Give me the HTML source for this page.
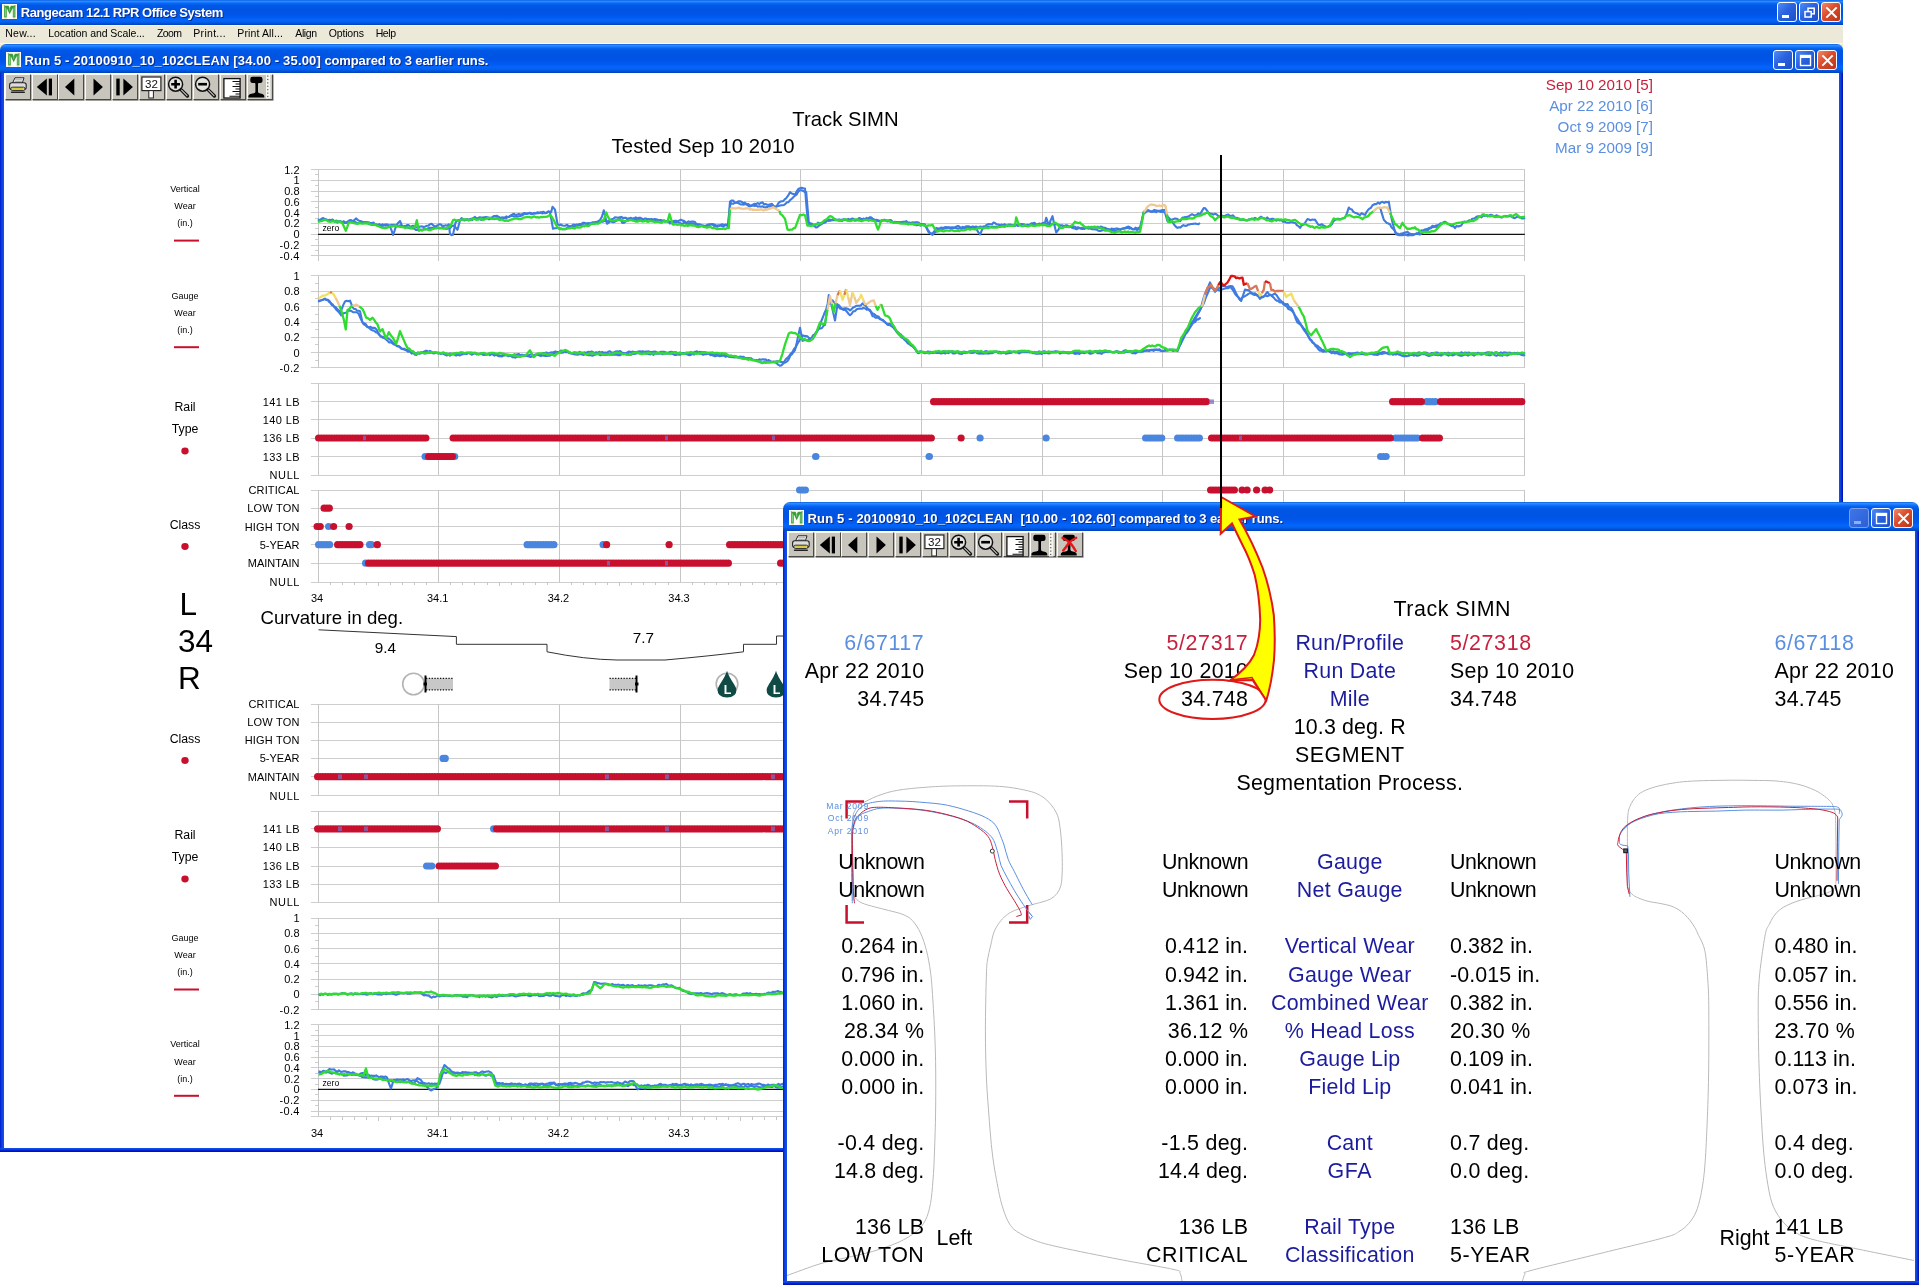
<!DOCTYPE html><html lang="en"><head><meta charset="utf-8"><title>Rangecam 12.1 RPR Office System</title><style>

*{box-sizing:border-box}
html,body{margin:0;padding:0;background:#fff}
body{width:1920px;height:1286px;position:relative;overflow:hidden;font-family:"Liberation Sans",sans-serif;color:#000}
.abs{position:absolute}
.tb{position:absolute;left:0;background:linear-gradient(to bottom,#0a5fe0 0%,#2f8bff 5%,#1a7cff 9%,#0566f3 14%,#0058e6 22%,#0054e3 40%,#0055e8 58%,#005bf3 70%,#0465fb 80%,#0160ee 88%,#0050d6 94%,#0040b8 100%)}
.ttl{position:absolute;color:#fff;font-weight:bold;font-size:13px;white-space:pre;text-shadow:1px 1px 0 #0a2a8a;line-height:16px}
.menu{position:absolute;left:0;top:25px;width:1843px;height:19px;background:#ece9d8;border-top:1px solid #f4f6fb;border-bottom:1px solid #fbfaf4}
.menu span{position:absolute;top:1.1px;font-size:10.5px;line-height:13px;white-space:pre;color:#000}
.btn{position:absolute;width:26px;height:25.6px;background:#c8c5bd;border:1px solid;border-color:#fbfaf6 #4a4844 #4a4844 #fbfaf6;border-right-width:1.4px;border-bottom-width:1.6px;box-shadow:0.6px 0.8px 0 #8a8880;overflow:visible}
.btn svg{position:absolute;left:0;top:0}
.cb{position:absolute;width:20px;height:20px;border:1px solid #fff;border-radius:3px;background:linear-gradient(135deg,#4f8df6 0%,#2a62e0 45%,#1c4fc8 100%)}
.cb.x{background:linear-gradient(135deg,#f0896a 0%,#dc4c2a 45%,#b8351a 100%)}
.cb.dis{border-color:#7d9ee8;background:linear-gradient(135deg,#3f76e6 0%,#2a5fd8 100%)}
.cb svg{position:absolute;left:0;top:0}
.t{position:absolute;white-space:pre}

</style></head><body><div id="root" style="position:absolute;left:0;top:0;width:1920px;height:1286px;will-change:transform">
<div class="tb" style="top:0;width:1843px;height:25px"></div><svg class="abs" style="left:2.1px;top:3.9px" width="15.4" height="15.4" viewBox="0 0 16 16"><rect x="0" y="0" width="16" height="16" fill="#fcfcf6"/><path d="M3.6 13.6V3.2H5.9L8 7.6L10.1 3.2H12.6V13.6" fill="none" stroke="#3a9c3a" stroke-width="2.7" stroke-linejoin="miter"/><path d="M3.7 13V3.6M12.5 13V3.6M8 4V7" stroke="#8ed88e" stroke-width="0.9"/><path d="M2.2 14.2H5M11.2 14.2H14M12.6 1.7H14.2M1.8 1.7H3" stroke="#e89a4a" stroke-width="1.1"/></svg><div class="ttl" style="left:20.8px;top:5px;letter-spacing:-0.45px">Rangecam 12.1 RPR Office System</div><div class="cb" style="left:1777px;top:2px"><svg width="19" height="19" viewBox="0 0 19 19"><rect x="4" y="12" width="7" height="3" fill="#fff"/></svg></div><div class="cb" style="left:1799px;top:2px"><svg width="19" height="19" viewBox="0 0 19 19"><rect x="8" y="5.2" width="6.2" height="5.6" fill="none" stroke="#fff" stroke-width="1.5"/><rect x="5" y="8.6" width="6.2" height="5.4" fill="#2a62e0" stroke="#fff" stroke-width="1.5"/></svg></div><div class="cb x" style="left:1821px;top:2px"><svg width="19" height="19" viewBox="0 0 19 19"><path d="M5 5L14 14M14 5L5 14" stroke="#fff" stroke-width="1.9" stroke-linecap="square"/></svg></div><div class="menu"><span style="left:5.3px;letter-spacing:0.24px">New...</span><span style="left:48.3px;letter-spacing:-0.08px">Location and Scale...</span><span style="left:157px;letter-spacing:-0.6px">Zoom</span><span style="left:193.3px;letter-spacing:0.29px">Print...</span><span style="left:237.3px;letter-spacing:0.12px">Print All...</span><span style="left:295.3px;letter-spacing:-0.41px">Align</span><span style="left:328.7px;letter-spacing:-0.15px">Options</span><span style="left:375.7px;letter-spacing:-0.43px">Help</span></div><div class="abs" style="left:0;top:44px;width:1843px;height:9px;background:#ece9d8"></div><div class="abs" style="left:0px;top:52px;width:1843px;height:1100px;background:#fff"></div><div class="abs" style="left:0px;top:52px;width:4px;height:1100px;background:linear-gradient(to right,#0019cf 0,#0a3cdc 35%,#1652e8 100%)"></div><div class="abs" style="left:1839px;top:52px;width:4px;height:1100px;background:linear-gradient(to right,#1652e8 0,#0a3cdc 50%,#0019cf 80%,#00138f 100%)"></div><div class="abs" style="left:0px;top:1148px;width:1843px;height:4px;background:linear-gradient(to bottom,#1652e8 0,#0a3cdc 40%,#0019cf 70%,#00138f 100%)"></div><div class="tb" style="top:44px;width:1843px;height:29px;border-radius:6px 6px 0 0;background-clip:padding-box"></div><svg class="abs" style="left:5.8px;top:51.8px" width="15.4" height="15.4" viewBox="0 0 16 16"><rect x="0" y="0" width="16" height="16" fill="#fcfcf6"/><path d="M3.6 13.6V3.2H5.9L8 7.6L10.1 3.2H12.6V13.6" fill="none" stroke="#3a9c3a" stroke-width="2.7" stroke-linejoin="miter"/><path d="M3.7 13V3.6M12.5 13V3.6M8 4V7" stroke="#8ed88e" stroke-width="0.9"/><path d="M2.2 14.2H5M11.2 14.2H14M12.6 1.7H14.2M1.8 1.7H3" stroke="#e89a4a" stroke-width="1.1"/></svg><div class="ttl" style="left:24.5px;top:52.6px;letter-spacing:0.15px">Run 5 - 20100910_10_102CLEAN [34.00 - 35.00]<span style="letter-spacing:-0.11px"> compared to 3 earlier runs.</span></div><div class="cb" style="left:1773px;top:50px"><svg width="19" height="19" viewBox="0 0 19 19"><rect x="4" y="12" width="7" height="3" fill="#fff"/></svg></div><div class="cb" style="left:1795px;top:50px"><svg width="19" height="19" viewBox="0 0 19 19"><rect x="4.5" y="4.5" width="10" height="10" fill="none" stroke="#fff" stroke-width="1.4"/><rect x="4" y="4" width="11" height="3" fill="#fff"/></svg></div><div class="cb x" style="left:1817px;top:50px"><svg width="19" height="19" viewBox="0 0 19 19"><path d="M5 5L14 14M14 5L5 14" stroke="#fff" stroke-width="1.9" stroke-linecap="square"/></svg></div><div class="btn" style="left:4.6px;top:74.2px"><svg width="26" height="26" viewBox="0 0 26 26" style="left:-1px;top:-1px"><path d="M7.5 9L10 3.8H19L17.3 9Z" fill="#fff" stroke="#222" stroke-width="1"/><path d="M10.2 5.8H17.3M9.6 7.4H16.8" stroke="#777" stroke-width=".7"/><rect x="4.6" y="8.8" width="16.6" height="6.6" rx="2.2" fill="#dcdcdc" stroke="#222" stroke-width="1.1"/><rect x="6" y="13.2" width="13.8" height="3.2" rx="1.2" fill="#f4f4f4" stroke="#222" stroke-width="1"/><path d="M7 14.9H18.8" stroke="#cdb800" stroke-width="1.3"/><path d="M6.6 18.2H19.2" stroke="#222" stroke-width="1.6" stroke-linecap="round"/></svg></div><div class="btn" style="left:31.5px;top:74.2px"><svg width="26" height="26" viewBox="0 0 26 26" style="left:-1px;top:-1px"><path d="M4.8 13L14.8 4.6V21.4Z" fill="#000"/><rect x="16.8" y="4.6" width="3.2" height="16.8" fill="#000"/></svg></div><div class="btn" style="left:58.4px;top:74.2px"><svg width="26" height="26" viewBox="0 0 26 26" style="left:-1px;top:-1px"><path d="M7 13L16.3 4.6V21.4Z" fill="#000"/></svg></div><div class="btn" style="left:85.29999999999998px;top:74.2px"><svg width="26" height="26" viewBox="0 0 26 26" style="left:-1px;top:-1px"><path d="M17.9 13L8.5 4.6V21.4Z" fill="#000"/></svg></div><div class="btn" style="left:112.19999999999999px;top:74.2px"><svg width="26" height="26" viewBox="0 0 26 26" style="left:-1px;top:-1px"><rect x="4.3" y="4.6" width="3.4" height="16.8" fill="#000"/><path d="M20.9 13L11.4 4.6V21.4Z" fill="#000"/></svg></div><div class="btn" style="left:139.1px;top:74.2px"><svg width="26" height="26" viewBox="0 0 26 26" style="left:-1px;top:-1px"><rect x="2.9" y="3" width="19" height="13.6" fill="#fff" stroke="#222" stroke-width="1.2"/><rect x="9.8" y="16.6" width="4.6" height="7.4" fill="#fff" stroke="#222" stroke-width="1"/><text x="12.4" y="14.2" font-family="Liberation Sans,sans-serif" font-size="11.6" text-anchor="middle" fill="#111">32</text></svg></div><div class="btn" style="left:165.99999999999997px;top:74.2px"><svg width="26" height="26" viewBox="0 0 26 26" style="left:-1px;top:-1px"><circle cx="9.6" cy="10.2" r="7" fill="#e2e2de" stroke="#111" stroke-width="1.5"/><path d="M9.6 5.8V14.6M5.2 10.2H14" stroke="#000" stroke-width="2.6"/><path d="M15 15.6L21.4 22" stroke="#111" stroke-width="3.4" stroke-linecap="round"/><path d="M15.6 16.2L21 21.6" stroke="#c8c8c8" stroke-width="1.1" stroke-linecap="round"/></svg></div><div class="btn" style="left:192.89999999999998px;top:74.2px"><svg width="26" height="26" viewBox="0 0 26 26" style="left:-1px;top:-1px"><circle cx="9.6" cy="10.2" r="7" fill="#e2e2de" stroke="#111" stroke-width="1.5"/><path d="M5.2 10.2H14" stroke="#000" stroke-width="2.6"/><path d="M15 15.6L21.4 22" stroke="#111" stroke-width="3.4" stroke-linecap="round"/><path d="M15.6 16.2L21 21.6" stroke="#c8c8c8" stroke-width="1.1" stroke-linecap="round"/></svg></div><div class="btn" style="left:219.79999999999998px;top:74.2px"><svg width="26" height="26" viewBox="0 0 26 26" style="left:-1px;top:-1px"><rect x="3.9" y="4.6" width="16.2" height="19.4" fill="#fff" stroke="#111" stroke-width="1.3"/><path d="M12.5 7.5H20M15.5 10H20M12.5 12.5H20M15.5 15H20M12.5 17.5H20M15.5 20H20M9.5 22.3H20" stroke="#111" stroke-width="1.1"/></svg></div><div class="btn" style="left:246.7px;top:74.2px"><svg width="26" height="26" viewBox="0 0 26 26" style="left:-1px;top:-1px"><path d="M5.50 2.8 H13.30 Q15.50 2.8 15.50 5 V7 Q15.50 9.1 13.30 9.1 H11.80 Q11.00 9.1 11.00 10 V17.5 Q11.00 19 12.50 19.2 L15.50 20 Q17.30 20.8 17.30 22 V23.4 H1.40 V22 Q1.40 20.8 3.20 20 L6.90 19.2 Q8.40 19 8.40 17.5 V10 Q8.40 9.1 7.60 9.1 H5.50 Q3.30 9.1 3.30 7 V5 Q3.30 2.8 5.50 2.8 Z" fill="#000"/><rect x="19" y="1" width="4.4" height="23.5" fill="#f6f6f2"/><path d="M20.8 1.5V24" stroke="#333" stroke-width="1" stroke-dasharray="1.2 2.2"/></svg></div>
<div class="abs" style="left:4px;top:73px;width:1835px;height:1075px;overflow:hidden"><div class="abs" style="left:-4px;top:-73px;width:1920px;height:1286px">
<svg class="abs" style="left:0;top:0" width="1920" height="1286" viewBox="0 0 1920 1286" font-family="Liberation Sans,sans-serif" fill="#000"><g fill="none" stroke-width="1" shape-rendering="crispEdges"><path d="M311 169.5H1524.8" stroke="#cecece"/><path d="M311 180.2H1524.8" stroke="#cecece"/><path d="M311 191H1524.8" stroke="#cecece"/><path d="M311 201.8H1524.8" stroke="#cecece"/><path d="M311 212.6H1524.8" stroke="#cecece"/><path d="M311 223.4H1524.8" stroke="#cecece"/><path d="M311 234.3H1524.8" stroke="#cecece"/><path d="M311 245H1524.8" stroke="#cecece"/><path d="M311 255.8H1524.8" stroke="#cecece"/><path d="M314.5 174.8H318" stroke="#cecece"/><path d="M314.5 185.6H318" stroke="#cecece"/><path d="M314.5 196.4H318" stroke="#cecece"/><path d="M314.5 207.2H318" stroke="#cecece"/><path d="M314.5 218H318" stroke="#cecece"/><path d="M314.5 228.9H318" stroke="#cecece"/><path d="M314.5 239.7H318" stroke="#cecece"/><path d="M314.5 250.4H318" stroke="#cecece"/><path d="M318 169.5V261" stroke="#c6c6c6"/><path d="M438.7 169.5V261" stroke="#c6c6c6"/><path d="M559.4 169.5V261" stroke="#c6c6c6"/><path d="M680 169.5V261" stroke="#c6c6c6"/><path d="M800.7 169.5V261" stroke="#c6c6c6"/><path d="M921.4 169.5V261" stroke="#c6c6c6"/><path d="M1042.1 169.5V261" stroke="#c6c6c6"/><path d="M1162.8 169.5V261" stroke="#c6c6c6"/><path d="M1283.4 169.5V261" stroke="#c6c6c6"/><path d="M1404.1 169.5V261" stroke="#c6c6c6"/><path d="M1524.8 169.5V261" stroke="#c6c6c6"/><path d="M311 275.6H1524.8" stroke="#cecece"/><path d="M311 291.4H1524.8" stroke="#cecece"/><path d="M311 306.5H1524.8" stroke="#cecece"/><path d="M311 322H1524.8" stroke="#cecece"/><path d="M311 337.3H1524.8" stroke="#cecece"/><path d="M311 352.5H1524.8" stroke="#cecece"/><path d="M311 367.8H1524.8" stroke="#cecece"/><path d="M314.5 283.5H318" stroke="#cecece"/><path d="M314.5 298.9H318" stroke="#cecece"/><path d="M314.5 314.2H318" stroke="#cecece"/><path d="M314.5 329.6H318" stroke="#cecece"/><path d="M314.5 344.9H318" stroke="#cecece"/><path d="M314.5 360.1H318" stroke="#cecece"/><path d="M318 275.6V368" stroke="#c6c6c6"/><path d="M438.7 275.6V368" stroke="#c6c6c6"/><path d="M559.4 275.6V368" stroke="#c6c6c6"/><path d="M680 275.6V368" stroke="#c6c6c6"/><path d="M800.7 275.6V368" stroke="#c6c6c6"/><path d="M921.4 275.6V368" stroke="#c6c6c6"/><path d="M1042.1 275.6V368" stroke="#c6c6c6"/><path d="M1162.8 275.6V368" stroke="#c6c6c6"/><path d="M1283.4 275.6V368" stroke="#c6c6c6"/><path d="M1404.1 275.6V368" stroke="#c6c6c6"/><path d="M1524.8 275.6V368" stroke="#c6c6c6"/><path d="M311 383H1524.8" stroke="#cecece"/><path d="M311 401.7H1524.8" stroke="#cecece"/><path d="M311 419.8H1524.8" stroke="#cecece"/><path d="M311 438H1524.8" stroke="#cecece"/><path d="M311 456.5H1524.8" stroke="#cecece"/><path d="M311 475.2H1524.8" stroke="#cecece"/><path d="M318 383V475.2" stroke="#c6c6c6"/><path d="M438.7 383V475.2" stroke="#c6c6c6"/><path d="M559.4 383V475.2" stroke="#c6c6c6"/><path d="M680 383V475.2" stroke="#c6c6c6"/><path d="M800.7 383V475.2" stroke="#c6c6c6"/><path d="M921.4 383V475.2" stroke="#c6c6c6"/><path d="M1042.1 383V475.2" stroke="#c6c6c6"/><path d="M1162.8 383V475.2" stroke="#c6c6c6"/><path d="M1283.4 383V475.2" stroke="#c6c6c6"/><path d="M1404.1 383V475.2" stroke="#c6c6c6"/><path d="M1524.8 383V475.2" stroke="#c6c6c6"/><path d="M311 490H1524.8" stroke="#cecece"/><path d="M311 508.2H1524.8" stroke="#cecece"/><path d="M311 526.5H1524.8" stroke="#cecece"/><path d="M311 544.7H1524.8" stroke="#cecece"/><path d="M311 563.2H1524.8" stroke="#cecece"/><path d="M311 582H1524.8" stroke="#cecece"/><path d="M318 490V582" stroke="#c6c6c6"/><path d="M438.7 490V582" stroke="#c6c6c6"/><path d="M559.4 490V582" stroke="#c6c6c6"/><path d="M680 490V582" stroke="#c6c6c6"/><path d="M800.7 490V582" stroke="#c6c6c6"/><path d="M921.4 490V582" stroke="#c6c6c6"/><path d="M1042.1 490V582" stroke="#c6c6c6"/><path d="M1162.8 490V582" stroke="#c6c6c6"/><path d="M1283.4 490V582" stroke="#c6c6c6"/><path d="M1404.1 490V582" stroke="#c6c6c6"/><path d="M1524.8 490V582" stroke="#c6c6c6"/><path d="M330.1 582v3M342.1 582v3M354.2 582v3M366.3 582v3M378.3 582v4M390.4 582v3M402.5 582v3M414.5 582v3M426.6 582v3M450.7 582v3M462.8 582v3M474.9 582v3M487 582v3M499 582v4M511.1 582v3M523.2 582v3M535.2 582v3M547.3 582v3M571.4 582v3M583.5 582v3M595.6 582v3M607.6 582v3M619.7 582v4M631.8 582v3M643.8 582v3M655.9 582v3M668 582v3M692.1 582v3M704.2 582v3M716.2 582v3M728.3 582v3M740.4 582v4M752.4 582v3M764.5 582v3M776.6 582v3M788.7 582v3M812.8 582v3M824.9 582v3M836.9 582v3M849 582v3M861.1 582v4M873.1 582v3M885.2 582v3M897.3 582v3M909.3 582v3M933.5 582v3M945.5 582v3M957.6 582v3M969.7 582v3M981.7 582v4M993.8 582v3M1005.9 582v3M1017.9 582v3M1030 582v3M1054.1 582v3M1066.2 582v3M1078.3 582v3M1090.4 582v3M1102.4 582v4M1114.5 582v3M1126.6 582v3M1138.6 582v3M1150.7 582v3M1174.8 582v3M1186.9 582v3M1199 582v3M1211 582v3M1223.1 582v4M1235.2 582v3M1247.2 582v3M1259.3 582v3M1271.4 582v3M1295.5 582v3M1307.6 582v3M1319.6 582v3M1331.7 582v3M1343.8 582v4M1355.8 582v3M1367.9 582v3M1380 582v3M1392.1 582v3M1416.2 582v3M1428.3 582v3M1440.3 582v3M1452.4 582v3M1464.5 582v4M1476.5 582v3M1488.6 582v3M1500.7 582v3M1512.7 582v3" stroke="#c6c6c6"/><path d="M311 704.2H1524.8" stroke="#cecece"/><path d="M311 722.2H1524.8" stroke="#cecece"/><path d="M311 740.2H1524.8" stroke="#cecece"/><path d="M311 758.4H1524.8" stroke="#cecece"/><path d="M311 776.7H1524.8" stroke="#cecece"/><path d="M311 795.6H1524.8" stroke="#cecece"/><path d="M318 704.2V795.6" stroke="#c6c6c6"/><path d="M438.7 704.2V795.6" stroke="#c6c6c6"/><path d="M559.4 704.2V795.6" stroke="#c6c6c6"/><path d="M680 704.2V795.6" stroke="#c6c6c6"/><path d="M800.7 704.2V795.6" stroke="#c6c6c6"/><path d="M921.4 704.2V795.6" stroke="#c6c6c6"/><path d="M1042.1 704.2V795.6" stroke="#c6c6c6"/><path d="M1162.8 704.2V795.6" stroke="#c6c6c6"/><path d="M1283.4 704.2V795.6" stroke="#c6c6c6"/><path d="M1404.1 704.2V795.6" stroke="#c6c6c6"/><path d="M1524.8 704.2V795.6" stroke="#c6c6c6"/><path d="M311 811H1524.8" stroke="#cecece"/><path d="M311 828.8H1524.8" stroke="#cecece"/><path d="M311 847.4H1524.8" stroke="#cecece"/><path d="M311 866H1524.8" stroke="#cecece"/><path d="M311 884.3H1524.8" stroke="#cecece"/><path d="M311 902H1524.8" stroke="#cecece"/><path d="M318 811V902" stroke="#c6c6c6"/><path d="M438.7 811V902" stroke="#c6c6c6"/><path d="M559.4 811V902" stroke="#c6c6c6"/><path d="M680 811V902" stroke="#c6c6c6"/><path d="M800.7 811V902" stroke="#c6c6c6"/><path d="M921.4 811V902" stroke="#c6c6c6"/><path d="M1042.1 811V902" stroke="#c6c6c6"/><path d="M1162.8 811V902" stroke="#c6c6c6"/><path d="M1283.4 811V902" stroke="#c6c6c6"/><path d="M1404.1 811V902" stroke="#c6c6c6"/><path d="M1524.8 811V902" stroke="#c6c6c6"/><path d="M311 918.1H1524.8" stroke="#cecece"/><path d="M311 933.3H1524.8" stroke="#cecece"/><path d="M311 948.5H1524.8" stroke="#cecece"/><path d="M311 963.8H1524.8" stroke="#cecece"/><path d="M311 979H1524.8" stroke="#cecece"/><path d="M311 994.3H1524.8" stroke="#cecece"/><path d="M311 1009.5H1524.8" stroke="#cecece"/><path d="M314.5 925.7H318" stroke="#cecece"/><path d="M314.5 940.9H318" stroke="#cecece"/><path d="M314.5 956.1H318" stroke="#cecece"/><path d="M314.5 971.4H318" stroke="#cecece"/><path d="M314.5 986.6H318" stroke="#cecece"/><path d="M314.5 1001.9H318" stroke="#cecece"/><path d="M318 918.1V1009.5" stroke="#c6c6c6"/><path d="M438.7 918.1V1009.5" stroke="#c6c6c6"/><path d="M559.4 918.1V1009.5" stroke="#c6c6c6"/><path d="M680 918.1V1009.5" stroke="#c6c6c6"/><path d="M800.7 918.1V1009.5" stroke="#c6c6c6"/><path d="M921.4 918.1V1009.5" stroke="#c6c6c6"/><path d="M1042.1 918.1V1009.5" stroke="#c6c6c6"/><path d="M1162.8 918.1V1009.5" stroke="#c6c6c6"/><path d="M1283.4 918.1V1009.5" stroke="#c6c6c6"/><path d="M1404.1 918.1V1009.5" stroke="#c6c6c6"/><path d="M1524.8 918.1V1009.5" stroke="#c6c6c6"/><path d="M311 1024.7H1524.8" stroke="#cecece"/><path d="M311 1035.5H1524.8" stroke="#cecece"/><path d="M311 1046.3H1524.8" stroke="#cecece"/><path d="M311 1057.1H1524.8" stroke="#cecece"/><path d="M311 1067.9H1524.8" stroke="#cecece"/><path d="M311 1078.6H1524.8" stroke="#cecece"/><path d="M311 1089.4H1524.8" stroke="#cecece"/><path d="M311 1100.2H1524.8" stroke="#cecece"/><path d="M311 1111H1524.8" stroke="#cecece"/><path d="M314.5 1030.1H318" stroke="#cecece"/><path d="M314.5 1040.9H318" stroke="#cecece"/><path d="M314.5 1051.7H318" stroke="#cecece"/><path d="M314.5 1062.5H318" stroke="#cecece"/><path d="M314.5 1073.2H318" stroke="#cecece"/><path d="M314.5 1084H318" stroke="#cecece"/><path d="M314.5 1094.8H318" stroke="#cecece"/><path d="M314.5 1105.6H318" stroke="#cecece"/><path d="M318 1024.7V1116.5" stroke="#c6c6c6"/><path d="M438.7 1024.7V1116.5" stroke="#c6c6c6"/><path d="M559.4 1024.7V1116.5" stroke="#c6c6c6"/><path d="M680 1024.7V1116.5" stroke="#c6c6c6"/><path d="M800.7 1024.7V1116.5" stroke="#c6c6c6"/><path d="M921.4 1024.7V1116.5" stroke="#c6c6c6"/><path d="M1042.1 1024.7V1116.5" stroke="#c6c6c6"/><path d="M1162.8 1024.7V1116.5" stroke="#c6c6c6"/><path d="M1283.4 1024.7V1116.5" stroke="#c6c6c6"/><path d="M1404.1 1024.7V1116.5" stroke="#c6c6c6"/><path d="M1524.8 1024.7V1116.5" stroke="#c6c6c6"/><path d="M330.1 1116.5v3M342.1 1116.5v3M354.2 1116.5v3M366.3 1116.5v3M378.3 1116.5v4M390.4 1116.5v3M402.5 1116.5v3M414.5 1116.5v3M426.6 1116.5v3M450.7 1116.5v3M462.8 1116.5v3M474.9 1116.5v3M487 1116.5v3M499 1116.5v4M511.1 1116.5v3M523.2 1116.5v3M535.2 1116.5v3M547.3 1116.5v3M571.4 1116.5v3M583.5 1116.5v3M595.6 1116.5v3M607.6 1116.5v3M619.7 1116.5v4M631.8 1116.5v3M643.8 1116.5v3M655.9 1116.5v3M668 1116.5v3M692.1 1116.5v3M704.2 1116.5v3M716.2 1116.5v3M728.3 1116.5v3M740.4 1116.5v4M752.4 1116.5v3M764.5 1116.5v3M776.6 1116.5v3M788.7 1116.5v3M812.8 1116.5v3M824.9 1116.5v3M836.9 1116.5v3M849 1116.5v3M861.1 1116.5v4M873.1 1116.5v3M885.2 1116.5v3M897.3 1116.5v3M909.3 1116.5v3M933.5 1116.5v3M945.5 1116.5v3M957.6 1116.5v3M969.7 1116.5v3M981.7 1116.5v4M993.8 1116.5v3M1005.9 1116.5v3M1017.9 1116.5v3M1030 1116.5v3M1054.1 1116.5v3M1066.2 1116.5v3M1078.3 1116.5v3M1090.4 1116.5v3M1102.4 1116.5v4M1114.5 1116.5v3M1126.6 1116.5v3M1138.6 1116.5v3M1150.7 1116.5v3M1174.8 1116.5v3M1186.9 1116.5v3M1199 1116.5v3M1211 1116.5v3M1223.1 1116.5v4M1235.2 1116.5v3M1247.2 1116.5v3M1259.3 1116.5v3M1271.4 1116.5v3M1295.5 1116.5v3M1307.6 1116.5v3M1319.6 1116.5v3M1331.7 1116.5v3M1343.8 1116.5v4M1355.8 1116.5v3M1367.9 1116.5v3M1380 1116.5v3M1392.1 1116.5v3M1416.2 1116.5v3M1428.3 1116.5v3M1440.3 1116.5v3M1452.4 1116.5v3M1464.5 1116.5v4M1476.5 1116.5v3M1488.6 1116.5v3M1500.7 1116.5v3M1512.7 1116.5v3" stroke="#c6c6c6"/><path d="M311 1116.5H1524.8" stroke="#cecece"/></g><path d="M318 234.3H1524.8" stroke="#111" stroke-width="1.3"/><text x="322.5" y="230.8" font-size="8.6">zero</text><path d="M318 1089.4H1524.8" stroke="#111" stroke-width="1.3"/><text x="322.5" y="1085.9" font-size="8.6">zero</text><text x="299.5" y="173.5" font-size="11" text-anchor="end">1.2</text><text x="299.5" y="184.2" font-size="11" text-anchor="end">1</text><text x="299.5" y="195" font-size="11" text-anchor="end">0.8</text><text x="299.5" y="205.8" font-size="11" text-anchor="end">0.6</text><text x="299.5" y="216.6" font-size="11" text-anchor="end">0.4</text><text x="299.5" y="227.4" font-size="11" text-anchor="end">0.2</text><text x="299.5" y="238.3" font-size="11" text-anchor="end">0</text><text x="299.85" y="249" font-size="11" text-anchor="end" letter-spacing="0.35">-0.2</text><text x="299.85" y="259.8" font-size="11" text-anchor="end" letter-spacing="0.35">-0.4</text><text x="299.5" y="279.6" font-size="11" text-anchor="end">1</text><text x="299.5" y="295.4" font-size="11" text-anchor="end">0.8</text><text x="299.5" y="310.5" font-size="11" text-anchor="end">0.6</text><text x="299.5" y="326" font-size="11" text-anchor="end">0.4</text><text x="299.5" y="341.3" font-size="11" text-anchor="end">0.2</text><text x="299.5" y="356.5" font-size="11" text-anchor="end">0</text><text x="299.85" y="371.8" font-size="11" text-anchor="end" letter-spacing="0.35">-0.2</text><text x="299.87" y="405.7" font-size="11" text-anchor="end" letter-spacing="0.37">141 LB</text><text x="299.87" y="423.8" font-size="11" text-anchor="end" letter-spacing="0.37">140 LB</text><text x="299.87" y="442" font-size="11" text-anchor="end" letter-spacing="0.37">136 LB</text><text x="299.87" y="460.5" font-size="11" text-anchor="end" letter-spacing="0.37">133 LB</text><text x="300.1" y="479.2" font-size="11" text-anchor="end" letter-spacing="0.6">NULL</text><text x="299.62" y="494" font-size="11" text-anchor="end" letter-spacing="0.12">CRITICAL</text><text x="299.72" y="512.2" font-size="11" text-anchor="end" letter-spacing="0.22">LOW TON</text><text x="299.7" y="530.5" font-size="11" text-anchor="end" letter-spacing="0.2">HIGH TON</text><text x="299.5" y="548.7" font-size="11" text-anchor="end">5-YEAR</text><text x="299.5" y="567.2" font-size="11" text-anchor="end">MAINTAIN</text><text x="300.1" y="586" font-size="11" text-anchor="end" letter-spacing="0.6">NULL</text><text x="299.62" y="708.2" font-size="11" text-anchor="end" letter-spacing="0.12">CRITICAL</text><text x="299.72" y="726.2" font-size="11" text-anchor="end" letter-spacing="0.22">LOW TON</text><text x="299.7" y="744.2" font-size="11" text-anchor="end" letter-spacing="0.2">HIGH TON</text><text x="299.5" y="762.4" font-size="11" text-anchor="end">5-YEAR</text><text x="299.5" y="780.7" font-size="11" text-anchor="end">MAINTAIN</text><text x="300.1" y="799.6" font-size="11" text-anchor="end" letter-spacing="0.6">NULL</text><text x="299.87" y="832.8" font-size="11" text-anchor="end" letter-spacing="0.37">141 LB</text><text x="299.87" y="851.4" font-size="11" text-anchor="end" letter-spacing="0.37">140 LB</text><text x="299.87" y="870" font-size="11" text-anchor="end" letter-spacing="0.37">136 LB</text><text x="299.87" y="888.3" font-size="11" text-anchor="end" letter-spacing="0.37">133 LB</text><text x="300.1" y="906" font-size="11" text-anchor="end" letter-spacing="0.6">NULL</text><text x="299.5" y="922.1" font-size="11" text-anchor="end">1</text><text x="299.5" y="937.3" font-size="11" text-anchor="end">0.8</text><text x="299.5" y="952.5" font-size="11" text-anchor="end">0.6</text><text x="299.5" y="967.8" font-size="11" text-anchor="end">0.4</text><text x="299.5" y="983" font-size="11" text-anchor="end">0.2</text><text x="299.5" y="998.3" font-size="11" text-anchor="end">0</text><text x="299.85" y="1013.5" font-size="11" text-anchor="end" letter-spacing="0.35">-0.2</text><text x="299.5" y="1028.7" font-size="11" text-anchor="end">1.2</text><text x="299.5" y="1039.5" font-size="11" text-anchor="end">1</text><text x="299.5" y="1050.3" font-size="11" text-anchor="end">0.8</text><text x="299.5" y="1061.1" font-size="11" text-anchor="end">0.6</text><text x="299.5" y="1071.9" font-size="11" text-anchor="end">0.4</text><text x="299.5" y="1082.6" font-size="11" text-anchor="end">0.2</text><text x="299.5" y="1093.4" font-size="11" text-anchor="end">0</text><text x="299.85" y="1104.2" font-size="11" text-anchor="end" letter-spacing="0.35">-0.2</text><text x="299.85" y="1115" font-size="11" text-anchor="end" letter-spacing="0.35">-0.4</text><text x="317" y="602.3" font-size="11" text-anchor="middle">34</text><text x="437.7" y="602.3" font-size="11" text-anchor="middle">34.1</text><text x="558.4" y="602.3" font-size="11" text-anchor="middle">34.2</text><text x="679" y="602.3" font-size="11" text-anchor="middle">34.3</text><text x="799.7" y="602.3" font-size="11" text-anchor="middle">34.4</text><text x="920.4" y="602.3" font-size="11" text-anchor="middle">34.5</text><text x="1041.1" y="602.3" font-size="11" text-anchor="middle">34.6</text><text x="1161.8" y="602.3" font-size="11" text-anchor="middle">34.7</text><text x="1282.4" y="602.3" font-size="11" text-anchor="middle">34.8</text><text x="1403.1" y="602.3" font-size="11" text-anchor="middle">34.9</text><text x="1523.8" y="602.3" font-size="11" text-anchor="middle">35</text><text x="317" y="1137.3" font-size="11" text-anchor="middle">34</text><text x="437.7" y="1137.3" font-size="11" text-anchor="middle">34.1</text><text x="558.4" y="1137.3" font-size="11" text-anchor="middle">34.2</text><text x="679" y="1137.3" font-size="11" text-anchor="middle">34.3</text><text x="799.7" y="1137.3" font-size="11" text-anchor="middle">34.4</text><text x="920.4" y="1137.3" font-size="11" text-anchor="middle">34.5</text><text x="1041.1" y="1137.3" font-size="11" text-anchor="middle">34.6</text><text x="1161.8" y="1137.3" font-size="11" text-anchor="middle">34.7</text><text x="1282.4" y="1137.3" font-size="11" text-anchor="middle">34.8</text><text x="1403.1" y="1137.3" font-size="11" text-anchor="middle">34.9</text><text x="1523.8" y="1137.3" font-size="11" text-anchor="middle">35</text><text x="185" y="192" font-size="9" text-anchor="middle">Vertical</text><text x="185" y="209.2" font-size="9" text-anchor="middle">Wear</text><text x="185" y="226.4" font-size="9" text-anchor="middle">(in.)</text><path d="M174 240.6H199" stroke="#c8102e" stroke-width="2"/><text x="185" y="299.3" font-size="9" text-anchor="middle">Gauge</text><text x="185" y="316.3" font-size="9" text-anchor="middle">Wear</text><text x="185" y="333.3" font-size="9" text-anchor="middle">(in.)</text><path d="M174 347.2H199" stroke="#c8102e" stroke-width="2"/><text x="185" y="411" font-size="12.3" text-anchor="middle">Rail</text><text x="185" y="433.3" font-size="12.3" text-anchor="middle">Type</text><ellipse cx="185" cy="451" rx="3.7" ry="3.4" fill="#c8102e"/><text x="185" y="529" font-size="12.3" text-anchor="middle">Class</text><ellipse cx="185" cy="546.5" rx="3.7" ry="3.4" fill="#c8102e"/><text x="185" y="743" font-size="12.3" text-anchor="middle">Class</text><ellipse cx="185" cy="760.5" rx="3.7" ry="3.4" fill="#c8102e"/><text x="185" y="839" font-size="12.3" text-anchor="middle">Rail</text><text x="185" y="861.3" font-size="12.3" text-anchor="middle">Type</text><ellipse cx="185" cy="879" rx="3.7" ry="3.4" fill="#c8102e"/><text x="185" y="941" font-size="9" text-anchor="middle">Gauge</text><text x="185" y="958.2" font-size="9" text-anchor="middle">Wear</text><text x="185" y="975.4" font-size="9" text-anchor="middle">(in.)</text><path d="M174 989.5H199" stroke="#c8102e" stroke-width="2"/><text x="185" y="1047.3" font-size="9" text-anchor="middle">Vertical</text><text x="185" y="1064.7" font-size="9" text-anchor="middle">Wear</text><text x="185" y="1082.1" font-size="9" text-anchor="middle">(in.)</text><path d="M174 1095.8H199" stroke="#c8102e" stroke-width="2"/><text x="845.5" y="125.5" font-size="20.3" text-anchor="middle">Track SIMN</text><text x="703" y="153.1" font-size="20.3" text-anchor="middle" letter-spacing="0.15">Tested Sep 10 2010</text><text x="1653" y="90.3" font-size="15.2" text-anchor="end" fill="#c8203c">Sep 10 2010 [5]</text><text x="1653" y="111.1" font-size="15.2" text-anchor="end" fill="#5a8fe0">Apr 22 2010 [6]</text><text x="1653" y="131.9" font-size="15.2" text-anchor="end" fill="#5a8fe0">Oct 9 2009 [7]</text><text x="1653" y="152.7" font-size="15.2" text-anchor="end" fill="#5a8fe0">Mar 9 2009 [9]</text><text x="179.5" y="615" font-size="31.5">L</text><text x="178" y="652" font-size="31.5">34</text><text x="178" y="689" font-size="31.5">R</text><text x="260.5" y="624.3" font-size="18.6">Curvature in deg.</text><text x="385.3" y="653" font-size="15.3" text-anchor="middle">9.4</text><text x="643.3" y="643.1" font-size="15.3" text-anchor="middle">7.7</text><path d="M318.5 629.8L456.4 636.6V644.3H547V651.8Q585 659.5 617 660H665Q710 656 743.5 651.8V644.3H776.5V636H800" fill="none" stroke="#333" stroke-width="1"/><circle cx="413.5" cy="684" r="10.8" fill="#fff" stroke="#b4b4b4" stroke-width="1.6"/><rect x="426" y="678.3" width="27" height="11.6" fill="#c8c8c8"/><path d="M426 678.3H453M426 689.9H453" stroke="#111" stroke-width="1.3" stroke-dasharray="1.3 1.5"/><path d="M425.5 675.5V692.5" stroke="#000" stroke-width="2"/><path d="M423.5 684H427" stroke="#000" stroke-width="3"/><rect x="609.5" y="678.3" width="26" height="11.6" fill="#c8c8c8"/><path d="M609.5 678.3H636M609.5 689.9H636" stroke="#111" stroke-width="1.3" stroke-dasharray="1.3 1.5"/><path d="M636.5 675.5V692.5" stroke="#000" stroke-width="2"/><path d="M635 684H638.5" stroke="#000" stroke-width="3"/><circle cx="727" cy="684" r="10.8" fill="#fff" stroke="#b4b4b4" stroke-width="1.6"/><path d="M727 670.8Q728.2 675.5 734.2 684.5Q738.5 691 734.5 695Q731.5 697.6 727 697.6Q722.5 697.6 719.5 695Q715.5 691 719.8 684.5Q725.8 675.5 727 670.8Z" fill="#0f4a44"/><text x="727.5" y="694.3" font-size="12.5" font-weight="bold" fill="#fff" text-anchor="middle">L</text><path d="M776 670.8Q777.2 675.5 783.2 684.5Q787.5 691 783.5 695Q780.5 697.6 776 697.6Q771.5 697.6 768.5 695Q764.5 691 768.8 684.5Q774.8 675.5 776 670.8Z" fill="#0f4a44"/><text x="776.5" y="694.3" font-size="12.5" font-weight="bold" fill="#fff" text-anchor="middle">L</text><path d="M1426.6 401.7H1435.4" stroke="#4a86e0" stroke-width="7.2" stroke-linecap="round" stroke-dasharray="0.01 2.923"/><path d="M933.6 401.7H1206.4" stroke="#c8102e" stroke-width="7.2" stroke-linecap="round" stroke-dasharray="0.01 2.588"/><path d="M1392.6 401.7H1421.4" stroke="#c8102e" stroke-width="7.2" stroke-linecap="round" stroke-dasharray="0.01 2.608"/><path d="M1440.6 401.7H1524.4" stroke="#c8102e" stroke-width="7.2" stroke-linecap="round" stroke-dasharray="0.01 2.609"/><path d="M1209 401.7H1214" stroke="#7a6cc0" stroke-width="4.5" opacity=".75"/><path d="M1145.6 438H1164.4" stroke="#4a86e0" stroke-width="7.2" stroke-linecap="round" stroke-dasharray="0.01 2.676"/><path d="M1177.6 438H1199.4" stroke="#4a86e0" stroke-width="7.2" stroke-linecap="round" stroke-dasharray="0.01 2.715"/><path d="M1395.6 438H1417.4" stroke="#4a86e0" stroke-width="7.2" stroke-linecap="round" stroke-dasharray="0.01 2.715"/><path d="M980.1 438H980.1" stroke="#4a86e0" stroke-width="7.2" stroke-linecap="round"/><path d="M1046.1 438H1046.1" stroke="#4a86e0" stroke-width="7.2" stroke-linecap="round"/><path d="M318.6 438H425.9" stroke="#c8102e" stroke-width="7.2" stroke-linecap="round" stroke-dasharray="0.01 2.607"/><path d="M453.1 438H931.4" stroke="#c8102e" stroke-width="7.2" stroke-linecap="round" stroke-dasharray="0.01 2.589"/><path d="M961.1 438H961.1" stroke="#c8102e" stroke-width="7.2" stroke-linecap="round"/><path d="M1211.6 438H1390.4" stroke="#c8102e" stroke-width="7.2" stroke-linecap="round" stroke-dasharray="0.01 2.581"/><path d="M1422.6 438H1439.4" stroke="#c8102e" stroke-width="7.2" stroke-linecap="round" stroke-dasharray="0.01 2.790"/><path d="M363 438H366" stroke="#7a6cc0" stroke-width="4.5" opacity=".75"/><path d="M607 438H610" stroke="#7a6cc0" stroke-width="4.5" opacity=".75"/><path d="M665 438H668" stroke="#7a6cc0" stroke-width="4.5" opacity=".75"/><path d="M772 438H775" stroke="#7a6cc0" stroke-width="4.5" opacity=".75"/><path d="M1239 438H1242" stroke="#7a6cc0" stroke-width="4.5" opacity=".75"/><path d="M425.1 456.5H457.4" stroke="#4a86e0" stroke-width="7.2" stroke-linecap="round" stroke-dasharray="0.01 2.682"/><path d="M815.6 456.5H815.9" stroke="#4a86e0" stroke-width="7.2" stroke-linecap="round"/><path d="M929.1 456.5H929.4" stroke="#4a86e0" stroke-width="7.2" stroke-linecap="round"/><path d="M1380.6 456.5H1388.9" stroke="#4a86e0" stroke-width="7.2" stroke-linecap="round" stroke-dasharray="0.01 2.757"/><path d="M428.6 456.5H452.4" stroke="#c8102e" stroke-width="7.2" stroke-linecap="round" stroke-dasharray="0.01 2.634"/><path d="M799.6 490H805.4" stroke="#4a86e0" stroke-width="7.2" stroke-linecap="round" stroke-dasharray="0.01 2.890"/><path d="M1210.6 490H1234.4" stroke="#c8102e" stroke-width="7.2" stroke-linecap="round" stroke-dasharray="0.01 2.634"/><path d="M1242.1 490H1242.1" stroke="#c8102e" stroke-width="7.2" stroke-linecap="round"/><path d="M1247.1 490H1247.1" stroke="#c8102e" stroke-width="7.2" stroke-linecap="round"/><path d="M1256.6 490H1256.6" stroke="#c8102e" stroke-width="7.2" stroke-linecap="round"/><path d="M1265.1 490H1265.1" stroke="#c8102e" stroke-width="7.2" stroke-linecap="round"/><path d="M1269.6 490H1269.6" stroke="#c8102e" stroke-width="7.2" stroke-linecap="round"/><path d="M324.1 508.2H331.9" stroke="#c8102e" stroke-width="7.2" stroke-linecap="round" stroke-dasharray="0.01 2.590"/><path d="M328.6 526.5H328.6" stroke="#4a86e0" stroke-width="7.2" stroke-linecap="round"/><path d="M317.1 526.5H323.4" stroke="#c8102e" stroke-width="7.2" stroke-linecap="round" stroke-dasharray="0.01 3.140"/><path d="M333.6 526.5H336.9" stroke="#c8102e" stroke-width="7.2" stroke-linecap="round" stroke-dasharray="0.01 3.290"/><path d="M349.1 526.5H349.1" stroke="#c8102e" stroke-width="7.2" stroke-linecap="round"/><path d="M318.6 544.7H332.4" stroke="#4a86e0" stroke-width="7.2" stroke-linecap="round" stroke-dasharray="0.01 2.750"/><path d="M369.6 544.7H371.4" stroke="#4a86e0" stroke-width="7.2" stroke-linecap="round"/><path d="M527.1 544.7H553.9" stroke="#4a86e0" stroke-width="7.2" stroke-linecap="round" stroke-dasharray="0.01 2.670"/><path d="M603.1 544.7H603.1" stroke="#4a86e0" stroke-width="7.2" stroke-linecap="round"/><path d="M337.6 544.7H362.4" stroke="#c8102e" stroke-width="7.2" stroke-linecap="round" stroke-dasharray="0.01 2.470"/><path d="M377.1 544.7H377.4" stroke="#c8102e" stroke-width="7.2" stroke-linecap="round"/><path d="M606.6 544.7H606.6" stroke="#c8102e" stroke-width="7.2" stroke-linecap="round"/><path d="M669.1 544.7H669.1" stroke="#c8102e" stroke-width="7.2" stroke-linecap="round"/><path d="M729.6 544.7H796.4" stroke="#c8102e" stroke-width="7.2" stroke-linecap="round" stroke-dasharray="0.01 2.559"/><path d="M365.6 563.2H365.6" stroke="#4a86e0" stroke-width="7.2" stroke-linecap="round"/><path d="M368.6 563.2H728.4" stroke="#c8102e" stroke-width="7.2" stroke-linecap="round" stroke-dasharray="0.01 2.597"/><path d="M780.6 563.2H796.4" stroke="#c8102e" stroke-width="7.2" stroke-linecap="round" stroke-dasharray="0.01 2.623"/><path d="M607 563.2H610" stroke="#7a6cc0" stroke-width="4.5" opacity=".75"/><path d="M665 563.2H668" stroke="#7a6cc0" stroke-width="4.5" opacity=".75"/><path d="M443.1 758.4H447.4" stroke="#4a86e0" stroke-width="7.2" stroke-linecap="round" stroke-dasharray="0.01 2.140"/><path d="M317.6 776.7H796.4" stroke="#c8102e" stroke-width="7.2" stroke-linecap="round" stroke-dasharray="0.01 2.592"/><path d="M338 776.7H342" stroke="#7a6cc0" stroke-width="4.5" opacity=".75"/><path d="M364 776.7H368" stroke="#7a6cc0" stroke-width="4.5" opacity=".75"/><path d="M605 776.7H609" stroke="#7a6cc0" stroke-width="4.5" opacity=".75"/><path d="M665 776.7H669" stroke="#7a6cc0" stroke-width="4.5" opacity=".75"/><path d="M771 776.7H775" stroke="#7a6cc0" stroke-width="4.5" opacity=".75"/><path d="M493.6 828.8H493.6" stroke="#4a86e0" stroke-width="7.2" stroke-linecap="round"/><path d="M317.6 828.8H437.4" stroke="#c8102e" stroke-width="7.2" stroke-linecap="round" stroke-dasharray="0.01 2.594"/><path d="M496.6 828.8H796.4" stroke="#c8102e" stroke-width="7.2" stroke-linecap="round" stroke-dasharray="0.01 2.597"/><path d="M338 828.8H342" stroke="#7a6cc0" stroke-width="4.5" opacity=".75"/><path d="M364 828.8H368" stroke="#7a6cc0" stroke-width="4.5" opacity=".75"/><path d="M605 828.8H609" stroke="#7a6cc0" stroke-width="4.5" opacity=".75"/><path d="M665 828.8H669" stroke="#7a6cc0" stroke-width="4.5" opacity=".75"/><path d="M771 828.8H775" stroke="#7a6cc0" stroke-width="4.5" opacity=".75"/><path d="M426.6 866H434.4" stroke="#4a86e0" stroke-width="7.2" stroke-linecap="round" stroke-dasharray="0.01 2.590"/><path d="M439.1 866H495.4" stroke="#c8102e" stroke-width="7.2" stroke-linecap="round" stroke-dasharray="0.01 2.549"/><g fill="none" stroke-width="2.3" stroke-linejoin="round"><path d="M318 219.1L319.8 220.3L321.5 220.6L323.2 219.4L325 219.4L326.6 219.6L328.1 220.4L329.7 221.3L331.2 220.1L332.8 219.6L334.4 221.6L335.9 221.6L337.5 222.6L339.1 221L340.6 221.3L342.2 222.1L343.8 221.2L345.3 222.5L346.9 223L348.4 221L350 220.1L351.6 220.4L353.1 221.1L354.7 219.7L356.2 218.4L358.1 220.3L360 221.1L361.5 221.4L363 222.1L364.5 222.7L366 222.4L367.5 222.3L369 222.4L370.5 223.1L372 223.1L373.5 222.5L375 224.3L376.5 224.5L378 224.9L379.5 224.1L381 225.8L382.5 226.3L384 224.8L385.5 224.6L387 225.6L388.5 226L390 226.8L391.5 230.2L393 235L394.6 230.6L396.2 225.4L398.1 222.9L400 221L402.5 226.8L404 226.2L405.5 226.3L407 225L408.5 225.1L410 226.5L411.5 226.3L413 225.7L414.5 226.4L416 227.2L417.5 227.6L419.1 226.8L420.6 226.5L422.2 226.4L423.8 226.9L425.3 226.4L426.9 225.8L428.4 225.6L430 224.3L431.6 223.8L433.1 225.1L434.7 226.3L436.2 225.9L437.8 225.1L439.4 224.2L440.9 224.6L442.5 225.8L444.1 225.9L445.6 225.3L447.2 225.7L448.8 224.4L450 234L451.5 235.1L453 234.7L455.5 222.7L457 220.9L458.5 220.1L460 220.1L461.5 218.2L463 219.2L464.5 219.6L466 220L467.5 219.7L469 219.7L470.5 218.9L472 218.6L473.5 218.1L475 216.9L476.6 218.4L478.1 218.2L479.7 217.2L481.2 217.5L482.8 217.5L484.4 217.2L485.9 217L487.5 217.3L489.1 217.7L490.6 217.7L492.2 217.4L493.8 216.1L495.3 216L496.9 215.8L498.4 216.7L500 217.7L501.6 217.9L503.1 217.9L504.7 217.8L506.2 216.4L507.8 217L509.4 216.9L510.9 215.3L512.5 214.3L514.1 213.8L515.6 215.2L517.2 214.6L518.8 213.9L520.3 214.7L521.9 214.3L523.4 213.4L525 213.1L526.5 213.8L528.1 213.2L529.6 213.1L531.2 214.1L532.7 213.8L534.2 213.3L535.8 213.4L537.3 212.3L538.8 212.6L540.4 212.8L541.9 212.2L543.5 211.7L545 213.3L546.6 212.7L548.1 211.5L549.7 211.7L551.2 212L552.5 206.7L555 209.7L557.5 224L559.1 225.3L560.7 224.5L562.3 225.5L563.9 225.8L565.5 225.6L567 224.7L568.6 226.1L570.2 226.3L571.8 225.6L573.4 224.6L575 225.2L576.6 224.6L578.1 224.7L579.7 224L581.2 224.3L582.8 222.9L584.4 222.7L585.9 224.2L587.5 224.5L589.1 223.1L590.6 223.7L592.2 222.5L593.8 223.4L595.3 223.2L596.9 222.2L598.4 221.2L600 220.1L601.9 216.7L603.8 210.3L605.4 217.2L607 223.8L608.6 222.8L610.2 221.2L611.9 221.9L613.5 222.2L615.1 221.5L616.8 220.4L618.4 219.4L620 218.6L622.5 222.9L624 222.8L625.5 221.7L627 220.1L628.5 218.6L630 218.8L631.5 218.5L633.1 218.9L634.6 218.7L636.2 220L637.7 220.6L639.2 218.9L640.8 218.5L642.3 218.8L643.8 220.5L645.4 220.8L646.9 219.9L648.5 219.3L650 220.1L651.7 220.8L653.3 221.3L655 220L656.7 220.7L658.3 220.5L660 219.9L661.7 221.4L663.3 220.6L665 221.8L666.7 221.1L668.3 221.3L670 223.5L671.6 222.1L673.1 222.7L674.7 222.3L676.2 222.5L677.8 221.3L679.4 220.4L680.9 219.7L682.5 220.6L684 220.9L685.5 222.1L687 222.7L688.5 221.4L690 222L691.7 221.6L693.3 221.6L695 222L696.7 224.4L698.3 225.7L700 226.6L701.6 225.6L703.1 225.8L704.7 226.3L706.2 225.6L707.8 225.7L709.4 224.9L710.9 224.2L712.5 224.4L714.1 225.9L715.6 225.9L717.2 226.7L718.8 225.9L720.3 225.2L721.9 226L723.4 226.5L725 224.8L726.9 225.6L728.8 224.6L728 226.1L730 201.6L731.7 200.5L733.3 200.6L735 202.6L736.7 202.2L738.3 201.4L740 201.3L741.7 201.7L743.3 203.2L745 202.6L746.7 204.4L748.3 204.1L750 205.6L751.6 205.9L753.1 204.5L754.7 203.8L756.2 204L757.8 203.1L759.4 204L760.9 202.9L762.5 202.3L764.1 204.6L765.6 204.1L767.2 204.7L768.8 204.7L770.3 204.4L771.9 203.8L773.4 205.7L775 206.8L776.7 206.2L778.3 203.3L780 201.7L781.6 201.2L783.1 201.1L784.7 199.4L786.2 198.2L788.1 195.7L790 192.2L791.7 193.5L793.3 194L795 194.7L796.7 191.4L798.3 189L800 188.2L801.7 187.8L803.3 188.3L805 188.5L806.5 206.6L808 222.8L809.6 222.9L811.2 223.4L812.8 224.1L814.3 226L815.9 227.4L817.5 227.1L819 225.5L820.5 224.7L822 223.9L823.5 222.9L825 221L826.6 220L828.1 220L829.7 219.5L831.2 220.4L832.8 219.6L834.4 219.1L835.9 220.2L837.5 219.8L839.1 220.8L840.6 220.4L842.2 221.1L843.8 219.6L845.3 219.7L846.9 220.4L848.4 218.9L850 220.3L851.5 218.9L853 219.8L854.5 220.6L856 220.5L857.5 219.2L859 218L860.5 218.4L862 219.6L863.5 218.5L865 219.4L866.5 217.9L868 219.1L869.5 217.4L871 217.3L872.5 218.6L874 219.5L875.5 220.4L877 221L878.5 221.3L880 221.5L881.5 220.3L883.1 220.4L884.6 219.9L886.2 221L887.7 221.5L889.2 220.8L890.8 220.1L892.3 222L893.8 222.5L895.4 222.2L896.9 222.1L898.5 222.9L900 222.3L901.6 222.1L903.1 221.9L904.7 221.7L906.2 221.1L907.8 222.5L909.4 222.6L910.9 223.1L912.5 222.2L914.1 222.6L915.6 222.3L917.2 222.3L918.8 222.6L920.3 224.3L921.9 224L923.4 224L925 224.6L926.9 228.7L928.8 232.5L930.6 233.4L932.5 233.7L934.4 231.2L936.2 228L937.8 228.4L939.4 228.7L940.9 227.6L942.5 227.7L944 227.7L945.5 227L947.1 227.2L948.6 227.6L950.2 228.6L951.8 229L953.3 227.7L954.9 227.9L956.4 226.6L958 226L959.5 226.8L961 228L962.6 226.8L964.1 227.7L965.7 228.3L967.2 227.2L968.8 227.6L970.4 228.2L971.9 227.2L973.5 227.6L975 227.8L976.7 229.6L978.3 232.1L980 234.5L982.5 228.8L984.1 227.5L985.6 225.7L987.2 224.7L988.8 224L990.3 224.2L991.9 224.5L993.4 222.6L995 223.1L996.7 224.4L998.3 224.5L1000 225.5L1001.5 224.6L1003 225.5L1004.5 224.2L1006 225.8L1007.5 226.1L1009 225.7L1010.5 224.6L1012 225.6L1013.5 226.1L1015 224.3L1016.5 225L1018 225.5L1019.5 225.3L1021 225.2L1022.5 224.6L1024 225.4L1025.5 225.9L1027 224.7L1028.5 225.1L1030 224.4L1031.5 223.4L1033 223.3L1034.5 222.8L1036 224.4L1037.5 225.2L1039 223.6L1040.5 224L1042 223.6L1043.5 222.8L1045 222.8L1046.2 217.7L1048.8 225.6L1050.6 220.4L1052.5 216.2L1054.4 225L1056.2 232.5L1058.1 230.1L1060 227.1L1061.5 227.9L1063 226.8L1064.5 226.5L1066 227L1067.5 226.6L1069 227.2L1070.5 226.7L1072 227.6L1073.5 228.2L1075 228.6L1076.5 229.2L1078 228.4L1079.5 228L1081 228.7L1082.5 228.9L1084 228.5L1085.5 227.9L1087 227.4L1088.5 226.8L1090 228.2L1091.5 226.7L1093 227.2L1094.5 226.7L1096 227.2L1097.5 226.7L1099.1 227.7L1100.6 226.5L1102.2 227.1L1103.8 227.9L1105.3 227.9L1106.9 228.7L1108.4 229L1110 229.9L1111.5 228.5L1113 228.9L1114.5 229L1116 228.5L1117.5 228.5L1119 229.2L1120.5 229.2L1122 228.7L1123.5 228.7L1125 227.9L1126.5 227.3L1128 226.6L1129.5 227L1131 228L1132.5 229.2L1134 229.6L1135.5 229.1L1137 230L1138.5 229.2L1140 229.8L1141.9 220.3L1143.8 212L1145.3 212.7L1146.8 211.5L1148.3 210.5L1149.8 211.2L1151.3 211.3L1152.9 210.9L1154.4 209.9L1155.9 210.4L1157.4 210.7L1158.9 210.8L1160.4 211.9L1162 211.7L1163.5 212L1165 212.6L1167.5 221.2L1169 220.1L1170.5 220L1172 219.5L1173.5 219.1L1175 218.6L1176.7 218.7L1178.3 219.7L1180 220.5L1180 221.3L1182.5 217.5L1184.1 217.4L1185.7 217.1L1187.3 216.9L1188.9 216.2L1190.5 215.1L1192 214.3L1193.6 214.9L1195.2 215.4L1196.8 214.8L1198.4 213.4L1200 214.3L1201.9 211.1L1203.8 208L1205.3 208.3L1206.9 210.4L1208.4 212.7L1210 213.7L1211.7 213.7L1213.3 214.6L1215 213.6L1216.7 214.5L1218.3 216.1L1220 216.4L1221.7 215.6L1223.3 216L1225 216L1226.7 215L1228.3 214.6L1230 216L1231.6 215.7L1233.1 215.4L1234.7 217.5L1236.2 217.9L1237.8 218.1L1239.4 218.8L1240.9 220L1242.5 219.4L1244.1 220L1245.6 220.3L1247.2 220.5L1248.8 219.3L1250.3 219.4L1251.9 218.5L1253.4 218.8L1255 217.9L1256.5 218.7L1258 219.1L1259.5 217.8L1261 216.7L1262.5 217.8L1264.1 218.2L1265.6 218.9L1267.2 217.4L1268.8 219L1270.3 219.2L1271.9 218.7L1273.4 218.9L1275 220L1276.6 220.7L1278.2 219.7L1279.8 220.5L1281.4 219.9L1283 221.7L1284.5 221.4L1286.1 222.5L1287.7 222.7L1289.3 222.7L1290.9 222L1292.5 222.5L1294 222.6L1295.5 223.2L1297 225.4L1298.5 226.1L1300 227.9L1301.5 225.6L1303 224.8L1304.5 223.7L1306 221.3L1307.5 219L1309 219.5L1310.5 220.2L1312 219.6L1313.5 219.7L1315 219.6L1316.7 222.2L1318.3 224.8L1320 225.1L1321.7 224.2L1323.3 225.4L1325 226.2L1326.7 226.9L1328.3 226.4L1330 225.5L1331.7 224.5L1333.3 221.3L1335 220.2L1336.7 218.9L1338.3 218.9L1340 219.1L1341.7 218.7L1343.3 218L1345 217.7L1346.9 213.4L1348.8 207.5L1350.3 209.1L1351.9 209.6L1353.4 211.9L1355 212.7L1356.7 213.2L1358.3 214.3L1360 215L1361.7 213.1L1363.3 214.2L1365 214.9L1366.5 212.1L1368 210L1369.5 208.6L1371 207.8L1372.5 205.2L1375 204L1376.5 204.1L1378.1 202.6L1379.6 203.8L1381.1 202.2L1382.6 201.8L1384.2 202.9L1385.7 201.9L1387.2 202.2L1388.8 201.7L1391.2 216.8L1392.9 223.9L1394.6 230.4L1396.2 234.4L1397.9 233.5L1399.5 234.9L1401.1 233.5L1402.7 233.3L1404.3 232.7L1405.9 232.3L1407.5 231.9L1409 233.2L1410.5 234L1412 234.1L1413.5 234.6L1415 234.3L1416.5 233.4L1418 233.6L1419.5 234.5L1421 234L1422.5 232.8L1424.2 230.8L1425.8 231.5L1427.5 230.5L1429.2 228.8L1430.8 228.2L1432.5 227.2L1434.2 226.9L1435.8 225.5L1437.5 225.4L1439 224.7L1440.5 223.3L1442 223.7L1443.5 222.3L1445 221.7L1446.7 222.9L1448.3 224.1L1450 225.1L1451.7 226.1L1453.3 225.9L1455 228.1L1456.6 225.9L1458.1 226.4L1459.7 226.1L1461.2 225.5L1462.8 223L1464.4 221.5L1465.9 222.2L1467.5 221.3L1469.1 220.3L1470.6 221L1472.2 218.7L1473.8 218.5L1475.3 217.9L1476.9 216.5L1478.4 216.2L1480 216.4L1481.5 217.3L1483.1 215.6L1484.6 216L1486.2 215.1L1487.7 216.5L1489.2 215.4L1490.8 214.7L1492.3 215.3L1493.8 216.4L1495.4 215.9L1496.9 215.2L1498.5 216.5L1500 217.1L1501.6 217.6L1503.1 216.5L1504.7 216.3L1506.2 215.9L1507.8 216.5L1509.4 216.2L1510.9 216.2L1512.5 217.3L1514.1 218.2L1515.6 217.8L1517.2 216.5L1518.8 217.3L1520.3 217.2L1521.9 218.5L1523.4 218.5L1525 217.5" stroke="#3f7be0" stroke-width="2.0999999999999996"/><path d="M318 219.9L319.8 220.3L321.5 218.7L323.2 218L325 219.2L326.6 219.9L328.1 220.2L329.7 219.8L331.2 220.4L332.8 220.8L334.4 221.2L335.9 220.6L337.5 221.1L339 221.2L340.5 221.9L342 222.9L343.5 223.2L345 222.7L346.5 222.3L348 221.8L349.5 221.1L351 220.9L352.5 221.7L354 221.8L355.5 222L357 223.2L358.5 223.1L360 223.1L361.5 222.5L363 221.9L364.5 222.3L366 222.1L367.5 222.8L369 224.2L370.5 224.2L372 223.3L373.5 224.3L375 224.6L376.5 224.7L378 225.1L379.5 225.1L381 225.1L382.5 224.4L384 225.3L385.5 225.7L387 224.4L388.5 225L390 225.3L391.5 224.9L393 225L394.5 224.9L396 225.8L397.5 225.5L399 226L400.5 225.3L402 226.1L403.5 226.6L405 225.9L406.6 226.5L408.1 227.7L409.7 228.3L411.2 228.4L412.8 228.2L414.4 228.7L415.9 230L417.5 229.9L419.1 230.7L420.6 229.5L422.2 230.1L423.8 228.9L425.3 229.5L426.9 229.1L428.4 228.2L430 227.7L431.5 227.9L433.1 227.9L434.6 227.4L436.2 227L437.7 227.4L439.2 228.5L440.8 228.3L442.3 227.2L443.8 228.2L445.4 228.5L446.9 229L448.5 227.8L450 228.4L451.9 226.1L453.8 225.5L455.6 227.5L457.5 229.8L460 220.4L461.5 219.4L463 219.7L464.5 220.5L466 219.6L467.5 219.1L469 220.1L470.5 219.7L472 220.1L473.5 218.8L475 218.9L476.6 218.5L478.1 219.4L479.7 218.5L481.2 219.9L482.8 218.6L484.4 219.4L485.9 218.4L487.5 218.4L489.1 219.4L490.6 218.6L492.2 218.3L493.8 219.1L495.3 218.9L496.9 218.1L498.4 219.5L500 218.5L501.6 217.6L503.1 217.6L504.7 217.9L506.2 218.2L507.8 216.9L509.4 216.5L510.9 215.6L512.5 215.9L514.1 216.4L515.6 216.5L517.2 216.6L518.8 216.2L520.3 216.1L521.9 215.6L523.4 214.7L525 213.6L526.6 214.1L528.1 213.5L529.7 212.8L531.2 213.1L532.8 214L534.4 212.9L535.9 213.3L537.5 213L539.1 213.1L540.6 212.3L542.2 213.5L543.8 212.7L545.3 212.9L546.9 212.6L548.4 211.6L550 212.2L551.5 220.4L553 228.7L554.6 228.2L556.1 228.1L557.7 227.7L559.3 228.5L560.9 228.4L562.4 229.2L564 229.3L565.6 229.3L567.1 227.6L568.7 227.1L570.3 226.3L571.9 226.5L573.4 226.5L575 226.7L576.6 226.5L578.1 225.4L579.7 225.1L581.2 225.1L582.8 223.9L584.4 223.3L585.9 223.7L587.5 223.1L589.1 224L590.6 223.3L592.2 222.6L593.8 222.3L595.3 222.1L596.9 221.9L598.4 222.3L600 222.2L601.5 221.6L603 221.7L604.5 220.6L606 221.3L607.5 221.4L609 220.8L610.5 219.7L612 219.1L613.5 218.7L615 217.2L616.6 217.5L618.2 217.8L619.8 217.3L621.4 216.9L623 218.1L624.5 217.8L626.1 217.9L627.7 218.8L629.3 218.6L630.9 217.8L632.5 218.9L634.1 218.3L635.7 217.4L637.3 218.4L638.9 217.7L640.5 217.9L642 219.2L643.6 219.4L645.2 218.4L646.8 218.8L648.4 219L650 219.3L651.6 219L653.1 219.7L654.7 219.1L656.2 219.3L657.8 219.7L659.4 221L660.9 220L662.5 221L664.1 220.4L665.6 221L667.2 221L668.8 221.2L670.3 221.9L671.9 221.7L673.4 221.1L675 220.9L676.6 220.8L678.1 222.4L679.7 222.8L681.2 223.7L682.8 223.6L684.4 222.4L685.9 223.2L687.5 223.8L689.1 224.1L690.6 223.9L692.2 223.6L693.8 223.7L695.3 224.6L696.9 224L698.4 224.3L700 224.4L701.5 225.4L703 225.5L704.5 225.9L706.1 225.9L707.6 224.8L709.1 224.2L710.6 224.5L712.1 224.1L713.6 224.3L715.1 224.9L716.6 225.7L718.2 225.4L719.7 225.7L721.2 224.5L722.7 224.4L724.2 225.7L725.7 224.6L727.2 224.7L728.8 224L728 226.2L730.5 202.7L732 203.8L733.5 203.7L735 202.8L736.5 202.8L738 202.9L739.5 203.9L741 204.5L742.5 204.4L744 204.6L745.5 204.1L747 204.8L748.5 206L750 206.4L751.6 205.2L753.1 205.5L754.7 206.1L756.2 205.6L757.8 206.6L759.4 206.3L760.9 206.7L762.5 206.3L764.1 207.3L765.6 207.4L767.2 207.1L768.8 206.2L770.3 206.4L771.9 205.7L773.4 206.6L775 207.6L776.5 206.2L778 206.1L779.5 205.7L781 205.2L782.5 205.3L784 205L785.5 203.9L787 202.3L788.5 202.1L790 200.1L791.7 198.9L793.3 197.2L795 195.8L796.7 194.4L798.3 191.6L800 190.2L801.6 190.2L803.1 190.9L804.7 192L806.2 192L809 224.9L810.5 224.8L812 225L813.5 225.2L815 224.6L816.5 224.5L818 222.6L819.5 223.4L821 223.1L822.5 222.5L824 222.6L825.5 222.4L827 220.5L828.5 220.9L830 220.8L831.5 219.7L833 220.3L834.5 220.3L836 219.5L837.5 220.3L839 219.4L840.5 219.9L842 219.7L843.5 219.3L845 219.7L846.5 219.7L848 219.2L849.5 220.4L851 219.2L852.5 218.5L854 219.1L855.5 220.1L857 220.2L858.5 220.4L860 220L861.5 220.1L863 219.5L864.5 219.1L866 219.4L867.5 218.5L869 218.3L870.5 219.5L872 218.9L873.5 219.7L875 220.1L876.5 219.8L878 220.3L879.5 220.8L881.1 221.3L882.6 220.2L884.1 219.8L885.6 220.2L887.1 220.6L888.6 220.6L890.2 220.1L891.7 221.1L893.2 222.4L894.7 221.9L896.2 222.1L897.7 222L899.2 222.2L900.8 223.2L902.3 222.7L903.8 223.2L905.3 223.2L906.8 223.4L908.3 224.4L909.8 223.2L911.4 224.3L912.9 223.9L914.4 224.4L915.9 225.1L917.4 225.2L918.9 224.8L920.5 225.7L922 224.6L923.5 225.4L925 225.3L926.5 227.4L928 230L929.5 232.1L931 233.8L932.5 234.9L934 233.2L935.5 232.2L937 230.6L938.5 229.3L940 229.3L941.5 228.2L943 229L944.5 228.4L946 228.1L947.5 227.9L949 227.2L950.5 227.6L952 227.2L953.5 227.5L955 227.3L956.5 228.3L958 228.8L959.5 228.1L961 228.1L962.5 228.6L964 227.6L965.5 226.6L967 226.4L968.5 226.2L970 227L971.5 226.8L973 226.5L974.5 227.3L976 226.5L977.5 227.2L979 227.1L980.5 226.6L982 227.1L983.5 226.4L985 227.1L986.5 227.4L988 226.7L989.5 226.7L991 227.2L992.5 226.9L994 226.8L995.5 226.9L997 227L998.5 226.7L1000 227L1001.5 225.7L1003 225.8L1004.5 225.9L1006.1 225.3L1007.6 225.1L1009.1 224.6L1010.6 225.9L1012.1 225.2L1013.6 225.2L1015.2 225.9L1016.7 224.9L1018.2 225.9L1019.7 224.7L1021.2 224L1022.7 224.3L1024.2 224.4L1025.8 225.5L1027.3 226L1028.8 225.9L1030.3 225.2L1031.8 225.1L1033.3 224.4L1034.8 225.3L1036.4 224.8L1037.9 224.3L1039.4 224.8L1040.9 224L1042.4 224L1043.9 225.2L1045.5 224L1047 223.6L1048.5 223.5L1050 223.5L1051.6 224.1L1053.1 224.1L1054.7 224.3L1056.2 224.3L1057.8 224.4L1059.4 225.3L1060.9 225.2L1062.5 225.3L1064.1 226.2L1065.6 225.3L1067.2 225.2L1068.8 226.6L1070.3 226.5L1071.9 227.2L1073.4 226.4L1075 226.8L1076.5 227.8L1078 227.3L1079.6 228L1081.1 228.1L1082.6 227.8L1084.1 228.9L1085.7 228.3L1087.2 228.3L1088.7 228.6L1090.2 228.3L1091.7 229.2L1093.3 229.3L1094.8 229.4L1096.3 229.4L1097.8 230.4L1099.3 230.9L1100.9 230.9L1102.4 230.2L1103.9 229.9L1105.4 230.1L1107 229.3L1108.5 229.2L1110 231L1111.5 229.8L1113 230.9L1114.5 230.8L1116 231.1L1117.5 229.5L1119 229.2L1120.5 230L1122 228.7L1123.5 228.2L1125 228.4L1126.5 228.1L1128 227.8L1129.5 228.7L1131 227.9L1132.5 229.2L1134 229L1135.5 227.7L1137 228.7L1138.5 227.8L1140 227.8L1141.9 220.3L1143.8 211.8L1145.5 210.9L1147 210.2L1148.6 210.2L1150.1 211.6L1151.7 212L1153.2 211.7L1154.7 211.8L1156.3 212.2L1157.8 211L1159.3 211.1L1160.9 210.5L1162.4 210.1L1164 210L1165.5 210.1L1167.5 216.6L1169.2 218.3L1170.8 220.2L1172.5 222.4L1174.2 224.7L1175.8 226.6L1177.5 227.9L1179 227.2L1180.5 227.5L1182 226L1183.5 225.1L1185 225.9L1186.5 225.8L1188 224.7L1189.5 224.4L1191 224L1192.5 223.9L1194 223.7L1195.5 223.5L1197 224L1198.5 224.1L1200 223" stroke="#3f7be0" stroke-width="2.0999999999999996"/><path d="M1380 207L1381.9 213.6L1383.8 219.7L1385.3 221.4L1386.9 223L1388.4 223.5L1390 224.3L1391.5 227.4L1393 228.7L1394.5 230.3L1396 233.3L1397.5 234.7L1399.2 235.3L1401 235L1402.8 235.2L1404.5 234.4L1406.2 235L1408 235.6L1409.8 235.1L1411.5 235.3L1413.2 235.2L1415 234L1416.6 233.9L1418.2 233.1L1419.8 231.8L1421.4 230.3L1423 230.6L1424.5 229.6L1426.1 229.2L1427.7 228.8L1429.3 227.9L1430.9 227.4L1432.5 225.8L1434.1 226.5L1435.6 226.5L1437.2 227.5L1438.8 227" stroke="#3f7be0" stroke-width="2.0999999999999996"/><path d="M318 222.1L319.8 221.3L321.5 221.1L323.2 220.4L325 219.7L326.5 220.2L328 221.3L329.5 221.7L331 221.8L332.5 221.1L334.2 221.5L335.8 221.5L337.5 221.5L339.2 221.5L340.8 221.9L342.5 223.3L344.1 227.1L345.8 230.8L347.2 227.1L348.8 222.4L350.5 222.3L352.2 222.7L354 223.2L355.8 223.6L357.5 223.9L359.1 222.9L360.7 223.3L362.3 223.7L363.9 223.7L365.5 223.2L367 223.6L368.6 223.2L370.2 224.4L371.8 224.9L373.4 224.8L375 224.4L376.7 225.7L378.3 226L380 227L381.7 227.7L383.3 227.8L385 228.1L386.5 227.8L388 227.3L389.5 226.4L391 226.1L392.5 226.5L394 225.8L395.5 225.6L397 226.5L398.5 226.4L400 226.9L401.7 227.1L403.3 227L405 228.1L406.7 227.5L408.3 227.6L410 227.4L411.7 227.8L413.3 227.3L415 227.1L416.8 220.2L418.8 229.8L420.4 230L422 230.6L423.6 229.7L425.2 229.2L426.8 229.2L428.4 230.1L430 230.2L431.7 229.4L433.3 228.9L435 228.3L436.7 228.3L438.3 227.5L440 227.9L441.7 228.4L443.3 228.6L445 228.3L446.7 228.4L448.3 226.9L450 226.6L451.5 223.8L453 220.2L454.6 219.7L456.2 220.4L457.8 220.3L459.3 220.6L460.9 219.9L462.5 219.5L464.1 219.7L465.6 219.3L467.2 219.5L468.8 220.5L470.3 220L471.9 219.2L473.4 219L475 219L476.6 219.9L478.1 219.5L479.7 219.2L481.2 218.7L482.8 219.8L484.4 219.3L485.9 218.7L487.5 218.1L489.1 218L490.6 218.1L492.2 219L493.8 218.6L495.3 218.3L496.9 218.9L498.4 218.8L500 220L501.7 219.5L503.3 220.1L505 220.9L506.5 220.3L508.1 220.9L509.6 220.2L511.2 219.5L512.7 219.3L514.2 218.5L515.8 218.7L517.3 218.4L518.8 219.1L520.4 219.2L521.9 218.7L523.5 217.6L525 217.4L526.6 217.2L528.1 217L529.7 216.9L531.2 217.7L532.8 216.9L534.4 216.4L535.9 217.4L537.5 217.2L539.1 217.7L540.6 216.9L542.2 217.2L543.8 216.8L545.3 216.8L546.9 216.6L548.4 216L550 215L551.9 217.1L553.8 220.3L555.4 223.7L557.1 226.8L558.8 228.9L560.4 229L562 229.1L563.6 228.9L565.2 229L566.9 228.5L568.5 228.4L570.1 228.3L571.8 227.6L573.4 228.2L575 228.5L576.6 227L578.1 227.6L579.7 227.7L581.2 227.2L582.8 225.9L584.4 226.4L585.9 225.4L587.5 226.1L589.1 225.6L590.6 224.3L592.2 223.7L593.8 223.9L595.3 223.7L596.9 223.7L598.4 223.7L600 222.4L601.9 220.5L603.8 220.3L606.2 212.4L608.1 217.1L610 220L611.5 220.6L613 220.7L614.5 220.7L616 220.2L617.5 220.3L619 219.6L620.5 220.1L622 219.9L623.5 220.8L625 221.2L626.6 220.8L628.1 220.8L629.7 220.1L631.2 219.9L632.8 220.7L634.4 220.9L635.9 221.6L637.5 221.6L639.1 220.9L640.6 220.9L642.2 221.5L643.8 221.4L645.3 220.6L646.9 221.5L648.4 221.8L650 220.9L651.7 221.4L653.3 221.4L655 222.2L656.7 221.9L658.3 221.8L660 222.3L661.5 222.9L663 221.7L664.5 221L666 221.3L667.5 221.8L669.5 214L671 218.8L672.5 224.3L674 224.7L675.5 223.9L677 224.9L678.5 224.5L680 224.6L681.5 225.4L683.1 225.3L684.6 225.8L686.2 225.2L687.7 226L689.2 225.4L690.8 225.1L692.3 225.6L693.8 225.6L695.4 226L696.9 226.8L698.5 227L700 226L701.6 226.2L703.1 226.7L704.7 227L706.2 227.5L707.8 227.5L709.4 227L710.9 227.1L712.5 228.2L714.1 227.9L715.6 228.5L717.2 229.1L718.8 228.9L720.3 228.9L721.9 228.8L723.4 228.3L725 229.1L726.9 228.2L728.8 228.2L730 208.8" stroke="#30dc30"/><path d="M730 208.8L732.5 208.1L734.1 208.4L735.7 208.4L737.3 208.2L738.9 207.7L740.5 208.6L742 208.5L743.6 209L745.2 208.5L746.8 208.3L748.4 208.4L750 209.6L751.5 209.1L753 210L754.5 209.6L756 209.8L757.5 209.6L759 209.9L760.5 209.3L762 209.5L763.5 210.4L765 209.7L766.7 209.8L768.3 209.1L770 208.6L771.7 207.8L773.3 207.2L775 208.2L776.5 209.3L778 210.1L779.5 210.8" stroke="#f0c890"/><path d="M779.5 210.8L780.5 214.1L782 214.9L783.5 216.9L785 218.8L787.5 229.6L789 229.9L790.5 229.6L792 229.7L793.5 228.2L795 228.2L796.7 223.9L798.3 219.5L800 214.9L801.7 215.2L803.3 214.5L805 215.2L807.5 225.7L809.2 225.6L810.8 225.9L812.5 225.6L814.2 224.8L815.8 224.2L817.5 224L819 223.6L820.5 223.5L822 222.8L823.5 221.2L825 220L826.7 219.2L828.3 217.4L830 216.1L831.7 216.7L833.3 217.9L835 219.7L836.5 220.2L838 220.2L839.5 219.9L841 220.7L842.5 220.5L844 219.7L845.5 219.2L847 220.4L848.5 220.9L850 221.1L851.6 220.7L853.1 220.1L854.7 219.5L856.2 219.5L857.8 219.4L859.4 220.5L860.9 221L862.5 221L864.1 220.1L865.6 219.8L867.2 219.8L868.8 220.8L870.3 220.1L871.9 220.7L873.4 220.9L875 220.8L876.5 225.8L878 229.5L879.6 225.4L881.2 220.7L882.8 220.5L884.4 220.4L885.9 220.8L887.5 220.7L889.1 220.7L890.6 222.1L892.2 221.8L893.8 222.6L895.3 222.7L896.9 222.9L898.4 222.9L900 223.4L901.6 223.7L903.1 223.7L904.7 223.5L906.2 223.7L907.8 224L909.4 224L910.9 224L912.5 223.5L914.1 224.5L915.6 224.5L917.2 224L918.8 224L920.3 225.2L921.9 224.8L923.4 225L925 225.6L926.5 226.1L928 225.5L929.5 225.3L931 225.3L932.5 224.7L934.4 228.6L936.2 230.6L937.8 231.6L939.3 230.7L940.8 230.3L942.4 231.1L943.9 231.4L945.4 230.6L946.9 230.7L948.5 230.6L950 230.8L951.6 230.1L953.1 230.6L954.7 231.1L956.2 230.8L957.8 230.9L959.4 231L960.9 230L962.5 230.3L964.1 230.3L965.6 229.9L967.2 228.9L968.8 229.2L970.3 229.7L971.9 229L973.4 229.1L975 229.5L976.6 229.1L978.1 227.9L979.7 228.3L981.2 227.7L982.8 228.3L984.4 228.2L985.9 227.5L987.5 228.1L989.1 227.8L990.6 227.1L992.2 227.5L993.8 227.7L995.3 227.7L996.9 227.6L998.4 227.1L1000 226.9L1001.5 226.6L1003 226.3L1004.5 226.9L1006 226.1L1007.5 225.3L1009 225.9L1010.5 225.8L1012 225.7L1013.5 225.8L1015 225.2L1016.2 217.4L1018.8 224.6L1020.3 225.5L1021.9 226.1L1023.4 226.1L1025 225.2L1026.6 226.1L1028.1 226.3L1029.7 225.9L1031.2 224.9L1032.8 225.8L1034.4 225.8L1035.9 225.8L1037.5 224.9L1039.1 225.6L1040.6 224.8L1042.2 225.2L1043.8 224.8L1045.3 225L1046.9 225.9L1048.4 226L1050 226.2L1051.7 224.5L1053.3 223.3L1055 222.6L1056.7 223.5L1058.3 225.4L1060 228L1061.6 227.9L1063.1 227.8L1064.7 226.8L1066.2 226.8L1067.8 226.8L1069.4 226.6L1070.9 225.9L1072.5 225.1L1075 221.6L1076.7 222.7L1078.3 223.2L1080 222.5L1081.7 224.4L1083.3 225.5L1085 227.2L1086.5 227.7L1088 227.2L1089.5 227.5L1091 227.1L1092.5 227.4L1094 226.8L1095.5 227L1097 227.2L1098.5 228.2L1100 227.6L1101.7 228.9L1103.3 228.8L1105 230.5L1106.7 230.4L1108.3 230.6L1110 231.2L1111.5 232.3L1113 232.4L1114.5 232.8L1116 232.4L1117.5 231.6L1119 231.6L1120.5 231.7L1122 232.6L1123.5 231.8L1125 231.5L1126.5 232.3L1128 231.5L1129.5 232.5L1131 231.9L1132.5 232.1L1134 232.3L1135.5 232.8L1137 231.7L1138.5 232.4L1140 231.7L1141.9 222.4L1143.8 211.9" stroke="#30dc30"/><path d="M1143.8 211.9L1145.6 209.9L1147.5 206.6L1150 204.9L1151.5 204.5L1153.1 204.8L1154.7 204.9L1156.2 206L1157.8 205.9L1159.3 205.5L1160.8 206.2L1162.4 205.3L1164 205L1165.5 206L1167 214.7" stroke="#f0c890"/><path d="M1167 214.7L1168 221.9L1169.8 222.3L1171.5 221L1173.2 221.8L1175 221.8L1176.6 221.4L1178.1 221.4L1179.7 220L1181.2 219.4L1182.8 218.9L1184.4 219L1185.9 219L1187.5 218.8L1189.1 218.2L1190.6 218.4L1192.2 218.5L1193.8 218.2L1195.3 216.8L1196.9 216.2L1198.4 215.8L1200 215.5L1201.5 215.3L1203 214.2L1204.5 213.9L1206 213L1207.5 212.2L1209 214.1L1210.5 216.1L1212 216.6L1213.5 217.8L1215 220.1L1216.5 218.7L1218 217.4L1219.5 216.7L1221 217L1222.5 216.7L1224 217.4L1225.5 217.1L1227 216.5L1228.5 216.7L1230 217.6L1231.7 217.8L1233.3 217.7L1235 218.3L1236.7 218.9L1238.3 219.2L1240 219.8L1241.7 219.3L1243.3 219L1245 220L1246.7 220.3L1248.3 220L1250 219.4L1251.6 219.2L1253.1 219.3L1254.7 219.8L1256.2 219.2L1257.8 219.6L1259.4 218.9L1260.9 217.9L1262.5 218L1264 218.8L1265.5 219.5L1267 220.4L1268.5 220.1L1270 220.9L1271.7 221.4L1273.3 220.4L1275 219.7L1276.7 219.5L1278.3 219.5L1280 219.6L1281.5 219.5L1283 220L1284.5 219.5L1286 219.5L1287.5 220.1L1289 220.1L1290.5 220.7L1292 221L1293.5 220.1L1295 219.8L1296.7 221.2L1298.3 222.5L1300 223.6L1301.5 224.5L1303 224L1304.5 224.3L1306 224.1L1307.5 225.3L1309 225.8L1310.5 226.9L1312 226.3L1313.5 227.3L1315 227.8L1316.7 226.8L1318.3 227.6L1320 227.9L1321.7 226.8L1323.3 227.6L1325 227.7L1326.7 227.2L1328.3 226.8L1330 226L1331.9 221.7L1333.8 218.4L1335.3 219.4L1336.9 219.1L1338.4 219.5L1340 219.6L1341.6 219L1343.1 218.5L1344.7 217.6L1346.2 215.6L1347.8 215.6L1349.4 215.1L1350.9 215.7L1352.5 216.7L1354.2 217.4L1355.8 216.7L1357.5 217.2L1359.2 217.2L1360.8 217.9L1362.5 219.2L1364 217.6L1365.5 217.2L1367 216.7L1368.5 215.7L1370 213.7L1371.7 212.7L1373.3 211.3" stroke="#30dc30"/><path d="M1373.3 211.3L1375 209.9L1376.6 208.4L1378.1 207.6L1379.7 207.6L1381.2 207.8L1382.8 207.7L1384.4 207.1L1385.9 207.5L1387.5 207.7L1390 212.8" stroke="#f0c890"/><path d="M1390 212.8L1391.7 216.4L1393.3 220.1L1395 224.1L1396.7 224.9L1398.3 226.8L1400 228L1402.5 222.8L1404.2 225.7L1405.8 227.3L1407.5 229.1L1409 228.7L1410.5 228.8L1412 228L1413.5 228.2L1415 227.3L1416.5 229.3L1418 229.4L1419.5 231L1421 231.8L1422.5 232.5L1424.1 232L1425.6 231.8L1427.2 232.3L1428.8 232L1430.3 231.8L1431.9 231.2L1433.4 231.4L1435 230.8L1436.7 229.1L1438.3 227.5L1440 225.6L1442.5 223.2L1444.1 223.3L1445.6 222.8L1447.2 223.8L1448.8 223.9L1450.3 224.1L1451.9 224.5L1453.4 224L1455 223.7L1456.6 223.2L1458.1 222.9L1459.7 222.6L1461.2 222.4L1462.8 222L1464.4 222.1L1465.9 221.8L1467.5 221.6L1469 221.7L1470.5 220.9L1472 221.2L1473.5 221.1L1475 220L1476.5 219.5L1478 217.7L1479.5 216.3L1481 216.4L1482.5 214.5L1484 214.3L1485.5 215.6L1487 215L1488.5 215.9L1490 216.3L1491.7 216L1493.3 215.9L1495 217.1L1496.7 216.8L1498.3 216.5L1500 216.7L1501.6 217.1L1503.1 216.6L1504.7 216L1506.2 216.7L1507.8 216L1509.4 215.5L1510.9 215.2L1512.5 216.5L1514.4 215L1516.2 214.1L1518.1 215.6L1520 217.8L1521.7 217.1L1523.3 216.8L1525 217" stroke="#30dc30"/></g><g fill="none" stroke-width="2.3" stroke-linejoin="round"><path d="M318 301.5L319.8 300.9L321.5 300.2L323.2 299.7L325 298.5L326.5 300.1L328 299.7L329.5 301L331 303.3L332.5 304.4L334 306.6L335.5 307L337 308.8L338.5 310.2L340 312.3L341.7 309.2L343.3 304.9L345 301.5L346.7 300.8L348.3 301.3L350 300.7L352.5 307.1L354 308.9L355.5 309L357 310.5L358.5 310.8L360 311.2L362.5 322.6L364.2 323.2L365.8 324.2L367.5 326.8L369 327.5L370.5 326.8L372 327.9L373.5 327.7L375 328.1L376.7 329.7L378.3 333.2L380 335.7L381.5 337L383 337.8L384.5 337.5L386 337.8L387.5 338L389 339L390.5 339.9L392 341.5L393.5 343.5L395 343.9L396.7 345.7L398.3 346.3L400 347L401.7 348.7L403.3 349.3L405 349.7L406.7 350.6L408.3 351.8L410 351.5L411.7 353.6L413.3 353.1L415 354.7L416.5 354.9L418 353.2L419.5 353.8L421 353.1L422.5 353L424 351.6L425.5 350.9L427 350.7L428.5 351.9L430 350.8L431.5 351.8L433.1 352.8L434.6 353.4L436.2 352.7L437.7 352.5L439.2 353L440.8 353.8L442.3 353L443.8 354.1L445.4 354.8L446.9 355.5L448.5 354.3L450 355.7L451.6 354.4L453.1 354.3L454.7 354.7L456.2 355.5L457.8 354.7L459.4 355.4L460.9 354.9L462.5 354.2L464.1 353.9L465.6 353.4L467.2 352.9L468.8 352.8L470.3 353.8L471.9 354.8L473.4 353.6L475 352.7L476.5 354.4L478 354.2L479.5 354L481 353.6L482.5 354.2L484 355L485.5 354.6L487 354.5L488.5 353.7L490 355.2L491.5 354.1L493 354.6L494.5 355.6L496 354.7L497.5 355.5L499 356.3L500.5 356.2L502 356.4L503.5 355.3L505 355.4L506.5 355L508 356.3L509.5 355.8L511 355.9L512.5 357.1L514 357.3L515.5 357.6L517 356.7L518.5 356.3L520 356.6L521.5 356.2L523 355.6L524.5 355.5L526 354.9L527.5 355.1L529 356.4L530.5 356.9L532 356.4L533.5 355.9L535 355.3L536.5 354.6L538 354.6L539.5 355.5L541 356.1L542.5 355.3L544 355.8L545.5 356L547 355.9L548.5 355.7L550 355.8L551.6 354.5L553.1 354.2L554.7 352.9L556.2 352.4L557.8 352.3L559.4 351.8L560.9 350.5L562.5 350.8L564 351.4L565.5 352L567 351.5L568.5 352.8L570 353.1L571.5 353.8L573.1 353.7L574.6 354.4L576.1 354.4L577.6 354.7L579.2 354L580.7 354.2L582.2 354.5L583.8 354.9L585.3 354.1L586.8 354.7L588.3 355.1L589.9 354.9L591.4 355.4L592.9 355.6L594.4 354.8L596 354.5L597.5 353.6L599 354.6L600.6 355.2L602.1 354.6L603.6 354.8L605.1 354.9L606.7 355L608.2 354L609.7 354.7L611.2 354.7L612.8 354.8L614.3 354.4L615.8 354.6L617.4 355.1L618.9 355L620.4 355.1L621.9 353.8L623.5 353.5L625 354L626.5 354.5L628 353.9L629.5 354.6L631 354.8L632.5 353.7L634 354L635.5 353.7L637 353.2L638.5 353.1L640 353.4L641.5 353.3L643 353.2L644.5 352.9L646 353.6L647.5 353.7L649 354.2L650.5 354.4L652 353.8L653.5 354.8L655 353.5L656.5 353.7L658 353.5L659.5 353.7L661 353.2L662.5 354.3L664 354L665.5 353.1L667 353.9L668.5 353.2L670 353.7L671.5 353.6L673 354L674.5 354.9L676 355L677.5 354.3L679 354.7L680.5 354.6L682 354L683.5 353.2L685 353.8L686.5 354L688 354.8L689.5 355.2L691 354.7L692.5 353.9L694 354.6L695.5 353.2L697 352.7L698.5 353.4L700 353.8L700 353.1L701.5 353.8L703 354.8L704.5 354.2L706 354.2L707.5 353.8L709 353.8L710.5 355.3L712 354.8L713.5 355.8L715 356.2L716.5 355.9L718 355.1L719.5 356.3L721 355.9L722.5 355.6L724 355.4L725.5 356.7L727 356.3L728.5 355.9L730 356.1L731.5 355.6L733 356.4L734.5 356.5L736 356.3L737.5 357.2L739 357.8L740.5 356.5L742 357L743.5 356.8L745 358.1L746.6 358.8L748.2 358.3L749.8 358.3L751.4 358.4L753 360.3L754.5 360.1L756.1 360.8L757.7 361.2L759.3 361.9L760.9 362.4L762.5 363.1L764.1 362L765.6 362.8L767.2 362.2L768.8 362.5L770.3 362.2L771.9 361.9L773.4 362.3L775 362.3L776.6 363.1L778.1 364.7L779.7 365.6L781.2 365.5L782.8 363.9L784.4 362.7L785.9 362.2L787.5 361L789 358.6L790.5 355.3L792 354.2L793.5 352L795 350.1L796.7 343L798.3 335.5L800 327.7L802.5 340.9L804 340.2L805.5 339.9L807 340.6L808.5 339.7L810 339.5L811.5 338.4L813 335.3L814.5 334.4L816 332.5L817.5 330.1L819 328.6L820.5 328.4L822 328L823.5 325.7L825 324.8L826.9 310L828.8 295L830.3 300.9L831.9 306.7L833.4 313.5L835 320.5L837.5 304.4L839.1 305.3L840.6 307.5L842.2 309L843.8 310L845.3 309.8L846.9 311.7L848.4 313.7L850 315.2L851.7 313.8L853.3 311.2L855 311.1L856.7 309.2L858.3 308.7L860 308.5L861.7 308.8L863.3 308L865 308.2L866.7 309.7L868.3 309.1L870 310L872.5 316.1L874 316.3L875.5 317.7L877 317.6L878.5 318L880 319.2L881.5 319.6L883 320.1L884.5 321.8L886 323.3L887.5 324.6L889.2 323.8L890.8 324.3L892.5 324.5L894 327.2L895.5 329.5L897 332.6L898.5 334.1L900 335.4L901.6 337.5L903.1 338.1L904.7 340L906.2 341.2L907.8 343.3L909.4 344.2L910.9 345.5L912.5 346L914.1 347.9L915.6 349.1L917.2 351.6L918.8 353.2L920.3 352.3L921.9 352.2L923.4 352.4L925 353.2L926.6 352.4L928.1 353.2L929.7 353.4L931.2 352.4L932.8 353L934.4 352.2L935.9 351.9L937.5 352.7L939.1 352.3L940.6 353.5L942.2 353.2L943.8 352.7L945.3 353.5L946.9 352.3L948.4 353.1L950 352.2L951.5 351.9L953 353.4L954.5 353.5L956 352.7L957.5 352.1L959 353.5L960.5 353.6L962 353.9L963.5 352.7L965.1 353.1L966.6 352.8L968.1 352.4L969.6 352.4L971.1 352.9L972.6 352.7L974.1 352.6L975.6 352.1L977.1 353.3L978.6 353.4L980.1 353.8L981.6 353.2L983.1 353.8L984.6 353.4L986.1 353.4L987.6 353.3L989.1 353.6L990.6 353.1L992.1 352.2L993.6 351.7L995.2 351.8L996.7 351.6L998.2 353.1L999.7 353L1001.2 353.5L1002.7 352.2L1004.2 352.6L1005.7 353.6L1007.2 353.5L1008.7 353.1L1010.2 353L1011.7 352.2L1013.2 352L1014.7 351.9L1016.2 352.2L1017.7 352.4L1019.2 353.5L1020.7 352.5L1022.2 352.3L1023.8 352.2L1025.3 352L1026.8 352.1L1028.3 352.1L1029.8 352.6L1031.3 351.9L1032.8 353.3L1034.3 352.9L1035.8 353.8L1037.3 353.7L1038.8 353.7L1040.3 353.2L1041.8 354L1043.3 352.7L1044.8 353.2L1046.3 352.7L1047.8 353.2L1049.3 353.5L1050.8 352.6L1052.3 352.2L1053.9 351.7L1055.4 351.9L1056.9 351.7L1058.4 352.2L1059.9 353.6L1061.4 353L1062.9 352.6L1064.4 352.8L1065.9 352.5L1067.4 353.2L1068.9 353.5L1070.4 352.6L1071.9 352.3L1073.4 353L1074.9 353.9L1076.4 353.7L1077.9 353.2L1079.4 354L1080.9 352.5L1082.4 351.9L1084 353.1L1085.5 352.8L1087 352L1088.5 352.7L1090 353.8L1091.5 353.4L1093 352.9L1094.5 352.1L1096 351.8L1097.5 353.2L1100 353.1L1101.5 353.9L1103.1 352.5L1104.6 352.2L1106.2 351.7L1107.7 352.2L1109.2 351.7L1110.8 351.8L1112.3 352.2L1113.8 352.2L1115.4 351.6L1116.9 351.3L1118.5 353L1120 352.2L1121.5 352.5L1123.1 352.4L1124.6 352.6L1126.2 351.8L1127.7 351.9L1129.2 351.5L1130.8 352.2L1132.3 353.2L1133.8 353.1L1135.4 353.5L1136.9 352.4L1138.5 351.5L1140 352.1L1141.5 351.8L1143 351.6L1144.5 350.8L1146 350.6L1147.5 350.5L1149 351.1L1150.5 350.2L1152 350.1L1153.5 350.9L1155 350L1156.5 349.5L1158 349.7L1159.5 349.3L1161 350.6L1162.5 351.3L1164 350.6L1165.5 350L1167 349.6L1168.5 349.8L1170 349.6L1171.5 350.3L1173 350.9L1174.5 350.5L1176 350.1L1177.5 351.1L1179.2 346.6L1180.8 342.7L1182.5 339.1L1184.2 336.4L1185.8 333.1L1187.5 330.6L1189.2 327.7L1190.8 325.6L1192.5 322.7L1194 320.9L1195.5 318.2L1197 315.8L1198.5 313L1200 310.1L1201.7 304.8L1203.3 298.9L1205 293.7L1206.7 290.1L1208.3 286.7L1210 282.4L1211.7 286.4L1213.3 289.2L1215 291.8L1216.5 290.1L1218 288.8L1219.5 287.7L1221 287.4L1222.5 285.8L1224.2 285.4L1225.8 286.7L1227.5 287L1229.2 286.2L1230.8 286L1232.5 286.2L1234.2 289.1L1235.8 292.8L1237.5 296L1239.4 298.8L1241.2 301L1243.1 295.4L1245 289.6L1246.7 290.1L1248.3 290.1L1250 291.5L1251.7 293L1253.3 293.8L1255 293.2L1256.7 295.3L1258.3 296.4L1260 298.8L1261.5 297.4L1263 297.1L1264.5 296L1266 293.4L1267.5 292L1269 294.3L1270.5 295.2L1272 296.2L1273.5 297.4L1275 299.2L1276.5 300.6L1278 300.8L1279.5 302.2L1281 302.5L1282.5 302L1284.2 303.7L1285.8 304.2L1287.5 304.1L1289.2 307.2L1290.8 307.7L1292.5 309.8L1294.2 314.1L1295.8 319L1297.5 322.6L1299 323.5L1300.5 324.8L1302 326.1L1303.5 328.2L1305 329.6L1306.7 333.6L1308.3 336.3L1310 339.5L1311.5 340.3L1313 342.6L1314.5 344L1316 345.1L1317.5 345.7L1319.2 347.2L1320.8 348.5L1322.5 351.6L1324 351.6L1325.6 350.8L1327.1 350.8L1328.6 350.8L1330.1 352.2L1331.7 353.2L1333.2 352.4L1334.7 353.4L1336.2 353L1337.8 353.6L1339.3 354.4L1340.8 354.4L1342.4 354.8L1343.9 354.3L1345.4 353.5L1346.9 354.2L1348.5 354.8L1350 354.4L1351.6 354.3L1353.1 354.1L1354.7 353.3L1356.2 353.5L1357.8 353.6L1359.4 353.7L1360.9 354.2L1362.5 353.7L1364.1 354.5L1365.6 354.5L1367.2 354.6L1368.8 354.1L1370.3 353.7L1371.9 353.2L1373.4 353.4L1375 352.6L1376.5 352.8L1378 353.2L1379.5 353.1L1381 352.7L1382.5 352.1L1384 352L1385.5 352.5L1387 353.3L1388.5 354L1390 354.4L1391.5 353.8L1393 354.8L1394.5 354L1396 354.6L1397.5 353.7L1399 354.7L1400.5 355.1L1402 355.8L1403.5 356.2L1405 355.9L1406.5 356.1L1408 356L1409.5 355.6L1411 354.7L1412.5 354.9L1414 355.7L1415.5 354.8L1417 355.8L1418.5 355.4L1420 354.9L1421.5 353.9L1423 354.3L1424.5 354L1426 354.8L1427.5 355.6L1429 356L1430.5 355.6L1432 355L1433.5 354.2L1435 354.9L1436.5 355L1438 355.3L1439.5 354.8L1441 355.6L1442.5 354.6L1444 354.3L1445.5 354.2L1447 354.8L1448.5 355.6L1450 354.5L1451.5 354.9L1453 355.4L1454.5 354.5L1456 353.8L1457.5 354.5L1459 355.3L1460.5 355.7L1462 355.7L1463.5 355L1465 354.7L1466.5 354.8L1468 355.6L1469.5 354.7L1471 354.3L1472.5 354.7L1474 355.6L1475.5 354.5L1477 353.7L1478.5 353.5L1480 354.3L1481.5 354.7L1483 354.1L1484.5 353.8L1486 354.4L1487.5 354.8L1489 355.1L1490.5 355.3L1492 354.1L1493.5 354.3L1495 355.2L1496.5 355.8L1498 354.8L1499.5 355.4L1501 355.2L1502.5 355.7L1504 354.6L1505.5 355L1507 355.4L1508.5 354.9L1510 353.9L1511.5 353.7L1513 353.5L1514.5 353.3L1516 353.3L1517.5 354.2L1519 353.6L1520.5 354.6L1522 355L1523.5 355.4L1525 354.5" stroke="#3f7be0" stroke-width="2.0999999999999996"/><path d="M318 300.5L319.6 300.8L321.2 300.3L322.8 299.7L324.3 299L325.9 299.8L327.5 299.9L329 301.9L330.5 303L332 305L333.5 305.8L335 307.9L336.6 310L338.1 311.4L339.7 313.2L341.2 315.4L343 313.6L344.8 312.9L346.5 312.5L348.2 310.8L350 310.5L351.8 311.3L353.5 312.3L355.2 312.3L357 312.3L358.8 314L360.4 318.1L362.1 321.4L363.8 324.4L365.5 325.2L367.2 326.9L369 327.6L370.8 329.6L372.5 330.4L374.2 330.7L375.8 332.2L377.5 332.9L379.2 334.8L380.8 336.2L382.5 336.7L384.2 338L385.8 339.3L387.5 340.8L389.2 342.4L390.8 342.2L392.5 343.4L394.2 344.6L395.8 345.1L397.5 346.3L399.2 346.4L400.8 348.3L402.5 348.9L404.1 348.7L405.6 349.8L407.2 350L408.8 350.2L410.3 351.1L411.9 351.2L413.4 351.6L415 353.3L416.5 353.5L418 352.4L419.6 353.2L421.1 352.2L422.6 352.4L424.1 353.4L425.7 353.4L427.2 352.8L428.7 352.7L430.2 352.7L431.7 352.2L433.3 353.5L434.8 352.4L436.3 352.6L437.8 353.3L439.3 352.9L440.9 353.8L442.4 352.9L443.9 353.8L445.4 354.1L447 353.8L448.5 354L450 353.4L451.5 353.8L453 354L454.5 353.6L456 353.3L457.5 353.7L459 353.3L460.5 352.6L462 353.5L463.5 353.1L465 353.3L466.5 354L468 353.2L469.5 352.6L471 352.6L472.5 353.4L474 353.4L475.5 353.2L477 353.5L478.5 354.5L480 353.8L481.5 353.8L483 354.7L484.5 354.6L486 354L487.5 354.1L489 354.2L490.5 353.7L492 353.9L493.5 353.9L495 354.8L496.5 354.4L498 354.8L499.5 355.6L501 355.9L502.5 355.1L504 355.1L505.5 354.7L507 354.6L508.5 354.8L510 355.5L511.5 356L513 355.2L514.5 354.3L516 354.7L517.5 354.3L519 354L520.5 355.3L522 354.7L523.5 355.5L525 355.3L526.5 356L528 356.1L529.6 354.7L531.1 354.2L532.6 355.2L534.1 355L535.7 354.5L537.2 354.8L538.7 354.9L540.2 354.3L541.7 353.9L543.3 353L544.8 353L546.3 352.5L547.8 353L549.3 353.2L550.9 352.3L552.4 352.7L553.9 351.9L555.4 351.4L557 352.1L558.5 352L560 352.6L561.5 352.5L563 352.6L564.5 351.6L566 352.4L567.5 351.5L569 352L570.5 352.7L572 353.1L573.5 353.2L575.1 352.5L576.6 352.6L578.1 352.8L579.6 351.8L581.1 352.7L582.6 353.1L584.1 352.4L585.6 352.7L587.1 352.3L588.6 351.8L590.1 352.3L591.6 351.5L593.1 352.3L594.6 353.1L596.1 352.2L597.6 352.9L599.1 351.8L600.6 352.6L602.2 352L603.7 352.9L605.2 352.4L606.7 353L608.2 351.7L609.7 351.2L611.2 352.3L612.7 352.5L614.2 352.4L615.7 351.5L617.2 351.3L618.7 351.6L620.2 351.1L621.7 352.6L623.2 352.9L624.7 353.3L626.2 353.1L627.7 352.3L629.2 351.5L630.8 352.3L632.3 351.6L633.8 352.1L635.3 352.1L636.8 352.2L638.3 351.5L639.8 351.2L641.3 351.8L642.8 351.3L644.3 351.9L645.8 351.5L647.3 351.6L648.8 351.4L650.3 352L651.8 352L653.3 351.7L654.8 351.6L656.3 352.1L657.8 353L659.4 352.5L660.9 351.8L662.4 351.8L663.9 351.7L665.4 352.2L666.9 352.8L668.4 352.7L669.9 352L671.4 351.9L672.9 352L674.4 352.1L675.9 352.1L677.4 353.2L678.9 352.8L680.4 352.9L681.9 353L683.4 353L684.9 353.2L686.5 352.6L688 352.8L689.5 353.5L691 352.3L692.5 352.6L694 352.3L695.5 351.7L697 351.3L698.5 352.4L700 351.8L700 352.6L701.5 352L703 352.3L704.5 352L706.1 352.9L707.6 353.8L709.1 353.3L710.6 353.8L712.1 354.7L713.6 354.2L715.2 354.3L716.7 354.9L718.2 355.6L719.7 354.7L721.2 355.3L722.7 354.8L724.2 354.6L725.8 356.1L727.3 355.3L728.8 356.6L730.3 356.9L731.8 357.1L733.3 357.3L734.8 357.4L736.4 356.9L737.9 357.1L739.4 356.8L740.9 358L742.4 358.5L743.9 358.8L745.5 358L747 358.5L748.5 358.2L750 359.1L751.6 359.5L753.1 360.2L754.7 360.1L756.2 360.1L757.8 360.3L759.4 359.3L760.9 359.9L762.5 359.2L764.1 359.6L765.6 359.4L767.2 360.8L768.8 360L770.3 361.2L771.9 361.9L773.4 361.4L775 362L776.5 361.3L778 361.4L779.5 361.5L781 361.9L782.5 362.3L784.2 361.8L785.8 359.2L787.5 357.9L789.2 355.8L790.8 353.5L792.5 352L794.2 348.8L795.8 347.1L797.5 343.8L799.2 341L800.8 338.1L802.5 335.3L804.2 335.9L805.8 336.1L807.5 336.4L809.2 338.3L810.8 338.4L812.5 339.2L814 337L815.5 334L817 331.7L818.5 328.9L820 325.5L821.5 320.5L823 317L824.5 312.9L826 309.6L827.5 305.3L829.2 303.8L830.8 302.4L832.5 300.3L834 302.2L835.5 304L837 304.4L838.5 306.7L840 308.5L841.7 309L843.3 308.5L845 308.4L846.7 308.4L848.3 309L850 310.4L851.6 309.1L853.1 307.5L854.7 306.9L856.2 305.8L857.8 305.8L859.4 305.7L860.9 305.4L862.5 303.4L864.2 304.9L865.8 305.8L867.5 308.5L869.2 310.3L870.8 311.4L872.5 313.5L874.1 314.1L875.6 315.4L877.2 316.1L878.8 316.8L880.3 318.8L881.9 320L883.4 320.8L885 322.2L886.7 323.4L888.3 325L890 325.2L891.7 326.3L893.3 327.5L895 329.7L896.6 331.7L898.1 332.3L899.7 334L901.2 334.8L902.8 337L904.4 338.9L905.9 339.3L907.5 341.9L909.2 343.6L910.8 344.4L912.5 346.2L914.2 347.6L915.8 350.2L917.5 352.8L919 351.8L920.5 351.3L922 351.9L923.5 352.6L925 352.7L926.5 352.2L928 351.4L929.5 351.9L931 351.9L932.5 352.5L934 352.3L935.5 352.6L937 353.1L938.5 352.7L940 353L941.5 352.1L943 351.2L944.5 352.3L946 351.3L947.5 352.6L949 352.2L950.5 351.3L952 351.3L953.5 352.1L955 351.8L956.5 352.1L958 351.4L959.5 352.3L961 351.9L962.5 352.5L964 351.6L965.5 352.1L967 352L968.5 351.8L970 351.1L971.5 351.6L973 352.4L974.5 351.5L976 351.7L977.5 351L979 352.4L980.5 353L982 352.8L983.5 352.3L985 351.4L986.5 351.1L988 351.9L989.5 352.5L991 353.1L992.5 353.1L994 352.4L995.5 351.7L997 352L998.5 351.7L1000 351.9L1001.5 352.7L1003 352.2L1004.5 352.9L1006 352.8L1007.5 351.6L1009 352.2L1010.5 352.4L1012 352.4L1013.5 351.3L1015 352.4L1016.5 352.2L1018 352.1L1019.5 351.5L1021 350.9L1022.5 350.7L1024 350.9L1025.5 351.2L1027 351L1028.5 350.8L1030 351.9L1031.5 352.3L1033 352.8L1034.5 351.9L1036 352.3L1037.5 352.3L1039 351.4L1040.5 352.4L1042 351.9L1043.5 351.4L1045 351.2L1046.5 352.4L1048 351.7L1049.5 351.7L1051 351.9L1052.5 351.7L1054 352.1L1055.5 351.3L1057 351.6L1058.5 352L1060 352.2L1061.5 352.3L1063 351.7L1064.5 352.1L1066 352.9L1067.5 352.4L1069 352.4L1070.5 352.8L1072 351.9L1073.5 351.5L1075 352.6L1076.5 351.9L1078 351.8L1079.5 351.7L1081 352.7L1082.5 352.4L1084 352.9L1085.5 351.8L1087 351.5L1088.5 352L1090 351.7L1091.5 352.2L1093 352.1L1094.5 351.3L1096 351L1097.5 351.4L1100 351.8L1101.5 351.3L1103 351.2L1104.6 350.7L1106.1 350.9L1107.6 351.1L1109.1 351.3L1110.6 351.7L1112.2 352.3L1113.7 352.4L1115.2 352.4L1116.7 351.6L1118.2 351.6L1119.8 352L1121.3 352.5L1122.8 351.5L1124.3 350.6L1125.8 350.3L1127.4 351L1128.9 351.9L1130.4 351L1131.9 351.7L1133.4 351.7L1135 352.1L1136.5 352.4L1138 351.1L1139.5 351.7L1141 350.8L1142.5 350.3L1144.1 350.6L1145.6 350.8L1147.1 350.2L1148.6 350.3L1150.1 350.1L1151.7 349.9L1153.2 349.8L1154.7 349.6L1156.2 349.8L1157.7 350.1L1159.3 350.3L1160.8 350.9L1162.3 351L1163.8 350.9L1165.3 350.5L1166.9 350.8L1168.4 350.2L1169.9 349.9L1171.4 349.6L1172.9 350.4L1174.5 349.8L1176 349.7L1177.5 349.9L1179 347.2L1180.5 344.5L1182 341.4L1183.5 338.4L1185 334.6L1186.7 333L1188.3 330.7L1190 327.6L1191.7 324.9L1193.3 322.6L1195 319.4L1196.7 319.3L1198.3 319.4L1200 318.1L1198.3 319.2L1196.7 319.9L1195 322L1193.3 322.7L1191.7 323.6L1190 325.3L1191.6 322.6L1193.1 321L1194.7 318.1L1196.2 315.8L1197.8 313L1199.4 311L1200.9 308.6L1202.5 305.5L1204 302.9L1205.5 298.3L1207 294.9L1208.5 291.5L1210 287.6L1211.7 287.6L1213.3 288.1L1215 289.5L1216.7 288.7L1218.3 290L1220 290.4L1221.7 289.5L1223.3 289.1L1225 288.5L1226.7 288.3L1228.3 288.1L1230 286.8L1231.7 288.5L1233.3 290.6L1235 293.7L1236.7 295.7L1238.3 297.1L1240 299.9L1241.7 298L1243.3 296.9L1245 296.2L1246.7 295.2L1248.3 293.9L1250 293.1L1251.6 293.5L1253.1 294.5L1254.7 294.9L1256.2 294.4L1257.8 295.4L1259.4 295.3L1260.9 296.6L1262.5 296.8L1264.1 296.2L1265.6 295.4L1267.2 296.2L1268.8 295.5L1270.3 294.6L1271.9 295.4L1273.4 294.3L1275 293.8L1276.7 295.3L1278.3 298L1280 300L1281.7 301.6L1283.3 304.1L1285 305.3L1286.7 306.3L1288.3 309L1290 309.6L1291.7 310.7L1293.3 312.4L1295 315.4L1296.5 317.5L1298 319.8L1299.5 322.2L1301 324.6L1302.5 327.8L1304.2 330.4L1305.8 332.3L1307.5 334.4L1309.2 337.8L1310.8 340.2L1312.5 342.6L1314 343.5L1315.5 346.1L1317 347.3L1318.5 349.4L1320 350.7L1321.5 350.7L1323 349.8L1324.5 351L1326 351.6L1327.5 350.6L1329 350.2L1330.5 351.2L1332 351.8L1333.5 351.3L1335 352.5L1336.5 351.7L1338 352.2L1339.5 352.4L1341 352.3L1342.5 353L1344 353L1345.5 353.6L1347 354.1L1348.5 353L1350 353.2L1351.5 353.6L1353 353.3L1354.5 353.7L1356 352.9L1357.5 352.6L1359.1 353.2L1360.6 353L1362.1 352.9L1363.6 353.2L1365.1 353.6L1366.6 353.9L1368.1 354L1369.6 353.8L1371.1 353.6L1372.6 354.3L1374.1 354.6L1375.6 354.8L1377.2 354.9L1378.7 354.5L1380.2 353.5L1381.7 353.9L1383.2 353.4L1384.7 353.1L1386.2 353.2L1387.7 352.6L1389.2 353L1390.7 352.8L1392.2 352.7L1393.8 353.1L1395.3 353.8L1396.8 353.9L1398.3 353.4L1399.8 353.9L1401.3 353.5L1402.8 353.3L1404.3 353.2L1405.8 353L1407.3 352.7L1408.8 353.9L1410.3 353.9L1411.9 353.9L1413.4 353.9L1414.9 353.7L1416.4 353.8L1417.9 352.7L1419.4 352.4L1420.9 353L1422.4 353.2L1423.9 352.5L1425.4 352.5L1426.9 352.7L1428.4 353.9L1430 354.2L1431.5 353L1433 353L1434.5 352.9L1436 352.5L1437.5 352.6L1439 353.9L1440.5 354.3L1442 353.4L1443.5 353.9L1445 352.9L1446.6 353.4L1448.1 352.6L1449.6 353.3L1451.1 353.5L1452.6 354.2L1454.1 353.9L1455.6 354.3L1457.1 353.3L1458.6 353.5L1460.1 352.9L1461.6 352.3L1463.1 353.7L1464.7 352.6L1466.2 352.7L1467.7 352.7L1469.2 352.5L1470.7 353.5L1472.2 353.8L1473.7 353.3L1475.2 353.3L1476.7 353.8L1478.2 352.7L1479.7 353.2L1481.2 353.8L1482.8 353.7L1484.3 353.4L1485.8 352.8L1487.3 352.4L1488.8 352.3L1490.3 352.5L1491.8 352.5L1493.3 353.3L1494.8 352.6L1496.3 352.2L1497.8 353.2L1499.4 353.1L1500.9 352.4L1502.4 353.3L1503.9 352.4L1505.4 352.5L1506.9 352.7L1508.4 352.9L1509.9 352.5L1511.4 353.6L1512.9 353.4L1514.4 352.9L1515.9 353.2L1517.5 352.9L1519 353.1L1520.5 353.2L1522 352.7L1523.5 353.5L1525 353" stroke="#3f7be0" stroke-width="2.0999999999999996"/><path d="M318 298.5L319.5 297.3" stroke="#f0c890"/><path d="M319.5 297.3L321 297L322.5 295.6L324.2 295.6L325.8 295.1L327.5 294.2L330 292.1" stroke="#f2e060"/><path d="M330 292.1L331.9 292.9" stroke="#d87858"/><path d="M331.9 292.9L333.8 294.5L335.6 297.9" stroke="#f2e060"/><path d="M335.6 297.9L337.5 301.5L339.4 305.7" stroke="#f0c890"/><path d="M339.4 305.7L341.2 310.2L343.8 319.5L345.8 329.4L347.5 309.9L349.2 309L350.8 307.1L352.5 305" stroke="#30dc30"/><path d="M352.5 305L354.2 305.7L355.8 304.6L357.5 305.4L359.2 306.5" stroke="#f0c890"/><path d="M359.2 306.5L360.8 307.7L362.5 309.1L364.4 313.1L366.2 317.7L368.1 318.3L370 319.9L372.5 317.7L374.2 319.9L375.8 322.5L377.5 324.3L380 331.5L382.5 329.1L384.4 334.3L386.2 338.6L388.8 332.1L390.6 335L392.5 337.4L394.4 340.3L396.2 344L398.1 337.9L400 331.1L401.9 335.7L403.8 340.1L405.6 344.4L407.5 348.1L409.4 348.7L411.2 350.7L413.1 351.6L415 353.5L416.5 353.9L418 353L419.5 353L421 352.3L422.5 352.8L424 353.1L425.5 352.8L427 353.1L428.5 352.2L430 352.3L431.7 352.4L433.3 352.4L435 352.3L436.7 352.9L438.3 353.3L440 352.9L441.7 353.1L443.3 352.4L445 353.2L446.7 353.6L448.3 354.4L450 354.6L451.6 353.8L453.1 353.5L454.7 353.8L456.2 352.9L457.8 353.2L459.4 352.8L460.9 352.5L462.5 352.3L464.1 353.3L465.6 352.7L467.2 352.6L468.8 352.7L470.3 353.5L471.9 352.6L473.4 352.8L475 352.9L476.6 353.6L478.1 353.8L479.7 354L481.2 353.2L482.8 353.1L484.4 353L485.9 353.8L487.5 354.3L489.1 353.3L490.6 352.9L492.2 352.9L493.8 352.9L495.3 353.3L496.9 353.6L498.4 353.3L500 352.8L501.6 353.4L503.1 353.6L504.7 354.1L506.2 355L507.8 355.1L509.4 355L510.9 355.2L512.5 355.4L514.1 354.7L515.6 355.7L517.2 356.1L518.8 356.5L520.3 356.6L521.9 356.2L523.4 356L525 355.6L526.7 354.5L528.3 352.2L530 350.3L531.9 353.7L533.8 357.1L535.6 355.6L537.5 353.5L539.1 353.3L540.6 353.4L542.2 353.4L543.8 353.8L545.3 353.5L546.9 354.6L548.4 354.7L550 354.1L551.7 354.5L553.3 355.2L555 355.8L556.7 353.8L558.3 353.1L560 352.1L561.7 351.3L563.3 350.9L565 349.9L566.7 350.5L568.3 351.5L570 352.4L571.5 353.3L573 352.7L574.5 352.2L576 353.4L577.5 353.4L579 352.8L580.5 353.1L582 352.5L583.5 353L585 354L586.5 354.2L588 354.1L589.5 353.4L591 353.3L592.5 352.9L594 353.7L595.5 353.8L597 354.2L598.5 353.7L600 353.3L601.6 354L603.1 354.6L604.7 354.7L606.2 354.6L607.8 354.6L609.4 354.5L610.9 353.7L612.5 353.7L614.1 353.5L615.6 352.9L617.2 352.7L618.8 352.9L620.3 353L621.9 353.7L623.4 354.4L625 354L626.6 354.5L628.1 354.8L629.7 354.8L631.2 353.9L632.8 353.2L634.4 352.9L635.9 352.7L637.5 352.6L639.1 353.2L640.6 353.8L642.2 354L643.8 353.5L645.3 353.5L646.9 353.7L648.4 352.7L650 353.1L651.6 353.7L653.1 353.7L654.7 353.7L656.2 353.3L657.8 352.6L659.4 353.3L660.9 352.9L662.5 353.4L664.1 353.9L665.6 353.2L667.2 353L668.8 353.7L670.3 353.6L671.9 352.8L673.4 352.3L675 352.2L676.6 353.2L678.1 353.6L679.7 352.7L681.2 353.4L682.8 353.9L684.4 353.7L685.9 353.1L687.5 353.1L689.1 352.5L690.6 352L692.2 353.3L693.8 353.4L695.3 353.2L696.9 353.8L698.4 353.2L700 353.7L700 353.8L701.6 352.9L703.1 352.6L704.7 352.5L706.2 352.4L707.8 352.9L709.4 352.6L710.9 352.7L712.5 352.3L714.1 353.3L715.6 352.9L717.2 352.9L718.8 353.1L720.3 353.7L721.9 353.2L723.4 353.7L725 353.3L726.7 354.3L728.3 355.3L730 355.6L731.5 356.1L733 356.1L734.5 355.9L736 357.2L737.5 357L739 357.5L740.5 358.2L742 358.4L743.5 358.3L745 358.7L746.6 359.1L748.2 359.8L749.8 359.2L751.4 359.8L753 359.8L754.5 360L756.1 361L757.7 361.2L759.3 361.5L760.9 362.2L762.5 362.8L764.1 362.3L765.6 362.3L767.2 362.1L768.8 362.1L770.3 362.3L771.9 362.1L773.4 362.1L775 362L776.7 362L778.3 361.3L780 360.9L782.5 353.6L784.1 347.6L785.6 342.6L787.2 338.2L788.8 333.4L790.3 332.6L791.9 332.5L793.4 333.1L795 332.9L796.7 334.2L798.3 335.2L800 337.3L801.7 338.5L803.3 339.5L805 339.2L806.7 340.2L808.3 341L810 340.9L811.7 339.6L813.3 338L815 335L816.7 331.5L818.3 326.8L820 322.5L821.7 323.7L823.3 324.2L825 323.6L827.5 309.8" stroke="#30dc30"/><path d="M827.5 309.8L830 296.2L831.9 304.1" stroke="#f0c890"/><path d="M831.9 304.1L833.8 311.9L835.6 303.2" stroke="#30dc30"/><path d="M835.6 303.2L837.5 295.1" stroke="#f0c890"/><path d="M837.5 295.1L840 290.6" stroke="#d87858"/><path d="M840 290.6L842.5 299.8L844.4 294.8" stroke="#f2e060"/><path d="M844.4 294.8L846.2 289.2" stroke="#d87858"/><path d="M846.2 289.2L848.1 296.9" stroke="#f2e060"/><path d="M848.1 296.9L850 304.9L852.5 292.5" stroke="#f0c890"/><path d="M852.5 292.5L854.4 296.8" stroke="#f2e060"/><path d="M854.4 296.8L856.2 302.9L857.9 300.6L859.6 298.5" stroke="#f0c890"/><path d="M859.6 298.5L861.2 294.8L863.1 299.6" stroke="#f2e060"/><path d="M863.1 299.6L865 304.1L866.7 304.2L868.3 303L870 301.8L871.9 300.8L873.8 300.4L875.6 305.7" stroke="#f0c890"/><path d="M875.6 305.7L877.5 309.9L879.4 306.3" stroke="#30dc30"/><path d="M879.4 306.3L881.2 304.1" stroke="#f0c890"/><path d="M881.2 304.1L883.1 309.7L885 315.4L886.7 315.8L888.3 316.6L890 318.6L892.5 324.8L894 326.3L895.5 329.3L897 331.4L898.5 333.6L900 334.6L901.5 336.4L903 336.5L904.5 338.3L906 339.1L907.5 339.8L909.2 341.7L910.8 344L912.5 344.9L914.2 346.9L915.8 349.8L917.5 352L919 351.8L920.5 351.8L922 351.7L923.5 351.9L925 352.3L926.6 352.3L928.1 352.9L929.7 352.4L931.2 352.4L932.8 351.9L934.4 351.9L935.9 351.3L937.5 351.3L939.1 350.9L940.6 351.8L942.2 351.8L943.8 351.2L945.3 351.3L946.9 352L948.4 351L950 351.6L951.6 351.3L953.1 351.4L954.7 351.9L956.2 351.5L957.8 351.5L959.4 351.8L960.9 352.5L962.5 351.8L964.1 352.3L965.6 352.3L967.2 352.2L968.8 351.9L970.3 351.7L971.9 351.1L973.4 351L975 350.9L976.6 351.9L978.1 351.6L979.7 351.3L981.2 351L982.8 352.1L984.4 352.6L985.9 352.5L987.5 351.9L989.1 351.6L990.6 351.5L992.2 351.7L993.8 351.3L995.3 351.6L996.9 351.5L998.4 352.5L1000 352.9L1001.5 352.5L1003 351.8L1004.5 352.6L1006.1 352L1007.6 351.8L1009.1 351.1L1010.6 351.4L1012.1 351.7L1013.6 351.9L1015.2 351.5L1016.7 351.8L1018.2 351.1L1019.7 351.2L1021.2 351L1022.7 351.4L1024.2 351L1025.8 350.8L1027.3 351.2L1028.8 351.2L1030.3 351.8L1031.8 351.9L1033.3 352.4L1034.8 352.4L1036.4 352.5L1037.9 352.8L1039.4 352.2L1040.9 351.8L1042.4 352.7L1043.9 351.8L1045.5 352.2L1047 352.3L1048.5 351.4L1050 352.3L1051.5 352.7L1053.1 352.5L1054.6 352.5L1056.1 352.7L1057.7 351.7L1059.2 351.8L1060.7 351.8L1062.3 352.3L1063.8 352.5L1065.3 352.6L1066.9 352.2L1068.4 352.5L1069.9 352.3L1071.5 352.3L1073 351.5L1074.5 350.8L1076 350.7L1077.6 350.9L1079.1 350.6L1080.6 351.6L1082.2 351.6L1083.7 351.7L1085.2 351.8L1086.8 351.8L1088.3 351.6L1089.8 350.7L1091.4 351.5L1092.9 351.8L1094.4 351.5L1096 351.4L1097.5 351.6L1100 350.7L1101.6 351.4L1103.1 351L1104.7 350.6L1106.2 350.7L1107.8 351.5L1109.4 351.1L1110.9 351.7L1112.5 352.4L1114.1 352L1115.6 351.7L1117.2 351.7L1118.8 352.1L1120.3 352.4L1121.9 352.3L1123.4 352.4L1125 351.5L1126.5 351.2L1128 351.1L1129.5 351.8L1131 351.4L1132.5 351.6L1134 350.8L1135.5 350.5L1137 350.6L1138.5 351.2L1140 351.5L1141.5 350.6L1143 349.1L1144.5 348.2L1146 347.2L1147.5 346.2L1149.1 345.5L1150.6 346.3L1152.2 345.5L1153.8 346.2L1155.3 346.4L1156.9 345L1158.4 344.9L1160 345.4L1161.5 346.9L1163 347.3L1164.5 347.8L1166 348.5L1167.5 350.4L1169.2 349.8L1170.8 350L1172.5 349.5L1174.2 349.8L1175.8 350.6L1177.5 349.7L1179.4 344.1L1181.2 337.7L1182.8 335.7L1184.4 333.1L1185.9 329.9L1187.5 328.1L1189 324.7L1190.5 320.9L1192 317.5L1193.5 315L1195 312.2L1196.5 310.6L1198 308.7L1199.5 307.4L1201 306" stroke="#30dc30"/><path d="M1201 306L1202.5 305.3L1205 294.4" stroke="#f0c890"/><path d="M1205 294.4L1207.5 287.6L1209.4 286.8L1211.2 284.7L1213.1 288L1215 290.6L1216.7 288.4L1218.3 285.1" stroke="#d87858"/><path d="M1218.3 285.1L1220 282.3L1221.9 283.5L1223.8 285.7L1225.6 284.2L1227.5 282.5L1229.4 279.3L1231.2 275.9L1232.9 276L1234.6 276.4L1236.2 278.1L1237.8 277.7L1239.4 278.5L1240.9 277.9L1242.5 277.6L1243.8 284.8L1245.6 283.8L1247.5 283.3" stroke="#e31212"/><path d="M1247.5 283.3L1250 289.3L1251.6 288.6L1253.1 287.7L1254.7 286.5L1256.2 285.9L1258.1 291.1" stroke="#d87858"/><path d="M1258.1 291.1L1260 295.6L1261.9 293.1" stroke="#f2e060"/><path d="M1261.9 293.1L1263.8 289.6L1265 281.4" stroke="#d87858"/><path d="M1265 281.4L1266.7 281.7L1268.3 282.5L1270 282.9" stroke="#e31212"/><path d="M1270 282.9L1271.2 289.8L1273.1 289.9L1275 291.6L1276.8 290.8L1278.5 291L1280.2 290.9L1282 290.8L1283.8 291.4" stroke="#d87858"/><path d="M1283.8 291.4L1286.2 297.1L1287.9 295.4L1289.6 294.8L1291.2 293.5L1293.8 300" stroke="#f2e060"/><path d="M1293.8 300L1295.3 302.3L1296.9 304.4L1298.4 306.7" stroke="#f0c890"/><path d="M1298.4 306.7L1300 309.2L1301.9 313.4L1303.8 316.4L1305.6 322.7L1307.5 330.5L1309.4 333.5L1311.2 335.4L1312.9 332.9L1314.6 331L1316.2 329.1L1317.9 332.7L1319.6 335.7L1321.2 339.2L1322.9 342.6L1324.6 346.4L1326.2 350.5L1327.8 350.3L1329.4 349.5L1330.9 349L1332.5 348.8L1334.1 349L1335.6 349.4L1337.2 349.3L1338.8 349.9L1340.3 351.5L1341.9 351.2L1343.4 351.9L1345 352.6L1346.7 354.8L1348.3 355.7L1350 357.1L1351.5 356L1353 355.3L1354.5 354.5L1356 354.5L1357.5 353.8L1359.1 354L1360.6 352.9L1362.2 352.4L1363.8 353.3L1365.3 354L1366.9 353.8L1368.4 353.9L1370 353.1L1371.7 352.7L1373.3 352.9L1375 352.6L1376.7 352.1L1378.3 351.7L1380 350.1L1381.5 348.7L1383 347.7L1384.5 347.4L1386 347.1L1387.5 347L1390 353.7L1391.5 353.3L1393 353.2L1394.5 352.6L1396 352.4L1397.5 351.4L1399 352.5L1400.5 352.4L1402 353.5L1403.5 353.8L1405 353.6L1406.5 353.1L1408 353.1L1409.5 353.7L1411 354L1412.5 353.3L1414 352.9L1415.5 353.4L1417 353.7L1418.5 353.6L1420 353.2L1421.5 353.7L1423 353L1424.5 353.1L1426 353.4L1427.5 354.3L1429 354.2L1430.5 354.6L1432 354.1L1433.5 353.5L1435 353.2L1436.5 354.2L1438 354.3L1439.5 353.7L1441 353L1442.5 353.4L1444 353.9L1445.5 353.7L1447 353.3L1448.5 353.8L1450 354.4L1451.5 353.6L1453 353L1454.5 353.2L1456 353.4L1457.5 353.9L1459 353.3L1460.5 354L1462 354.2L1463.5 354L1465 353.4L1466.5 354.3L1468 353.7L1469.5 354.2L1471 353.6L1472.5 353.2L1474 353.9L1475.5 353.5L1477 354.3L1478.5 354L1480 353.4L1481.5 353.2L1483 353.4L1484.5 353.8L1486 354.5L1487.5 353.5L1489 353.5L1490.5 353.2L1492 354.2L1493.5 353.4L1495 352.9L1496.5 352.7L1498 353.1L1499.5 354.1L1501 354.5L1502.5 354.4L1504 354.8L1505.5 354.9L1507 354L1508.5 353.4L1510 354.3L1511.5 354.4L1513 353.3L1514.5 353.8L1516 353.6L1517.5 353.5L1519 353.4L1520.5 353.1L1522 352.7L1523.5 352.9L1525 353.8" stroke="#30dc30"/></g><g fill="none" stroke-width="2.3" stroke-linejoin="round"><path d="M318.6 994.1L320.1 995.2L321.6 994.2L323.1 994.7L324.6 993.9L326.1 993.8L327.6 995L329.1 994.2L330.6 994.6L332.1 994.4L333.6 994.3L335.1 994.3L336.6 993.8L338.1 994.7L339.6 993.8L341.1 993.6L342.6 993.1L344.1 993.3L345.6 993.7L347.2 994.7L348.7 994.2L350.2 993.5L351.7 993.4L353.2 994.7L354.7 993.6L356.2 994.1L357.7 993.9L359.2 994.2L360.7 993.8L362.2 994.3L363.7 994.1L365.2 994.3L366.7 994.8L368.2 994.5L369.7 993.5L371.2 993L372.7 994.2L374.2 994L375.7 993.4L377.2 994.4L378.7 994.2L380.2 994.4L381.7 994.7L383.2 993.8L384.7 993.5L386.2 994.3L387.7 993.3L389.2 994L390.8 993.1L392.3 993.7L393.8 994L395.3 994.6L396.8 994.6L398.3 994L399.8 993.2L401.3 992.7L402.8 993.2L404.3 993.4L405.8 992.6L407.3 993.8L408.8 993.6L410.3 993.8L411.8 993.1L413.3 992.8L414.8 992.2L416.3 992.5L417.8 992.5L419.3 992.8L420.8 992.8L422.4 994.3L424 995.4L425.6 994.9L427.1 995.5L428.7 995.6L430.3 996.9L431.8 997.7L433.4 996.6L434.9 997.1L436.5 996.4L438 995.6L439.6 996.4L441.1 996L442.7 995.6L444.2 995.9L445.7 995.6L447.2 995.8L448.8 996L450.3 996L451.8 996.3L453.4 995.9L454.9 995.4L456.4 995.2L457.9 995.1L459.5 995.8L461 995.8L462.5 996.6L464.1 996.5L465.6 996.7L467.1 997.3L468.6 996L470.2 995.3L471.7 995.2L473.2 995.6L474.8 996.1L476.3 996.6L477.8 996.2L479.4 997.1L480.9 995.8L482.4 996.6L483.9 995.9L485.5 996.8L487 995.7L488.5 996.8L490 997L491.6 997.4L493.1 996.9L494.6 995.9L496.1 996.9L497.7 996.4L499.2 995.5L500.7 996L502.2 996L503.8 996L505.3 995.4L506.8 995.1L508.3 995.7L509.9 995.8L511.4 995.2L512.9 995.5L514.4 996.1L515.9 996.4L517.5 996L519 995.7L520.5 995.5L522 995.2L523.6 995L525.1 995.3L526.6 994.8L528.1 995.7L529.7 996.1L531.2 996L532.7 995L534.2 995.1L535.7 995.2L537.3 994.7L538.8 996L540.3 996.2L541.8 995.8L543.4 996L544.9 995.2L546.4 994.8L547.9 995.2L549.5 995.7L551 995.8L552.5 994.7L554 995.2L555.6 996L557.1 996L558.6 996.3L560.1 996.6L561.6 995.3L563.2 994.9L564.7 995.1L566.2 996L567.7 995.3L569.3 995.9L570.8 996.1L572.3 995.5L573.8 995.5L575.4 996L576.9 995.9L578.4 995L579.9 995.6L581.6 994L583.3 993.2L585 993.6L586.7 993.1L588.4 991.6L590.1 990.5L591.8 990.3L594.1 982L595.7 982.3L597.3 983.1L598.9 983.3L600.5 983.7L602 983.7L603.6 983.5L605.1 983.5L606.6 983.8L608.1 984.1L609.6 984.9L611.1 984.4L612.6 984L614.2 985.1L615.7 984.9L617.2 985.1L618.7 984.6L620.2 985.6L621.7 985.1L623.3 984.9L624.8 985.7L626.3 985.5L627.9 985L629.4 985.8L630.9 985.4L632.5 985L634 986L635.5 986L637 986L638.6 985.1L640.1 985.7L641.6 985.5L643.2 985.9L644.7 985.2L646.2 985.6L647.7 985.8L649.3 985.2L650.8 985.3L652.3 985.6L653.9 986.1L655.4 986.2L656.9 986L658.4 984.7L660 985L661.5 985.2L663 984.3L664.6 984.5L666.2 983.9L667.9 985.1L669.6 986L671.3 985.3L673 986.2L674.7 987.5L676.4 988.1L678.1 988.1L679.6 987.9L681.1 989.7L682.6 990.8L684.1 991.2L685.6 991.2L687.1 992.4L688.6 993.2L690.1 993.8L691.6 994.1L693.2 993.5L694.7 993.3L696.3 993.3L697.8 993.2L699.3 993.6L700.9 993L702.4 993.8L703.9 993.6L705.5 993.2L707 993.1L708.6 993.4L710.1 993.6L711.6 994.3L713.2 993.5L714.7 993.3L716.3 993.4L717.8 993.2L719.3 994.2L720.9 993.5L722.4 993.1L724 993.8L725.5 994.5L727 994.9L728.6 994.6L730.1 994.1L731.6 994.8L733.2 994.8L734.7 994.4L736.3 994.3L737.8 994.9L739.3 995.3L740.9 995.3L742.4 993.9L744 993.6L745.5 993.6L747 993.1L748.6 993.9L750.1 993.1L751.6 994.1L753.2 994L754.7 994L756.3 993.7L757.8 994.4L759.3 994.1L760.9 994.3L762.4 994.4L764 993.9L765.5 994.1L767 993.2L768.6 992.5L770.1 992.9L771.7 992.4L773.2 991.7L774.7 992L776.3 991.6L777.8 991L779.4 992L780.9 991.9L782.5 992.7L784 992.4L785.6 993L787.1 992.1L788.7 991.7L790.2 992L791.8 992.7L793.3 993.1L794.9 993L796.4 992.1L798 992.2L799.5 991.6L801.1 992L802.6 993.2L804.2 992.8L805.7 993.2L807.3 993.3L808.9 992.6L810.4 993.2L812 992.5L813.5 993.2" stroke="#3f7be0" stroke-width="2.0999999999999996"/><path d="M318.6 994.2L320.1 994.1L321.6 993.7L323.1 994.4L324.6 993.7L326.1 993.9L327.6 994.5L329.1 993.8L330.6 994L332.1 994.1L333.6 993.6L335.1 993.7L336.6 994L338.1 993.9L339.6 994.2L341.1 993.6L342.6 993.5L344.1 993.2L345.6 993.5L347.2 994.1L348.7 994L350.2 994.2L351.7 993.8L353.2 994L354.7 993.4L356.2 993.3L357.7 993.6L359.2 993.9L360.7 993.6L362.2 993.1L363.7 993.1L365.2 993L366.7 993L368.2 993.6L369.7 993.1L371.2 993.7L372.7 993.9L374.2 993.1L375.7 993.1L377.2 993.2L378.7 992.7L380.2 992.9L381.7 993.5L383.2 992.9L384.7 993.1L386.2 992.7L387.7 993L389.2 993.5L390.8 992.9L392.3 992.4L393.8 992.3L395.3 992.7L396.8 992.3L398.3 992.2L399.8 992.6L401.3 993.2L402.8 992.9L404.3 992.8L405.8 992.9L407.3 992.4L408.8 992.7L410.3 992.3L411.8 992.7L413.3 993.2L414.8 992.4L416.3 992.6L417.8 992.7L419.3 992.3L420.8 992.2L422.5 992.8L424.2 992.9L425.9 992L427.6 992.1L429.3 992.3L431 991.5L432.7 992.5L434.4 992.8L436.1 993.7L437.7 995L439.3 995.1L440.8 995.4L442.4 994.8L443.9 994.9L445.4 995.5L447 995.5L448.5 995.4L450.1 995.3L451.6 996L453.1 995.9L454.7 995.2L456.2 995.8L457.7 995.5L459.3 995.5L460.8 995.2L462.4 995.4L463.9 995.3L465.4 995L467 995.5L468.5 995.1L470.1 995.7L471.6 995.1L473.1 995.7L474.7 996L476.2 995.8L477.8 995.9L479.3 995.5L480.8 995.8L482.4 995.6L483.9 995.3L485.4 996L487 995.7L488.5 995.5L490.1 995.9L491.6 995.5L493.1 995.6L494.7 995.1L496.2 995.6L497.8 995.1L499.3 994.6L500.8 995.4L502.4 994.8L503.9 995.4L505.5 995.6L507 995.3L508.5 994.5L510.1 994.1L511.6 994.1L513.1 994.2L514.7 994.5L516.2 995L517.8 994.5L519.3 994L520.8 994.2L522.4 993.8L523.9 993.6L525.5 994L527 994.3L528.5 993.7L530.1 993.9L531.6 994.2L533.1 994.4L534.7 994L536.2 994.4L537.8 993.8L539.3 994.1L540.8 994.3L542.4 994.5L543.9 994.1L545.5 993.5L547 993.1L548.5 993.5L550.1 993.2L551.6 993.6L553.2 993.2L554.7 993.7L556.2 993.3L557.8 993L559.4 993.1L561 993.5L562.5 993.9L564.1 993.9L565.7 993.7L567.3 994L568.9 994.7L570.4 994.6L572 995.1L573.6 994.3L575.2 995.1L576.8 995.4L578.3 995.2L579.9 995.1L581.6 994.8L583.3 994.9L585 993.8L586.7 993.9L588.4 993.6L590.1 993.1L592.1 988.3L594.1 983.4L595.7 984.1L597.2 985.7L598.7 986.9L600.2 988.2L601.9 987L603.6 985L605.3 984L606.9 984.2L608.4 985L610 984.8L611.5 985.5L613.1 985.9L614.6 986.1L616.2 986.6L617.7 986.1L619.3 986.6L620.8 987.1L622.4 987.5L623.9 987.5L625.5 987L627 986.9L628.5 987.3L630.1 987L631.6 986.7L633.2 986.9L634.7 987L636.2 987.2L637.8 986.7L639.3 987.2L640.9 987L642.4 987.4L643.9 986.7L645.5 987.4L647 987.3L648.6 987.6L650.1 987.8L651.6 987.7L653.2 986.8L654.7 986.7L656.2 986.5L657.8 986.9L659.3 986.5L660.8 986.2L662.3 986L663.8 985.8L665.3 986.6L666.8 987L668.3 986.4L669.8 986.5L671.3 986.3L673 986.8L674.7 987.3L676.4 988.1L678.1 988.4L679.8 988.9L681.5 989.7L683 990L684.6 990.7L686.1 991.8L687.6 991.6L689.2 991.9L690.7 993.1L692.3 993.1L693.8 993.6L695.3 994.7L696.9 995.3L698.4 995.4L699.9 995L701.4 995.1L702.9 995.2L704.4 995.7L705.9 996.2L707.4 996.2L708.9 996.3L710.4 996.4L711.9 996.4L713.5 996.4L715 996.5L716.5 995.6L718 995.4L719.5 995.2L721 995.6L722.5 995.6L724 995.4L725.5 995.9L727 995.6L728.6 995.2L730.1 995.1L731.6 995.3L733.2 995.5L734.7 995.5L736.3 995.4L737.8 995L739.3 995.1L740.9 995L742.4 994.8L744 995.1L745.5 994.8L747 995.2L748.6 995.4L750.1 994.8L751.6 995.1L753.2 994.9L754.7 994.9L756.3 995.1L757.8 995.3L759.3 995.5L760.9 995.3L762.5 994.6L764.1 994.6L765.7 994.3L767.2 993.8L768.8 994L770.4 994L772 994.4L773.6 993.9L775.1 994.2L776.7 993.9L778.3 993.2L779.9 993.6L781.5 993.2L783 993.2L784.6 992.8L786.1 992.5L787.6 993.4L789.1 992.9L790.7 992.7L792.2 992.7L793.7 992.6L795.2 993.4L796.8 994L798.3 993.8L799.8 993.5L801.3 993.9L802.8 993.7L804.4 993.2L805.9 993.6L807.4 993.4L808.9 993.2L810.5 993.2L812 993.3L813.5 993.6" stroke="#30dc30"/></g><g fill="none" stroke-width="2.3" stroke-linejoin="round"><path d="M318.6 1072.9L320.1 1072.2L321.7 1072L323.2 1070.8L324.8 1071.3L326.3 1071.2L327.9 1070.6L329.4 1069L331 1069.5L332.6 1069.5L334.2 1069.4L335.7 1070.9L337.3 1071.8L338.9 1070.4L340.5 1071.6L342.1 1071.7L343.6 1071.4L345.2 1071.2L346.8 1072L348.4 1072.1L350 1072.7L351.5 1073.1L353.1 1072.3L354.7 1073.3L356.2 1074.4L357.7 1074.9L359.3 1074.6L360.8 1073.4L362.3 1073L363.9 1073.1L365.4 1075L367 1074.6L368.5 1074.7L370 1076L371.6 1075.5L373.1 1075.9L374.7 1075.9L376.2 1075.4L377.7 1076.3L379.3 1077.3L380.8 1076.5L382.4 1076.5L383.9 1076.9L385.4 1076.5L387 1077.4L389 1083.4L391 1088.5L393.7 1079.9L395.3 1080.5L396.9 1079.4L398.4 1079.7L400 1079.5L401.5 1079.9L403.1 1079.2L404.7 1080.2L406.2 1079.3L407.8 1079.1L409.4 1080.3L410.9 1081.1L412.5 1080.5L414 1080.2L415.7 1080.6L417.4 1081.3L419.1 1082.7L420.8 1083L422.5 1083.6L424.2 1085.1L425.9 1085.8L427.6 1087.6L429.3 1089.3L431 1090.5L432.7 1089.6L434.4 1088.7L436.1 1088.3L437.7 1087L439.4 1080.4L441.1 1072.4L442.8 1068.9L444.5 1065L446.2 1066.6L447.9 1068.2L449.6 1069.2L451.3 1071.2L453 1072.3L454.7 1072.6L456.2 1072.7L457.8 1073.6L459.3 1073.2L460.9 1073.2L462.4 1072.1L464 1072.5L465.5 1072.6L467.1 1072.5L468.6 1072.5L470.2 1072.8L471.7 1072.9L473.3 1072.8L474.8 1072.2L476.4 1072.4L477.9 1073.5L479.5 1073L481 1072L482.6 1071.4L484.2 1072.3L485.7 1071.7L487.3 1071.5L488.8 1071.4L490.4 1072.1L491.9 1073.5L493.6 1078.1L495.3 1083L496.8 1082.9L498.3 1083.1L499.8 1083.1L501.3 1083.7L502.8 1084.4L504.3 1084.3L505.8 1083.8L507.3 1084.1L508.8 1084.8L510.3 1083.7L511.8 1083.4L513.3 1084L514.9 1084.5L516.4 1084.7L517.9 1084.7L519.4 1085.3L520.9 1084.9L522.4 1085.4L523.9 1085.9L525.4 1085L526.9 1085.4L528.4 1085.3L529.9 1085.6L531.4 1084L532.9 1085L534.5 1085.1L536 1085.6L537.5 1085.8L539 1084.5L540.5 1084.6L542 1083.6L543.5 1084L545 1084.8L546.5 1083.7L548 1083.5L549.5 1082.9L551.1 1082.8L552.6 1082.8L554.1 1082.5L555.6 1084.2L557.1 1084.7L558.6 1084L560.1 1084.3L561.6 1084.3L563.1 1083.9L564.6 1083.5L566.2 1083.8L567.7 1083.7L569.2 1083L570.7 1082.9L572.2 1083.4L573.7 1083.5L575.2 1082.8L576.7 1083.2L578.2 1083.9L579.7 1084.2L581.3 1083.8L582.8 1082.5L584.3 1082.6L585.8 1081.9L587.3 1081.6L588.8 1081.8L590.3 1082.2L591.8 1083L593.3 1083.1L594.8 1082.4L596.3 1082.9L597.9 1082.7L599.4 1082.6L600.9 1082.1L602.4 1082.2L603.9 1082L605.4 1082.6L606.9 1082.4L608.4 1082.2L609.9 1082.2L611.4 1082.1L613 1082.5L614.5 1082.7L616 1083L617.5 1082.3L619 1082.7L620.5 1083.2L622 1083.5L623.5 1083L625 1081.5L626.5 1082.3L628.1 1082.7L629.6 1081.2L631.1 1081.1L632.6 1081L634.1 1081.8L635.8 1086L637.5 1089.4L639 1088.6L640.6 1088L642.2 1087.3L643.7 1088.2L645.3 1088.6L646.8 1087.2L648.4 1087.4L650 1087.7L651.5 1086.1L653.1 1085.9L654.7 1085.4L656.2 1085.9L657.8 1085.8L659.3 1084.2L660.8 1083.9L662.3 1085L663.8 1084.9L665.3 1084.8L666.8 1085.3L668.3 1085.5L669.9 1085.9L671.4 1084.9L672.9 1083.9L674.4 1084.7L675.9 1083.8L677.4 1084.4L678.9 1085.2L680.4 1084.7L681.9 1084.9L683.4 1084.1L684.9 1083.7L686.5 1084.4L688 1085.3L689.5 1085.9L691 1084.3L692.5 1085.3L694 1085L695.5 1084.5L697 1084.4L698.5 1084.7L700 1084.4L701.5 1083.8L703.1 1085L704.6 1085.2L706.1 1085.1L707.6 1085.3L709.1 1085.9L710.6 1084.6L712.1 1085.3L713.6 1085.6L715.1 1084.8L716.6 1084.8L718.1 1084.6L719.7 1084L721.2 1084.2L722.7 1083.8L724.2 1085.1L725.7 1084.2L727.2 1084.7L728.7 1084.8L730.2 1085.7L731.7 1085.7L733.2 1084.8L734.7 1084.5L736.3 1083.7L737.8 1083.3L739.3 1083.7L740.8 1085.1L742.3 1084L743.8 1083.7L745.3 1084.5L746.8 1084.3L748.3 1083.9L749.8 1085.2L751.3 1084L752.9 1084.5L754.4 1084.5L755.9 1084.3L757.4 1083.9L758.9 1083.6L760.4 1084L761.9 1084.9L763.4 1084.7L764.9 1085.2L766.4 1085.7L767.9 1084.5L769.5 1085.3L771 1085.1L772.5 1084.7L774 1084.7L775.5 1085.4L777 1084.8L778.5 1083.9L780 1085.2L781.5 1084.2L783 1083.6L784.6 1084.7L786.1 1084.3L787.6 1084.1L789.1 1084.8L790.7 1085.5L792.2 1084.8L793.7 1085.6L795.2 1085.4L796.8 1085.3L798.3 1085.1L799.8 1084L801.3 1083.8L802.8 1084.7L804.4 1085.2L805.9 1084.3L807.4 1084.9L808.9 1084.9L810.5 1085.1L812 1084.8L813.5 1085" stroke="#3f7be0" stroke-width="2.0999999999999996"/><path d="M318.6 1071.4L320.1 1071.7L321.6 1072.7L323.1 1072.3L324.6 1072.3L326.1 1072.6L327.6 1072L329.1 1072.5L330.6 1073L332.1 1073.7L333.6 1072.7L335.1 1072.8L336.6 1072.5L338.1 1073.9L339.6 1074.4L341.1 1073.4L342.6 1074.9L344.1 1075.7L345.6 1075.5L347.1 1075.4L348.6 1074.6L350.1 1074L351.6 1074.9L353.1 1074.4L354.6 1074.6L356.2 1074.9L357.7 1074.7L359.2 1075.6L360.7 1076L362.3 1077.1L363.8 1077.1L365.3 1077.4L366.8 1077.4L368.3 1077.8L369.9 1077.7L371.4 1077.3L372.9 1078.7L374.4 1079.5L376 1079.6L377.5 1079.5L379 1078.8L380.5 1078.4L382.1 1078.4L383.6 1078.1L385.1 1079.4L386.6 1079.4L388.2 1080.4L389.7 1080L391.2 1081.1L392.7 1081.5L394.2 1080L395.8 1079.9L397.3 1081.4L398.8 1081.2L400.3 1082.3L401.9 1081.7L403.4 1080.9L404.9 1081.8L406.4 1082.5L408 1082L409.5 1081.5L411 1081.8L412.5 1083.4L414 1083.7L415.7 1080.5L417.4 1078.2L419.1 1079L420.8 1079.9L422.5 1082.4L424.2 1083L425.7 1083.6L427.3 1083.7L428.8 1083.2L430.3 1084.2L431.8 1083.5L433.3 1084.2L434.9 1083.6L436.4 1083.9L437.9 1083.8L439.4 1083.8L441.1 1079L442.8 1073L444.4 1072.2L445.9 1073.1L447.4 1072.2L449 1072.2L450.5 1073.2L452.1 1073.3L453.6 1072.3L455.1 1073.7L456.7 1072.8L458.2 1072.6L459.7 1073.5L461.3 1073.1L462.8 1073L464.4 1072.5L465.9 1072.4L467.4 1073.3L469 1073.2L470.5 1073.9L472.1 1073.8L473.6 1073.9L475.1 1075.1L476.7 1074.7L478.2 1074.8L479.8 1075.4L481.3 1074.4L482.8 1074L484.4 1075.3L485.9 1075.8L487.4 1075L489 1074.5L490.5 1075.5L492.1 1076.4L493.6 1075.3L495.3 1080.7L497 1085.4L498.5 1085L500 1084.5L501.5 1083.6L503 1083.1L504.5 1084.7L506 1084L507.5 1084.6L509 1084L510.5 1084.9L512 1084.8L513.5 1084.2L515.1 1083.7L516.6 1084.6L518.1 1083.7L519.6 1083.6L521.1 1084.2L522.6 1085.1L524.1 1085L525.6 1084.3L527.1 1085.3L528.6 1084.3L530.1 1083.5L531.6 1083.6L533.1 1084L534.6 1083.5L536.1 1083.5L537.6 1083.8L539.1 1084.4L540.6 1083.8L542.2 1084L543.7 1085.1L545.2 1085.8L546.7 1085.5L548.2 1085.4L549.7 1085.2L551.2 1084.2L552.7 1083.6L554.2 1083.3L555.7 1084.9L557.2 1085.2L558.7 1085.9L560.2 1084.3L561.7 1084.8L563.2 1084.8L564.7 1085.2L566.2 1084.7L567.7 1085.7L569.3 1084.4L570.8 1084.7L572.3 1085.3L573.8 1085.8L575.3 1085.8L576.8 1085.7L578.3 1085.8L579.8 1086.1L581.3 1085.2L582.8 1085.4L584.3 1085.9L585.8 1086.1L587.3 1085.3L588.8 1085.7L590.3 1086L591.8 1085.6L593.3 1085.5L594.8 1085L596.4 1085.2L597.9 1085.3L599.4 1084.3L600.9 1085L602.4 1086L603.9 1086.3L605.4 1086.1L606.9 1085.3L608.4 1085.7L609.9 1085.5L611.4 1085.2L612.9 1085.8L614.4 1084.6L615.9 1085.4L617.4 1084.4L618.9 1085L620.4 1085.1L621.9 1084.6L623.5 1085.3L625 1085.3L626.5 1085.5L628 1086.2L629.5 1085.2L631 1084.3L632.5 1084.4L634 1085.3L635.5 1084.7L637 1084.4L638.5 1085.7L640 1085.8L641.5 1085.4L643 1086.2L644.5 1085.4L646 1085.7L647.5 1084.9L649 1085.1L650.6 1085.9L652.1 1086.4L653.6 1086.6L655.1 1085.8L656.6 1085.8L658.1 1085.2L659.6 1084.6L661.1 1085.1L662.6 1086L664.1 1086.4L665.6 1086.3L667.1 1086.8L668.6 1085.7L670.1 1084.9L671.6 1085.2L673.1 1085L674.6 1084.7L676.1 1085L677.7 1085.6L679.2 1085.6L680.7 1085.2L682.2 1086.1L683.7 1086.8L685.2 1086.1L686.7 1085L688.2 1084.5L689.7 1085.9L691.2 1084.9L692.7 1085.7L694.2 1085.9L695.7 1085.4L697.2 1086.2L698.7 1085L700.2 1084.7L701.7 1085.2L703.2 1084.6L704.8 1085.9L706.3 1085.3L707.8 1084.9L709.3 1084.5L710.8 1085.5L712.3 1085.6L713.8 1086L715.3 1086.2L716.8 1086.6L718.3 1087.1L719.8 1086.8L721.3 1085.7L722.8 1085.8L724.3 1085.2L725.8 1084.7L727.3 1085.3L728.8 1086.1L730.3 1085.4L731.9 1085.3L733.4 1085.4L734.9 1086.1L736.4 1086.1L737.9 1086.3L739.4 1086.7L740.9 1086.1L742.4 1086.7L743.9 1087.1L745.4 1085.7L746.9 1086.8L748.4 1086.9L749.9 1085.7L751.4 1085.9L752.9 1086.3L754.4 1087L755.9 1086.3L757.4 1086.4L759 1087L760.5 1087.2L762 1087.5L763.5 1086.7L765 1086.7L766.5 1085.9L768 1086.5L769.5 1087L771 1086.9L772.5 1087L774 1086L775.5 1087L777 1087.6L778.5 1087.8L780 1087.1L781.5 1087.2L783 1086.4L784.6 1087.1L786.1 1087.4L787.6 1086.4L789.1 1085.5L790.7 1085.7L792.2 1086L793.7 1086.6L795.2 1086.3L796.8 1085.2L798.3 1086.2L799.8 1085.2L801.3 1086.2L802.8 1085.4L804.4 1085.3L805.9 1086.2L807.4 1085.2L808.9 1084.8L810.5 1085.3L812 1086L813.5 1085.7" stroke="#3f7be0" stroke-width="2.0999999999999996"/><path d="M318.6 1074.5L320.1 1074.2L321.7 1073.8L323.2 1072.7L324.8 1071.8L326.3 1071.6L327.9 1071.1L329.4 1071.3L331.1 1072L332.8 1072.5L334.5 1073L336.2 1073.7L337.9 1073.6L339.6 1074.3L341.1 1073.9L342.6 1074.8L344.1 1074L345.6 1074.7L347.1 1074L348.6 1074.5L350.1 1074.3L351.6 1074.3L353.1 1074.9L354.8 1074.2L356.5 1074L358.2 1075.2L359.9 1075.3L361.6 1074.8L363.3 1075.9L366 1068.5L368.3 1077.7L369.9 1077.9L371.5 1077.7L373 1078L374.6 1078.6L376.1 1078.4L377.7 1079.1L379.2 1078.7L380.8 1078.8L382.3 1079.8L383.9 1079.8L385.4 1079.9L387 1080.3L388.5 1080.4L390.1 1080.4L391.7 1080L393.2 1080.9L394.8 1081.6L396.3 1082.1L397.9 1082L399.5 1081.6L401 1081.5L402.6 1082L404.2 1082.3L405.7 1081.8L407.3 1081.8L408.8 1082.2L410.3 1082.9L411.8 1083.7L413.3 1083.9L414.8 1083.6L416.3 1084.7L417.8 1084.9L419.3 1085.3L420.8 1085.3L422.4 1085.5L423.9 1085.5L425.4 1086.1L427 1085.5L428.5 1085.9L430.1 1085.6L431.6 1086.1L433.1 1085.6L434.7 1085.7L436.2 1085.8L437.7 1086.3L440.5 1073.9L442.5 1071.6L444.5 1068.9L446.2 1069.9L447.9 1071.2L449.6 1072.9L451.3 1073.7L453 1075.2L454.7 1075.4L456.2 1075.9L457.7 1075.4L459.3 1074.8L460.8 1075.3L462.4 1075.7L463.9 1074.6L465.4 1074.4L467 1074.9L468.5 1074.5L470.1 1074.2L471.6 1073.7L473.2 1073.5L474.7 1074.2L476.3 1075L477.8 1075.4L479.4 1074.9L481 1074L482.5 1074.1L484.1 1074.7L485.7 1075L487.2 1074.9L488.8 1074.3L490.3 1074.5L491.9 1074.4L493.6 1080.2L495.3 1085.4L496.8 1086.2L498.3 1086.5L499.8 1085.7L501.3 1085.5L502.8 1086.2L504.3 1085.8L505.8 1086.5L507.3 1086.2L508.8 1086.4L510.3 1086.5L511.8 1085.9L513.3 1085.8L514.9 1085.7L516.4 1086.2L517.9 1086.5L519.4 1085.9L520.9 1086.7L522.4 1086.4L523.9 1086.1L525.5 1086.2L527 1087L528.5 1086.8L530.1 1086.8L531.6 1087.2L533.1 1087.5L534.7 1087.3L536.2 1086.9L537.8 1086.9L539.3 1087.3L540.8 1087.4L542.4 1087.1L543.9 1086.8L545.5 1086.6L547 1087.1L548.5 1087.1L550.1 1086.3L551.6 1087L553.2 1087.5L554.7 1087.6L556.2 1087.8L557.8 1087.9L559.3 1087.4L560.8 1087.5L562.4 1087L563.9 1086.4L565.5 1086.4L567 1086.4L568.5 1087.2L570.1 1087.2L571.6 1087L573.2 1087L574.7 1086.3L576.2 1086.5L577.8 1086.8L579.3 1086.5L580.8 1086.2L582.4 1086.2L583.9 1086.1L585.5 1086.5L587 1086L588.5 1085.6L590.1 1085.8L591.6 1086.3L593.2 1086.6L594.7 1086.6L596.2 1087L597.8 1086.3L599.3 1085.6L600.9 1085.9L602.4 1085.9L603.9 1085.6L605.5 1086L607 1085.8L608.5 1085.5L610.1 1085.5L611.6 1086.3L613.2 1085.4L614.7 1085.5L616.2 1085.4L617.8 1085.2L619.3 1085.4L620.9 1085.2L622.4 1086L623.9 1085.8L625.6 1085.5L627.3 1084.5L629 1084.1L630.7 1083.9L632.4 1083.9L634.1 1082.8L635.8 1083.9L637.5 1085.4L639.2 1086.6L640.9 1086.9L642.4 1087L643.9 1087.4L645.5 1087L647 1087.3L648.6 1087.3L650.1 1087.8L651.6 1087.4L653.2 1087.4L654.7 1087L656.2 1087.3L657.8 1086.9L659.3 1087L660.9 1086.8L662.4 1086.7L663.9 1086.4L665.5 1086.4L667 1086.8L668.6 1086.6L670.1 1086.2L671.6 1087.1L673.2 1086.8L674.7 1087.5L676.3 1087.4L677.8 1087L679.3 1087.5L680.9 1087.8L682.4 1087.1L683.9 1086.6L685.5 1087L687 1087.5L688.6 1087.4L690.1 1087.6L691.6 1087.1L693.2 1087.3L694.7 1086.9L696.3 1086.9L697.8 1086.9L699.3 1087L700.9 1087L702.4 1087.6L703.9 1087.1L705.5 1086.9L707 1086.9L708.6 1087.9L710.1 1087.8L711.6 1087.1L713.2 1087.9L714.7 1088.3L716.3 1088.4L717.8 1087.9L719.3 1088.2L720.9 1087.8L722.4 1087.4L724 1088.2L725.5 1088.6L727 1087.9L728.6 1088.6L730.1 1087.7L731.6 1087.8L733.2 1087.4L734.7 1087.5L736.3 1087.5L737.8 1088.3L739.3 1088.1L740.9 1088L742.4 1087.9L744 1088L745.5 1088.9L747 1088.9L748.6 1088.3L750.1 1088.8L751.6 1088.9L753.2 1088.8L754.7 1088.9L756.3 1089.2L757.8 1089.5L759.3 1089.3L760.9 1088.9L762.4 1088.3L764 1088.1L765.5 1087.4L767 1086.9L768.6 1086.6L770.1 1086.5L771.7 1085.7L773.2 1085.9L774.7 1085.3L776.3 1085.2L778 1086L779.7 1087.2L781.3 1087.8L783 1088.2L784.6 1087.9L786.1 1088.1L787.6 1088.3L789.1 1088.5L790.7 1087.6L792.2 1087.1L793.7 1086.9L795.2 1086.7L796.8 1086.6L798.3 1086.4L799.8 1086.7L801.3 1086.5L802.8 1087.2L804.4 1087.4L805.9 1087.9L807.4 1088.1L808.9 1087.9L810.5 1088L812 1086.9L813.5 1087" stroke="#30dc30"/></g></svg>
</div></div>
<div class="abs" style="left:783px;top:510px;width:1136px;height:775px;background:#fff"></div><div class="abs" style="left:783px;top:510px;width:4px;height:775px;background:linear-gradient(to right,#0019cf 0,#0a3cdc 35%,#1652e8 100%)"></div><div class="abs" style="left:1915px;top:510px;width:4px;height:775px;background:linear-gradient(to right,#1652e8 0,#0a3cdc 50%,#0019cf 80%,#00138f 100%)"></div><div class="abs" style="left:783px;top:1281px;width:1136px;height:4px;background:linear-gradient(to bottom,#1652e8 0,#0a3cdc 40%,#0019cf 70%,#00138f 100%)"></div><div class="tb" style="left:783px;top:502px;width:1136px;height:29px;border-radius:7px 7px 0 0"></div><svg class="abs" style="left:789px;top:509.8px" width="15.4" height="15.4" viewBox="0 0 16 16"><rect x="0" y="0" width="16" height="16" fill="#fcfcf6"/><path d="M3.6 13.6V3.2H5.9L8 7.6L10.1 3.2H12.6V13.6" fill="none" stroke="#3a9c3a" stroke-width="2.7" stroke-linejoin="miter"/><path d="M3.7 13V3.6M12.5 13V3.6M8 4V7" stroke="#8ed88e" stroke-width="0.9"/><path d="M2.2 14.2H5M11.2 14.2H14M12.6 1.7H14.2M1.8 1.7H3" stroke="#e89a4a" stroke-width="1.1"/></svg><div class="ttl" style="left:807.5px;top:510.6px;letter-spacing:0.16px">Run 5 - 20100910_10_102CLEAN  [10.00 - 102.60]<span style="letter-spacing:-0.11px"> compared to 3 earlier runs.</span></div><div class="cb dis" style="left:1849px;top:508px"><svg width="19" height="19" viewBox="0 0 19 19"><rect x="4" y="12" width="7" height="3" fill="#8fb0f0"/></svg></div><div class="cb" style="left:1871px;top:508px"><svg width="19" height="19" viewBox="0 0 19 19"><rect x="4.5" y="4.5" width="10" height="10" fill="none" stroke="#fff" stroke-width="1.4"/><rect x="4" y="4" width="11" height="3" fill="#fff"/></svg></div><div class="cb x" style="left:1893px;top:508px"><svg width="19" height="19" viewBox="0 0 19 19"><path d="M5 5L14 14M14 5L5 14" stroke="#fff" stroke-width="1.9" stroke-linecap="square"/></svg></div><div class="btn" style="left:787.6px;top:531.8px"><svg width="26" height="26" viewBox="0 0 26 26" style="left:-1px;top:-1px"><path d="M7.5 9L10 3.8H19L17.3 9Z" fill="#fff" stroke="#222" stroke-width="1"/><path d="M10.2 5.8H17.3M9.6 7.4H16.8" stroke="#777" stroke-width=".7"/><rect x="4.6" y="8.8" width="16.6" height="6.6" rx="2.2" fill="#dcdcdc" stroke="#222" stroke-width="1.1"/><rect x="6" y="13.2" width="13.8" height="3.2" rx="1.2" fill="#f4f4f4" stroke="#222" stroke-width="1"/><path d="M7 14.9H18.8" stroke="#cdb800" stroke-width="1.3"/><path d="M6.6 18.2H19.2" stroke="#222" stroke-width="1.6" stroke-linecap="round"/></svg></div><div class="btn" style="left:814.5px;top:531.8px"><svg width="26" height="26" viewBox="0 0 26 26" style="left:-1px;top:-1px"><path d="M4.8 13L14.8 4.6V21.4Z" fill="#000"/><rect x="16.8" y="4.6" width="3.2" height="16.8" fill="#000"/></svg></div><div class="btn" style="left:841.4px;top:531.8px"><svg width="26" height="26" viewBox="0 0 26 26" style="left:-1px;top:-1px"><path d="M7 13L16.3 4.6V21.4Z" fill="#000"/></svg></div><div class="btn" style="left:868.3px;top:531.8px"><svg width="26" height="26" viewBox="0 0 26 26" style="left:-1px;top:-1px"><path d="M17.9 13L8.5 4.6V21.4Z" fill="#000"/></svg></div><div class="btn" style="left:895.2px;top:531.8px"><svg width="26" height="26" viewBox="0 0 26 26" style="left:-1px;top:-1px"><rect x="4.3" y="4.6" width="3.4" height="16.8" fill="#000"/><path d="M20.9 13L11.4 4.6V21.4Z" fill="#000"/></svg></div><div class="btn" style="left:922.1px;top:531.8px"><svg width="26" height="26" viewBox="0 0 26 26" style="left:-1px;top:-1px"><rect x="2.9" y="3" width="19" height="13.6" fill="#fff" stroke="#222" stroke-width="1.2"/><rect x="9.8" y="16.6" width="4.6" height="7.4" fill="#fff" stroke="#222" stroke-width="1"/><text x="12.4" y="14.2" font-family="Liberation Sans,sans-serif" font-size="11.6" text-anchor="middle" fill="#111">32</text></svg></div><div class="btn" style="left:949.0px;top:531.8px"><svg width="26" height="26" viewBox="0 0 26 26" style="left:-1px;top:-1px"><circle cx="9.6" cy="10.2" r="7" fill="#e2e2de" stroke="#111" stroke-width="1.5"/><path d="M9.6 5.8V14.6M5.2 10.2H14" stroke="#000" stroke-width="2.6"/><path d="M15 15.6L21.4 22" stroke="#111" stroke-width="3.4" stroke-linecap="round"/><path d="M15.6 16.2L21 21.6" stroke="#c8c8c8" stroke-width="1.1" stroke-linecap="round"/></svg></div><div class="btn" style="left:975.9px;top:531.8px"><svg width="26" height="26" viewBox="0 0 26 26" style="left:-1px;top:-1px"><circle cx="9.6" cy="10.2" r="7" fill="#e2e2de" stroke="#111" stroke-width="1.5"/><path d="M5.2 10.2H14" stroke="#000" stroke-width="2.6"/><path d="M15 15.6L21.4 22" stroke="#111" stroke-width="3.4" stroke-linecap="round"/><path d="M15.6 16.2L21 21.6" stroke="#c8c8c8" stroke-width="1.1" stroke-linecap="round"/></svg></div><div class="btn" style="left:1002.8px;top:531.8px"><svg width="26" height="26" viewBox="0 0 26 26" style="left:-1px;top:-1px"><rect x="3.9" y="4.6" width="16.2" height="19.4" fill="#fff" stroke="#111" stroke-width="1.3"/><path d="M12.5 7.5H20M15.5 10H20M12.5 12.5H20M15.5 15H20M12.5 17.5H20M15.5 20H20M9.5 22.3H20" stroke="#111" stroke-width="1.1"/></svg></div><div class="btn" style="left:1029.7px;top:531.8px"><svg width="26" height="26" viewBox="0 0 26 26" style="left:-1px;top:-1px"><path d="M5.50 2.8 H13.30 Q15.50 2.8 15.50 5 V7 Q15.50 9.1 13.30 9.1 H11.80 Q11.00 9.1 11.00 10 V17.5 Q11.00 19 12.50 19.2 L15.50 20 Q17.30 20.8 17.30 22 V23.4 H1.40 V22 Q1.40 20.8 3.20 20 L6.90 19.2 Q8.40 19 8.40 17.5 V10 Q8.40 9.1 7.60 9.1 H5.50 Q3.30 9.1 3.30 7 V5 Q3.30 2.8 5.50 2.8 Z" fill="#000"/><rect x="19" y="1" width="4.4" height="23.5" fill="#f6f6f2"/><path d="M20.8 1.5V24" stroke="#333" stroke-width="1" stroke-dasharray="1.2 2.2"/></svg></div><div class="btn" style="left:1056.6px;top:531.8px"><svg width="26" height="26" viewBox="0 0 26 26" style="left:-1px;top:-1px"><path d="M7.90 2.8 H15.70 Q17.90 2.8 17.90 5 V7 Q17.90 9.1 15.70 9.1 H14.20 Q13.40 9.1 13.40 10 V17.5 Q13.40 19 14.90 19.2 L17.90 20 Q19.70 20.8 19.70 22 V23.4 H3.80 V22 Q3.80 20.8 5.60 20 L9.30 19.2 Q10.80 19 10.80 17.5 V10 Q10.80 9.1 10.00 9.1 H7.90 Q5.70 9.1 5.70 7 V5 Q5.70 2.8 7.90 2.8 Z" fill="#000"/><path d="M5.5 5.8Q12 9 14.5 12.5Q17 16 18.8 19M19.2 5.8Q13 9 10.8 12.5Q8.5 16 6.2 18.5" stroke="#e8161a" stroke-width="2.4" stroke-linecap="round" fill="none"/></svg></div>
<svg class="abs" style="left:0;top:0" width="1920" height="1286" viewBox="0 0 1920 1286" font-family="Liberation Sans,sans-serif" fill="#000"><defs><clipPath id="pc"><rect x="787" y="558" width="1128" height="723"/></clipPath></defs><g clip-path="url(#pc)"><g fill="none" stroke="#b9b9b9" stroke-width="1"><path d="M852.3 823.1C852.5 821.4 852.6 815.9 853.7 813C854.8 810.1 856.9 807.5 859 805.5C861.1 803.5 862.6 803 866.1 801.2C869.6 799.5 874.8 796.8 880 795C885.2 793.2 890 791.6 897.5 790.3C905 789 915.3 788 925 787.3C934.7 786.6 943.4 786 955.8 785.9C968.2 785.8 987.5 785.5 999.6 786.4C1011.8 787.2 1021.6 789.3 1028.7 791C1035.8 792.7 1038.3 794.3 1042 796.5C1045.7 798.7 1048.2 801.5 1050.6 804.2C1053 807 1055 809.9 1056.5 813C1058 816.1 1058.6 818.3 1059.4 823.1C1060.2 827.9 1061 835.4 1061.5 842C1062 848.6 1062.2 856.8 1062.3 862.5C1062.4 868.2 1062.2 872.1 1062 876C1061.8 879.9 1061.6 882.9 1060.8 885.8C1060 888.7 1058.7 891.3 1057 893.5C1055.3 895.7 1053.1 897.6 1050.6 899C1048.1 900.4 1045.2 901 1042 902C1038.8 903 1036.3 903.4 1031.7 904.8C1027.1 906.2 1018.6 908.7 1014.2 910.6C1009.8 912.5 1007.9 914 1005.5 916C1003.1 918 1001.5 919.6 999.6 922.3C997.7 925 995.5 928.2 994 932C992.5 935.8 991.9 940.3 990.8 945C989.7 949.7 988.2 955 987.5 960C986.8 965 986.8 963.2 986.4 975C986 986.8 985.4 1014.1 985.4 1030.8C985.4 1047.5 985.8 1061.6 986.3 1075C986.8 1088.4 987.6 1097.7 988.6 1111C989.6 1124.3 990.8 1141.6 992.5 1155C994.2 1168.4 996.9 1182.1 998.7 1191.3C1000.5 1200.5 1001.8 1204.7 1003.5 1210C1005.2 1215.3 1006.8 1219.4 1009 1223C1011.2 1226.6 1012.4 1228.5 1016.7 1231.4C1021 1234.3 1027.6 1237.8 1035 1240.5C1042.4 1243.2 1046.7 1244.3 1060.9 1247.5C1075.1 1250.7 1101.2 1255.8 1120 1259.5C1138.8 1263.2 1164 1267.2 1174 1269.5C1184 1271.8 1178.7 1271.1 1180 1273C1181.3 1274.9 1181.7 1279.7 1182 1281"/><path d="M852.3 823.1C852.4 829.2 852.6 848.9 852.8 860C852.9 871.1 852.8 883.7 853.2 890C853.7 896.3 854 895.8 855.5 898C857 900.2 858.8 901.5 862 903C865.2 904.5 870.6 905.8 875 907C879.4 908.2 883.6 909.1 888.3 910.4C893 911.6 899 912.8 903 914.5C907 916.2 909.5 917.4 912.4 920.5C915.3 923.6 918.1 928 920.5 933C922.9 938 924.8 944.1 926.5 950.6C928.2 957.1 929.5 964.6 930.5 972C931.5 979.4 931.8 984.2 932.5 994.7C933.2 1005.2 934.3 1022.3 934.8 1035C935.3 1047.7 935.6 1058.2 935.7 1071C935.8 1083.8 935.8 1098.6 935.6 1112C935.4 1125.4 934.9 1139.9 934.5 1151.2C934.1 1162.5 933.7 1171.3 933 1180C932.3 1188.7 931.8 1196.7 930.5 1203.4C929.2 1210.1 927.9 1215.3 925.5 1220C923.1 1224.7 921 1227.7 916.4 1231.4C911.8 1235.2 905.4 1239.2 898 1242.5C890.6 1245.8 881.1 1248.9 872.3 1251.5C863.5 1254.1 853.5 1256 845 1258C836.5 1260 830.7 1260.6 821 1263.5C811.3 1266.4 792.7 1273.5 787 1275.5"/><path d="M1627.7 886.7C1627.7 879.9 1627.4 857.3 1627.4 845.8C1627.4 834.4 1627.3 824.7 1627.7 818.1C1628.1 811.6 1628.4 810.1 1629.9 806.5C1631.4 802.8 1633.9 798.9 1636.5 796.3C1639 793.6 1641.6 792.1 1645.2 790.4C1648.9 788.7 1653.7 787.3 1658.3 786C1663 784.8 1668.1 783.9 1672.9 783.1C1677.8 782.3 1681.4 781.8 1687.5 781.4C1693.6 780.9 1702.1 780.7 1709.4 780.5C1716.7 780.3 1724 780.2 1731.3 780.2C1738.5 780.2 1745.8 780.2 1753.1 780.4C1760.4 780.5 1768.7 780.5 1775 780.9C1781.3 781.4 1786.2 782 1791 782.8C1795.9 783.7 1800 784.7 1804.2 786C1808.3 787.4 1812.4 789 1815.8 790.7C1819.2 792.4 1822.2 794.5 1824.6 796.3C1827 798 1829 799.7 1830.4 801.4C1831.9 803.1 1832.6 804.6 1833.3 806.5C1834.1 808.3 1834.7 810.3 1835.1 812.3C1835.5 814.2 1835.4 812.5 1835.5 818.1C1835.7 823.7 1835.9 835.4 1836 845.8C1836 856.3 1836.1 874.2 1836 880.8C1835.8 887.5 1835.5 884.5 1835.1 885.9C1834.7 887.4 1834.6 888.4 1833.3 889.6C1832.1 890.7 1829.9 891.8 1827.5 892.8C1825.1 893.8 1822.2 894.5 1818.8 895.4C1815.4 896.3 1810.7 897.4 1807.1 898.3C1803.4 899.3 1800.2 900.1 1796.9 901.3C1793.6 902.4 1790.3 903.7 1787.4 905.2C1784.5 906.6 1781.7 908.1 1779.4 910C1777.1 911.9 1775.2 914.1 1773.5 916.6C1771.8 919 1770.5 921.8 1769.2 924.6C1767.8 927.4 1766.9 927 1765.5 933.3C1764.2 939.7 1762.1 954 1761 962.6C1759.9 971.2 1759.3 977 1758.8 985C1758.3 993 1758.2 997.4 1758.2 1010.7C1758.2 1024 1758.5 1048.3 1759 1065C1759.5 1081.7 1760.2 1096.8 1761 1111C1761.8 1125.2 1762.5 1138.6 1763.5 1150C1764.5 1161.4 1765.6 1170.5 1767 1179.3C1768.4 1188.1 1769.7 1196.3 1772 1203C1774.3 1209.7 1777.3 1214.7 1781 1219.4C1784.7 1224.2 1788.7 1228.2 1794 1231.5C1799.3 1234.8 1802 1236.5 1813 1239.5C1824 1242.5 1843.2 1246 1860 1249.5C1876.8 1253 1905 1258.7 1914 1260.5"/><path d="M1627.7 886.7C1628.1 887.5 1628.9 890.3 1629.9 891.8C1630.9 893.2 1631.8 894.3 1633.5 895.4C1635.2 896.6 1637.7 897.7 1640.1 898.6C1642.5 899.6 1644.8 900.5 1648.1 901.3C1651.4 902.1 1656.1 902.7 1659.8 903.4C1663.4 904.2 1667 904.7 1670 905.6C1673 906.6 1675.6 907.8 1678 909.3C1680.5 910.7 1682.5 912.4 1684.6 914.4C1686.7 916.3 1688.7 918.8 1690.4 920.9C1692.1 923.1 1693.5 925.3 1694.8 927.5C1696.1 929.7 1696.3 930.2 1698 934.1C1699.7 937.9 1703.2 942.9 1704.8 950.6C1706.4 958.3 1707.1 970 1707.8 980C1708.5 990 1708.7 994.9 1708.8 1010.7C1708.9 1026.5 1708.9 1054.9 1708.6 1075C1708.3 1095.1 1707.5 1115.3 1706.8 1131.1C1706.1 1146.9 1705.5 1159.3 1704.5 1170C1703.5 1180.7 1702.2 1188.3 1700.8 1195.3C1699.4 1202.3 1698 1207.3 1696 1212C1694 1216.7 1691.6 1220.2 1688.8 1223.4C1686 1226.7 1683 1229.2 1679 1231.5C1675 1233.8 1677.9 1233.8 1664.7 1237.5C1651.5 1241.2 1622.3 1248 1600 1253.5C1577.7 1259 1543.5 1267.1 1531 1270.5C1518.5 1273.9 1526.4 1272.2 1525 1274C1523.6 1275.8 1522.9 1279.8 1522.5 1281"/></g><g fill="none" stroke="#c8102e" stroke-width="2.5"><path d="M846.6 818.5V801.6H864"/><path d="M1009 801.6H1027.2V818.5"/><path d="M846.6 905V922.6H864"/><path d="M1009 922.6H1027.2V905"/></g><g fill="none" stroke-width="1" stroke-linejoin="round"><path d="M852.3 903.3C852.2 899 851.8 888.3 851.7 877.1C851.6 865.9 851.5 844.8 851.6 836.3C851.7 827.7 851.9 829 852.3 826C852.7 823.1 853.1 821 853.8 818.8C854.4 816.5 855.4 814.3 856.4 812.6C857.3 810.9 858.4 809.8 859.6 808.5C860.8 807.3 862.2 806.2 863.7 805.3C865.1 804.5 866.1 804 868.3 803.4C870.6 802.8 874.2 802.1 877.1 801.7C880 801.3 882.2 801.1 885.8 801C889.5 800.9 894.6 801 899 801.1C903.3 801.2 907.5 801.3 912.1 801.5C916.7 801.8 921.8 802.3 926.7 802.7C931.5 803.1 936.9 803.5 941.3 804.2C945.6 804.8 949.3 805.6 952.9 806.5C956.6 807.4 959.7 808.3 963.1 809.3C966.5 810.3 970.2 811.4 973.3 812.5C976.5 813.6 979.5 814.7 982.1 815.8C984.6 817 986.7 818 988.6 819.2C990.6 820.4 992.3 821.7 993.8 823.1C995.2 824.6 996.1 826.1 997.1 827.8C998.1 829.5 998.4 830.5 999.6 833.3C1000.7 836.2 1002.5 840.6 1004 845C1005.4 849.4 1006.6 855.2 1008.3 859.6C1010 864 1012 866.9 1014.2 871.3C1016.4 875.6 1019 881.2 1021.5 885.8C1023.9 890.5 1026.9 895.8 1028.8 899C1030.6 902.1 1031.8 903.8 1032.4 904.8" stroke="#5a8fe0"/><path d="M853 900.4C852.9 896.5 852.7 887.8 852.6 877.1C852.5 866.4 852.2 844.4 852.3 836.3C852.4 828.1 852.8 830.7 853.3 828.2C853.8 825.8 854.5 823.5 855.2 821.7C856 819.8 856.9 818.5 857.8 817.3C858.8 816.1 859.3 815.3 861 814.4C862.8 813.4 865.2 812.5 868.3 811.5C871.5 810.4 875.1 808.8 880 808.3C884.9 807.7 890.7 808 897.5 808.3C904.3 808.5 913.5 809.1 920.8 810C928.1 810.9 934.2 812.1 941.3 813.6C948.3 815.2 957.1 817.4 963.1 819.5C969.2 821.5 973.6 823.7 977.7 826C981.8 828.4 985.2 830.9 987.9 833.3C990.6 835.8 992.1 837.2 993.8 840.6C995.5 844 996.9 849.6 998.1 853.8C999.3 857.9 999.6 861.5 1001 865.4C1002.5 869.3 1004.7 873 1006.9 877.1C1009.1 881.2 1011.7 886.1 1014.2 890.2C1016.6 894.3 1019 898.2 1021.5 901.9C1023.9 905.5 1026.9 909.7 1028.8 912.1C1030.6 914.5 1031.8 915.7 1032.4 916.5" stroke="#5a8fe0"/><path d="M1028.8 912.1L1032.4 916.5L1030.2 919.4L1028.8 915.7" stroke="#5a8fe0"/><path d="M854.5 903.3C854.3 901.4 853.7 896 853.5 891.7C853.2 887.3 853.2 886.3 853 877.1C852.8 867.8 852.3 844.4 852.3 836.3C852.3 828.1 852.7 830.7 853 828.2C853.4 825.8 853.9 823.5 854.5 821.7C855.1 819.8 855.8 818.5 856.7 817.3C857.5 816.1 858.1 815.6 859.6 814.4C861 813.2 863 811.2 865.4 810C867.8 808.8 869.3 807.7 874.2 807.4C879 807 886.8 807.4 894.6 807.8C902.4 808.2 913.1 808.8 920.8 809.7C928.6 810.6 934.2 811.6 941.3 813.2C948.3 814.8 957.1 817.1 963.1 819.5C969.2 821.9 973.6 824.7 977.7 827.5C981.8 830.3 985.5 833.1 987.9 836.3C990.4 839.4 991.1 842.6 992.3 846.5C993.5 850.3 994 855 995.2 859.6C996.4 864.2 997.6 869.3 999.6 874.2C1001.5 879 1004.4 884.4 1006.9 888.8C1009.3 893.1 1012 896.8 1014.2 900.4C1016.4 904.1 1018.8 908.2 1020 910.6C1021.2 913.1 1021.2 914.3 1021.5 915" stroke="#c8203c"/><path d="M1021.5 915L1016.4 916.5" stroke="#c8203c"/></g><circle cx="992.3" cy="851.1" r="2" fill="#fff" stroke="#333" stroke-width="1"/><text x="869" y="808.8" font-size="8.6" text-anchor="end" fill="#5a8fe0" letter-spacing="0.8">Mar 2009</text><text x="869" y="821.3" font-size="8.6" text-anchor="end" fill="#5a8fe0" letter-spacing="0.8">Oct 2009</text><text x="869" y="833.8" font-size="8.6" text-anchor="end" fill="#5a8fe0" letter-spacing="0.8">Apr 2010</text><g fill="none" stroke-width="1" stroke-linejoin="round"><path d="M1629.9 896.9L1628.7 872.1L1628.4 851.7L1627.7 845.8" stroke="#5a8fe0"/><path d="M1627.7 845.8C1626.5 845.6 1621.8 845.3 1620.4 844.4C1619 843.4 1619.5 841.5 1619.4 840C1619.3 838.5 1619.3 837.1 1619.7 835.6C1620.1 834.2 1621 832.6 1621.9 831.3C1622.7 829.9 1623.5 828.9 1624.8 827.6C1626.1 826.3 1628 824.9 1629.9 823.7C1631.8 822.5 1633.7 821.5 1636.5 820.3C1639.3 819.1 1643 817.8 1646.7 816.7C1650.3 815.6 1654 814.5 1658.3 813.8C1662.7 813 1668.1 812.7 1672.9 812.3C1677.8 811.9 1682.6 811.7 1687.5 811.6C1692.4 811.4 1697.2 811.3 1702.1 811.3C1706.9 811.2 1711.8 811.2 1716.7 811.1C1721.5 811 1726.4 810.7 1731.3 810.5C1736.1 810.4 1740.4 810.2 1745.8 810.1C1751.3 810 1758 810.1 1764.1 810.1C1770.1 810.1 1776.1 810.2 1782.3 810.1C1788.5 810 1795.2 809.7 1801.3 809.5C1807.3 809.4 1813.9 809.2 1818.8 809.1C1823.6 809 1827 809 1830.4 809.1C1833.8 809.1 1837.3 809 1839.2 809.4C1841 809.8 1840.9 810.6 1841.4 811.6C1841.8 812.5 1842.5 813.9 1842.1 815.2C1841.7 816.5 1839.7 818.9 1839.2 819.6" stroke="#5a8fe0"/><path d="M1839.2 819.6L1838.7 851.7L1838.4 883.8" stroke="#5a8fe0"/><path d="M1621.9 831.3C1623.5 829.8 1627.7 824.9 1631.4 822.5C1635 820.1 1639.3 818.3 1643.8 816.7C1648.2 815 1653.5 813.8 1658.3 812.7C1663.2 811.6 1667.6 810.9 1672.9 810.1C1678.3 809.3 1684.3 808.5 1690.4 807.9C1696.5 807.3 1703.1 806.8 1709.4 806.5C1715.7 806.1 1722.3 806 1728.3 805.9C1734.4 805.8 1739.3 805.7 1745.8 805.7C1752.4 805.7 1760.4 805.8 1767.7 805.9C1775 805.9 1782.3 806.1 1789.6 806.2C1796.9 806.2 1804.2 806.3 1811.5 806.3C1818.8 806.4 1829 806.3 1833.3 806.5C1837.7 806.6 1836.7 806.9 1837.7 807.2C1838.7 807.5 1838.9 807.6 1839.2 808.2C1839.5 808.9 1839.5 810.2 1839.5 811.1C1839.5 812 1839.2 813.3 1839.2 813.8" stroke="#5a8fe0"/><path d="M1629.2 894L1627.4 886.7L1626.7 872.1L1626.3 851.7" stroke="#c8203c"/><path d="M1626.3 851.7C1624.9 850.7 1619.6 847.5 1618.2 845.8C1616.9 844.1 1618 842.9 1618.1 841.5C1618.2 840 1618.5 838.6 1619 837.1C1619.4 835.6 1620 833.9 1620.7 832.4C1621.4 831 1622.2 829.7 1623.3 828.3C1624.5 827 1626 825.6 1627.7 824.4C1629.4 823.2 1631.4 822.1 1633.5 821C1635.7 819.9 1638.4 818.8 1640.8 817.8C1643.3 816.9 1645.2 816 1648.1 815.2C1651 814.4 1654.7 813.6 1658.3 812.9C1662 812.1 1666.1 811.4 1670 810.8C1673.9 810.3 1677.5 809.9 1681.7 809.5C1685.8 809.2 1690.2 808.9 1694.8 808.6C1699.4 808.4 1704.5 808.2 1709.4 808.1C1714.2 807.9 1718.4 807.8 1724 807.6C1729.6 807.5 1736.8 807.2 1742.9 807C1749 806.9 1754.3 806.8 1760.4 806.8C1766.5 806.8 1773.3 806.9 1779.4 807C1785.5 807.2 1792 807.4 1796.9 807.6C1801.7 807.8 1804.9 808.1 1808.5 808.4C1812.2 808.6 1815.8 809 1818.8 809.4C1821.7 809.8 1823.9 810.2 1826 810.7C1828.2 811.2 1830.3 811.7 1831.9 812.3C1833.5 812.9 1834.6 813.4 1835.5 814.2C1836.5 815 1837.3 816.5 1837.7 817" stroke="#c8203c"/><path d="M1837.7 817L1837.4 842.9L1837 880.8" stroke="#c8203c"/></g><rect x="1623.8" y="849" width="3.6" height="3.6" fill="#666" stroke="#222" stroke-width="1.2"/><text x="1452.3" y="615.7" font-size="21.4" text-anchor="middle" letter-spacing="0.55">Track SIMN</text><text x="924.4" y="649.6" font-size="21.4" text-anchor="end" fill="#5a8fe0" letter-spacing="0.62">6/67117</text><text x="924.4" y="677.6" font-size="21.4" text-anchor="end" fill="#000" letter-spacing="0.28">Apr 22 2010</text><text x="924.4" y="705.8" font-size="21.4" text-anchor="end" fill="#000" letter-spacing="0.28">34.745</text><text x="924.4" y="869.1" font-size="21.4" text-anchor="end" fill="#000" letter-spacing="-0.42">Unknown</text><text x="924.4" y="897.2" font-size="21.4" text-anchor="end" fill="#000" letter-spacing="-0.42">Unknown</text><text x="924.4" y="953.4" font-size="21.4" text-anchor="end" fill="#000" letter-spacing="0.12">0.264 in.</text><text x="924.4" y="981.5" font-size="21.4" text-anchor="end" fill="#000" letter-spacing="0.12">0.796 in.</text><text x="924.4" y="1009.6" font-size="21.4" text-anchor="end" fill="#000" letter-spacing="0.12">1.060 in.</text><text x="924.4" y="1037.7" font-size="21.4" text-anchor="end" fill="#000" letter-spacing="0.28">28.34 %</text><text x="924.4" y="1065.8" font-size="21.4" text-anchor="end" fill="#000" letter-spacing="0.12">0.000 in.</text><text x="924.4" y="1093.9" font-size="21.4" text-anchor="end" fill="#000" letter-spacing="0.12">0.000 in.</text><text x="924.4" y="1150" font-size="21.4" text-anchor="end" fill="#000" letter-spacing="0.27">-0.4 deg.</text><text x="924.4" y="1178.1" font-size="21.4" text-anchor="end" fill="#000" letter-spacing="0.12">14.8 deg.</text><text x="924.4" y="1234.2" font-size="21.4" text-anchor="end" fill="#000" letter-spacing="0.28">136 LB</text><text x="924.4" y="1262.3" font-size="21.4" text-anchor="end" fill="#000" letter-spacing="0.58">LOW TON</text><text x="1248.2" y="649.6" font-size="21.4" text-anchor="end" fill="#c8203c" letter-spacing="0.62">5/27317</text><text x="1248.2" y="677.6" font-size="21.4" text-anchor="end" fill="#000" letter-spacing="0.28">Sep 10 2010</text><text x="1248.2" y="705.8" font-size="21.4" text-anchor="end" fill="#000" letter-spacing="0.28">34.748</text><text x="1248.2" y="869.1" font-size="21.4" text-anchor="end" fill="#000" letter-spacing="-0.42">Unknown</text><text x="1248.2" y="897.2" font-size="21.4" text-anchor="end" fill="#000" letter-spacing="-0.42">Unknown</text><text x="1248.2" y="953.4" font-size="21.4" text-anchor="end" fill="#000" letter-spacing="0.12">0.412 in.</text><text x="1248.2" y="981.5" font-size="21.4" text-anchor="end" fill="#000" letter-spacing="0.12">0.942 in.</text><text x="1248.2" y="1009.6" font-size="21.4" text-anchor="end" fill="#000" letter-spacing="0.12">1.361 in.</text><text x="1248.2" y="1037.7" font-size="21.4" text-anchor="end" fill="#000" letter-spacing="0.28">36.12 %</text><text x="1248.2" y="1065.8" font-size="21.4" text-anchor="end" fill="#000" letter-spacing="0.12">0.000 in.</text><text x="1248.2" y="1093.9" font-size="21.4" text-anchor="end" fill="#000" letter-spacing="0.12">0.000 in.</text><text x="1248.2" y="1150" font-size="21.4" text-anchor="end" fill="#000" letter-spacing="0.27">-1.5 deg.</text><text x="1248.2" y="1178.1" font-size="21.4" text-anchor="end" fill="#000" letter-spacing="0.12">14.4 deg.</text><text x="1248.2" y="1234.2" font-size="21.4" text-anchor="end" fill="#000" letter-spacing="0.28">136 LB</text><text x="1248.2" y="1262.3" font-size="21.4" text-anchor="end" fill="#000" letter-spacing="0.58">CRITICAL</text><text x="1349.8" y="649.6" font-size="21.4" text-anchor="middle" fill="#1c1c9e" letter-spacing="0.27">Run/Profile</text><text x="1349.8" y="677.6" font-size="21.4" text-anchor="middle" fill="#1c1c9e" letter-spacing="0.27">Run Date</text><text x="1349.8" y="705.8" font-size="21.4" text-anchor="middle" fill="#1c1c9e" letter-spacing="0.27">Mile</text><text x="1349.8" y="734" font-size="21.4" text-anchor="middle" fill="#000" letter-spacing="0.12">10.3 deg. R</text><text x="1349.8" y="761.9" font-size="21.4" text-anchor="middle" fill="#000" letter-spacing="0.58">SEGMENT</text><text x="1349.8" y="789.9" font-size="21.4" text-anchor="middle" fill="#000" letter-spacing="0.27">Segmentation Process.</text><text x="1349.8" y="869.1" font-size="21.4" text-anchor="middle" fill="#1c1c9e" letter-spacing="0.27">Gauge</text><text x="1349.8" y="897.2" font-size="21.4" text-anchor="middle" fill="#1c1c9e" letter-spacing="0.27">Net Gauge</text><text x="1349.8" y="953.4" font-size="21.4" text-anchor="middle" fill="#1c1c9e" letter-spacing="0.27">Vertical Wear</text><text x="1349.8" y="981.5" font-size="21.4" text-anchor="middle" fill="#1c1c9e" letter-spacing="0.27">Gauge Wear</text><text x="1349.8" y="1009.6" font-size="21.4" text-anchor="middle" fill="#1c1c9e" letter-spacing="0.27">Combined Wear</text><text x="1349.8" y="1037.7" font-size="21.4" text-anchor="middle" fill="#1c1c9e" letter-spacing="0.27">% Head Loss</text><text x="1349.8" y="1065.8" font-size="21.4" text-anchor="middle" fill="#1c1c9e" letter-spacing="0.27">Gauge Lip</text><text x="1349.8" y="1093.9" font-size="21.4" text-anchor="middle" fill="#1c1c9e" letter-spacing="0.27">Field Lip</text><text x="1349.8" y="1150" font-size="21.4" text-anchor="middle" fill="#1c1c9e" letter-spacing="0.27">Cant</text><text x="1349.8" y="1178.1" font-size="21.4" text-anchor="middle" fill="#1c1c9e" letter-spacing="0.58">GFA</text><text x="1349.8" y="1234.2" font-size="21.4" text-anchor="middle" fill="#1c1c9e" letter-spacing="0.27">Rail Type</text><text x="1349.8" y="1262.3" font-size="21.4" text-anchor="middle" fill="#1c1c9e" letter-spacing="0.27">Classification</text><text x="1450.0" y="649.6" font-size="21.4" text-anchor="start" fill="#c8203c" letter-spacing="0.62">5/27318</text><text x="1450.0" y="677.6" font-size="21.4" text-anchor="start" fill="#000" letter-spacing="0.28">Sep 10 2010</text><text x="1450.0" y="705.8" font-size="21.4" text-anchor="start" fill="#000" letter-spacing="0.28">34.748</text><text x="1450.0" y="869.1" font-size="21.4" text-anchor="start" fill="#000" letter-spacing="-0.42">Unknown</text><text x="1450.0" y="897.2" font-size="21.4" text-anchor="start" fill="#000" letter-spacing="-0.42">Unknown</text><text x="1450.0" y="953.4" font-size="21.4" text-anchor="start" fill="#000" letter-spacing="0.12">0.382 in.</text><text x="1450.0" y="981.5" font-size="21.4" text-anchor="start" fill="#000" letter-spacing="0.12">-0.015 in.</text><text x="1450.0" y="1009.6" font-size="21.4" text-anchor="start" fill="#000" letter-spacing="0.12">0.382 in.</text><text x="1450.0" y="1037.7" font-size="21.4" text-anchor="start" fill="#000" letter-spacing="0.28">20.30 %</text><text x="1450.0" y="1065.8" font-size="21.4" text-anchor="start" fill="#000" letter-spacing="0.12">0.109 in.</text><text x="1450.0" y="1093.9" font-size="21.4" text-anchor="start" fill="#000" letter-spacing="0.12">0.041 in.</text><text x="1450.0" y="1150" font-size="21.4" text-anchor="start" fill="#000" letter-spacing="0.27">0.7 deg.</text><text x="1450.0" y="1178.1" font-size="21.4" text-anchor="start" fill="#000" letter-spacing="0.27">0.0 deg.</text><text x="1450.0" y="1234.2" font-size="21.4" text-anchor="start" fill="#000" letter-spacing="0.28">136 LB</text><text x="1450.0" y="1262.3" font-size="21.4" text-anchor="start" fill="#000" letter-spacing="0.58">5-YEAR</text><text x="1774.5" y="649.6" font-size="21.4" text-anchor="start" fill="#5a8fe0" letter-spacing="0.62">6/67118</text><text x="1774.5" y="677.6" font-size="21.4" text-anchor="start" fill="#000" letter-spacing="0.28">Apr 22 2010</text><text x="1774.5" y="705.8" font-size="21.4" text-anchor="start" fill="#000" letter-spacing="0.28">34.745</text><text x="1774.5" y="869.1" font-size="21.4" text-anchor="start" fill="#000" letter-spacing="-0.42">Unknown</text><text x="1774.5" y="897.2" font-size="21.4" text-anchor="start" fill="#000" letter-spacing="-0.42">Unknown</text><text x="1774.5" y="953.4" font-size="21.4" text-anchor="start" fill="#000" letter-spacing="0.12">0.480 in.</text><text x="1774.5" y="981.5" font-size="21.4" text-anchor="start" fill="#000" letter-spacing="0.12">0.057 in.</text><text x="1774.5" y="1009.6" font-size="21.4" text-anchor="start" fill="#000" letter-spacing="0.12">0.556 in.</text><text x="1774.5" y="1037.7" font-size="21.4" text-anchor="start" fill="#000" letter-spacing="0.28">23.70 %</text><text x="1774.5" y="1065.8" font-size="21.4" text-anchor="start" fill="#000" letter-spacing="0.12">0.113 in.</text><text x="1774.5" y="1093.9" font-size="21.4" text-anchor="start" fill="#000" letter-spacing="0.12">0.073 in.</text><text x="1774.5" y="1150" font-size="21.4" text-anchor="start" fill="#000" letter-spacing="0.27">0.4 deg.</text><text x="1774.5" y="1178.1" font-size="21.4" text-anchor="start" fill="#000" letter-spacing="0.27">0.0 deg.</text><text x="1774.5" y="1234.2" font-size="21.4" text-anchor="start" fill="#000" letter-spacing="0.28">141 LB</text><text x="1774.5" y="1262.3" font-size="21.4" text-anchor="start" fill="#000" letter-spacing="0.58">5-YEAR</text><text x="936.5" y="1244.7" font-size="21.4">Left</text><text x="1719.5" y="1244.7" font-size="21.4">Right</text></g></svg>
<svg class="abs" style="left:0;top:0" width="1920" height="1286" viewBox="0 0 1920 1286"><ellipse cx="1212.5" cy="699.4" rx="53.2" ry="19.6" fill="none" stroke="#e01818" stroke-width="2"/><path d="M1221.2 497 L1255.5 516.5 L1239.5 519.5 Q1252 541 1262.5 567.5 Q1270.5 590 1273.8 615 Q1275.6 640 1274 660 Q1271.5 684 1266.3 700.5 L1252.5 680 L1230 680.5 Q1247.5 668 1254 655 Q1260 640 1260.2 620 Q1259.5 595 1254.7 575 Q1249.5 558 1242.5 545 L1232 523.5 L1220.7 533.7 Z" fill="#ffff00" stroke="#e01818" stroke-width="2" stroke-linejoin="miter"/><path d="M1230 680 L1252 677.5 L1266 700" fill="none" stroke="#e01818" stroke-width="1.4"/><path d="M1221 155V508" stroke="#000" stroke-width="2"/></svg>
</div></body></html>
